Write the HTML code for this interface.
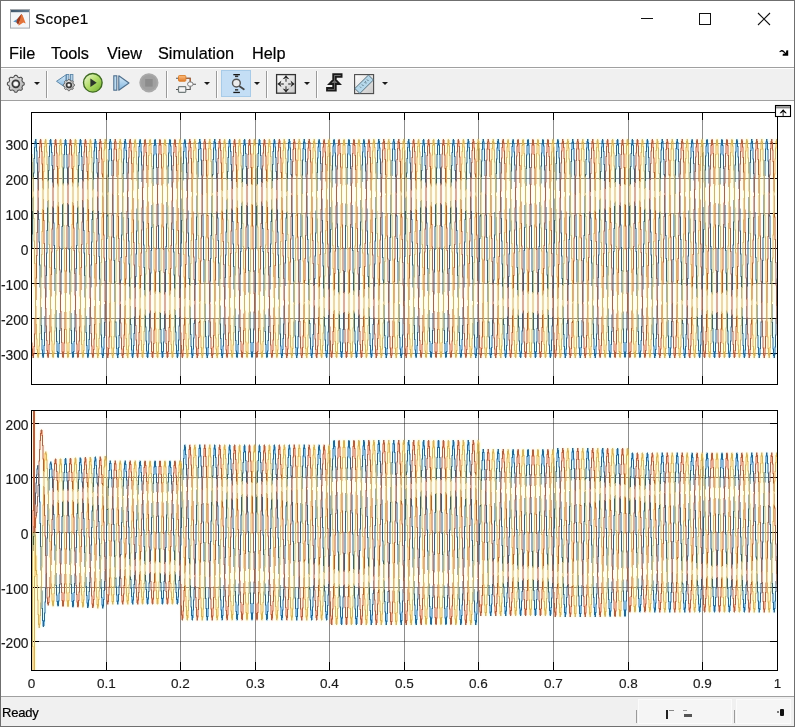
<!DOCTYPE html>
<html><head><meta charset="utf-8"><style>
html,body{margin:0;padding:0}
body{width:795px;height:727px;overflow:hidden;background:#fff;position:relative;font-family:"Liberation Sans",sans-serif;color:#000}
.a{position:absolute}
.t{position:absolute;left:0;top:0;width:795px;height:727px;will-change:transform}
.yl{position:absolute;left:0;width:28.5px;text-align:right;font-size:13.8px;line-height:17px;color:#1a1a1a;-webkit-text-stroke:0.15px #1a1a1a}
.xl{position:absolute;top:675px;width:61px;text-align:center;font-size:13.5px;line-height:17px;color:#1a1a1a;-webkit-text-stroke:0.15px #1a1a1a}
.menu{position:absolute;top:43px;font-size:16.3px;line-height:20px;color:#000;-webkit-text-stroke:0.2px #000}
</style></head><body>
<div class="a" style="left:0;top:0;width:795px;height:1px;background:#6f6f6f"></div>
<div class="a" style="left:0;top:0;width:1px;height:727px;background:#6f6f6f"></div>
<div class="a" style="left:794px;top:0;width:1px;height:727px;background:#6f6f6f"></div>
<div class="a" style="left:0;top:726px;width:795px;height:1px;background:#6f6f6f"></div>
<div class="t">
<div class="a" style="left:35px;top:9px;font-size:15.3px;line-height:19px;letter-spacing:0.3px;color:#000;-webkit-text-stroke:0.2px #000">Scope1</div>
<div class="menu" style="left:9px">File</div>
<div class="menu" style="left:51px">Tools</div>
<div class="menu" style="left:107px">View</div>
<div class="menu" style="left:158px">Simulation</div>
<div class="menu" style="left:252px">Help</div>
<div class="a" style="left:1px;top:67px;width:793px;height:1px;background:#a0a0a0"></div>
<div class="a" style="left:1px;top:69px;width:793px;height:31px;background:#f0f0f0"></div>
<div class="a" style="left:1px;top:100px;width:793px;height:1px;background:#a0a0a0"></div>
<div class="a" style="left:1px;top:696px;width:793px;height:1px;background:#a0a0a0"></div>
<div class="a" style="left:1px;top:697px;width:793px;height:29px;background:#f0f0f0"></div>
<div class="a" style="left:2px;top:704px;font-size:13px;line-height:17px;letter-spacing:-0.2px;color:#000;-webkit-text-stroke:0.2px #000">Ready</div>
<div class="yl" style="top:137px">300</div>
<div class="yl" style="top:172px">200</div>
<div class="yl" style="top:207px">100</div>
<div class="yl" style="top:242px">0</div>
<div class="yl" style="top:277px">-100</div>
<div class="yl" style="top:312px">-200</div>
<div class="yl" style="top:347px">-300</div>
<div class="yl" style="top:417px">200</div>
<div class="yl" style="top:471px">100</div>
<div class="yl" style="top:526px">0</div>
<div class="yl" style="top:581px">-100</div>
<div class="yl" style="top:635px">-200</div>
<div class="xl" style="left:1px">0</div>
<div class="xl" style="left:76px">0.1</div>
<div class="xl" style="left:150px">0.2</div>
<div class="xl" style="left:225px">0.3</div>
<div class="xl" style="left:299px">0.4</div>
<div class="xl" style="left:374px">0.5</div>
<div class="xl" style="left:448px">0.6</div>
<div class="xl" style="left:523px">0.7</div>
<div class="xl" style="left:598px">0.8</div>
<div class="xl" style="left:672px">0.9</div>
<div class="xl" style="left:747px">1</div>
</div>
<svg class="a" style="left:0;top:0" width="795" height="727">
<filter id="cb" x="31" y="110" width="748" height="562" filterUnits="userSpaceOnUse" color-interpolation-filters="sRGB">
<feColorMatrix in="SourceGraphic" type="matrix" values="0.299 0.587 0.114 0 0 0.299 0.587 0.114 0 0 0.299 0.587 0.114 0 0 0 0 0 1 0" result="L"/>
<feGaussianBlur in="SourceGraphic" stdDeviation="1.2" result="B"/>
<feColorMatrix in="B" type="matrix" values="0.299 0.587 0.114 0 0 0.299 0.587 0.114 0 0 0.299 0.587 0.114 0 0 0 0 0 1 0" result="LB"/>
<feComposite in="B" in2="LB" operator="arithmetic" k1="0" k2="1" k3="-1" k4="0.5" result="C"/>
<feComposite in="L" in2="C" operator="arithmetic" k1="0" k2="1" k3="1" k4="-0.5" result="R"/>
<feComposite in="R" in2="SourceGraphic" operator="in"/>
</filter>
<g filter="url(#cb)"><rect x="31" y="112" width="747" height="273" fill="#fff"/><rect x="31" y="410" width="747" height="261" fill="#fff"/><g shape-rendering="crispEdges"><rect x="106" y="112" width="1" height="272" fill="#000" fill-opacity="0.45"/>
<rect x="180" y="112" width="1" height="272" fill="#000" fill-opacity="0.45"/>
<rect x="255" y="112" width="1" height="272" fill="#000" fill-opacity="0.45"/>
<rect x="329" y="112" width="1" height="272" fill="#000" fill-opacity="0.45"/>
<rect x="404" y="112" width="1" height="272" fill="#000" fill-opacity="0.45"/>
<rect x="478" y="112" width="1" height="272" fill="#000" fill-opacity="0.45"/>
<rect x="553" y="112" width="1" height="272" fill="#000" fill-opacity="0.45"/>
<rect x="628" y="112" width="1" height="272" fill="#000" fill-opacity="0.45"/>
<rect x="702" y="112" width="1" height="272" fill="#000" fill-opacity="0.45"/>
<rect x="31" y="143" width="747" height="1" fill="#000" fill-opacity="0.45"/>
<rect x="31" y="178" width="747" height="1" fill="#000" fill-opacity="0.45"/>
<rect x="31" y="213" width="747" height="1" fill="#000" fill-opacity="0.45"/>
<rect x="31" y="248" width="747" height="1" fill="#000" fill-opacity="0.45"/>
<rect x="31" y="283" width="747" height="1" fill="#000" fill-opacity="0.45"/>
<rect x="31" y="318" width="747" height="1" fill="#000" fill-opacity="0.45"/>
<rect x="31" y="353" width="747" height="1" fill="#000" fill-opacity="0.45"/>
<rect x="106" y="112" width="1" height="8" fill="#000"/>
<rect x="106" y="376" width="1" height="8" fill="#000"/>
<rect x="180" y="112" width="1" height="8" fill="#000"/>
<rect x="180" y="376" width="1" height="8" fill="#000"/>
<rect x="255" y="112" width="1" height="8" fill="#000"/>
<rect x="255" y="376" width="1" height="8" fill="#000"/>
<rect x="329" y="112" width="1" height="8" fill="#000"/>
<rect x="329" y="376" width="1" height="8" fill="#000"/>
<rect x="404" y="112" width="1" height="8" fill="#000"/>
<rect x="404" y="376" width="1" height="8" fill="#000"/>
<rect x="478" y="112" width="1" height="8" fill="#000"/>
<rect x="478" y="376" width="1" height="8" fill="#000"/>
<rect x="553" y="112" width="1" height="8" fill="#000"/>
<rect x="553" y="376" width="1" height="8" fill="#000"/>
<rect x="628" y="112" width="1" height="8" fill="#000"/>
<rect x="628" y="376" width="1" height="8" fill="#000"/>
<rect x="702" y="112" width="1" height="8" fill="#000"/>
<rect x="702" y="376" width="1" height="8" fill="#000"/>
<rect x="31" y="143" width="8" height="1" fill="#000"/>
<rect x="770" y="143" width="8" height="1" fill="#000"/>
<rect x="31" y="178" width="8" height="1" fill="#000"/>
<rect x="770" y="178" width="8" height="1" fill="#000"/>
<rect x="31" y="213" width="8" height="1" fill="#000"/>
<rect x="770" y="213" width="8" height="1" fill="#000"/>
<rect x="31" y="248" width="8" height="1" fill="#000"/>
<rect x="770" y="248" width="8" height="1" fill="#000"/>
<rect x="31" y="283" width="8" height="1" fill="#000"/>
<rect x="770" y="283" width="8" height="1" fill="#000"/>
<rect x="31" y="318" width="8" height="1" fill="#000"/>
<rect x="770" y="318" width="8" height="1" fill="#000"/>
<rect x="31" y="353" width="8" height="1" fill="#000"/>
<rect x="770" y="353" width="8" height="1" fill="#000"/>
<rect x="106" y="410" width="1" height="260" fill="#000" fill-opacity="0.45"/>
<rect x="180" y="410" width="1" height="260" fill="#000" fill-opacity="0.45"/>
<rect x="255" y="410" width="1" height="260" fill="#000" fill-opacity="0.45"/>
<rect x="329" y="410" width="1" height="260" fill="#000" fill-opacity="0.45"/>
<rect x="404" y="410" width="1" height="260" fill="#000" fill-opacity="0.45"/>
<rect x="478" y="410" width="1" height="260" fill="#000" fill-opacity="0.45"/>
<rect x="553" y="410" width="1" height="260" fill="#000" fill-opacity="0.45"/>
<rect x="628" y="410" width="1" height="260" fill="#000" fill-opacity="0.45"/>
<rect x="702" y="410" width="1" height="260" fill="#000" fill-opacity="0.45"/>
<rect x="31" y="423" width="747" height="1" fill="#000" fill-opacity="0.45"/>
<rect x="31" y="477" width="747" height="1" fill="#000" fill-opacity="0.45"/>
<rect x="31" y="532" width="747" height="1" fill="#000" fill-opacity="0.45"/>
<rect x="31" y="587" width="747" height="1" fill="#000" fill-opacity="0.45"/>
<rect x="31" y="641" width="747" height="1" fill="#000" fill-opacity="0.45"/>
<rect x="106" y="410" width="1" height="8" fill="#000"/>
<rect x="106" y="662" width="1" height="8" fill="#000"/>
<rect x="180" y="410" width="1" height="8" fill="#000"/>
<rect x="180" y="662" width="1" height="8" fill="#000"/>
<rect x="255" y="410" width="1" height="8" fill="#000"/>
<rect x="255" y="662" width="1" height="8" fill="#000"/>
<rect x="329" y="410" width="1" height="8" fill="#000"/>
<rect x="329" y="662" width="1" height="8" fill="#000"/>
<rect x="404" y="410" width="1" height="8" fill="#000"/>
<rect x="404" y="662" width="1" height="8" fill="#000"/>
<rect x="478" y="410" width="1" height="8" fill="#000"/>
<rect x="478" y="662" width="1" height="8" fill="#000"/>
<rect x="553" y="410" width="1" height="8" fill="#000"/>
<rect x="553" y="662" width="1" height="8" fill="#000"/>
<rect x="628" y="410" width="1" height="8" fill="#000"/>
<rect x="628" y="662" width="1" height="8" fill="#000"/>
<rect x="702" y="410" width="1" height="8" fill="#000"/>
<rect x="702" y="662" width="1" height="8" fill="#000"/>
<rect x="31" y="423" width="8" height="1" fill="#000"/>
<rect x="770" y="423" width="8" height="1" fill="#000"/>
<rect x="31" y="477" width="8" height="1" fill="#000"/>
<rect x="770" y="477" width="8" height="1" fill="#000"/>
<rect x="31" y="532" width="8" height="1" fill="#000"/>
<rect x="770" y="532" width="8" height="1" fill="#000"/>
<rect x="31" y="587" width="8" height="1" fill="#000"/>
<rect x="770" y="587" width="8" height="1" fill="#000"/>
<rect x="31" y="641" width="8" height="1" fill="#000"/>
<rect x="770" y="641" width="8" height="1" fill="#000"/></g><g>
<path fill="#0072BD" d="M31.5 233.5h.5V246.5h-.5zM32 211h.5V248h-.5zM32.5 197.5h.5V234.5h-.5zM33 172.5h.5V177.5h-.5zM33.5 158h.5V191.5h-.5zM34 147h.5V173.5h-.5zM34.5 141h.5V159h-.5zM35 139h.5V148h-.5zM35.5 139h.5V143.5h-.5zM36 139h.5V151.5h-.5zM36.5 142.5h.5V163.5h-.5zM37 150.5h.5V179.5h-.5zM37.5 162.5h.5V189.5h-.5zM38 211h.5V220h-.5zM38.5 197.5h.5V242.5h-.5zM39 219h.5V265.5h-.5zM39.5 241.5h.5V287.5h-.5zM40 264.5h.5V297.5h-.5zM40.5 318h.5V326h-.5zM41 307h.5V340h-.5zM41.5 325h.5V350.5h-.5zM42 339h.5V356.5h-.5zM42.5 349.5h.5V358h-.5zM43 353h.5V358h-.5zM43.5 345h.5V357.5h-.5zM44 332h.5V354h-.5zM44.5 316h.5V346h-.5zM45 309h.5V333h-.5zM45.5 275h.5V287.5h-.5zM46 252.5h.5V297.5h-.5zM46.5 230h.5V276h-.5zM47 207.5h.5V253.5h-.5zM47.5 201h.5V231h-.5zM48 170h.5V180.5h-.5zM48.5 156h.5V188.5h-.5zM49 145.5h.5V171h-.5zM49.5 140h.5V157h-.5zM50 139h.5V146.5h-.5zM50.5 139h.5V144.5h-.5zM51 139.5h.5V153h-.5zM51.5 143.5h.5V166h-.5zM52 152h.5V182.5h-.5zM52.5 165h.5V186.5h-.5zM53 207.5h.5V223.5h-.5zM53.5 201h.5V246h-.5zM54 222.5h.5V269h-.5zM54.5 245h.5V291h-.5zM55 268h.5V294.5h-.5zM55.5 315h.5V328.5h-.5zM56 310h.5V342h-.5zM56.5 327.5h.5V352h-.5zM57 341h.5V357h-.5zM57.5 351h.5V358h-.5zM58 352h.5V358h-.5zM58.5 343h.5V357.5h-.5zM59 330h.5V353h-.5zM59.5 313h.5V344h-.5zM60 312h.5V331h-.5zM60.5 271.5h.5V291h-.5zM61 249h.5V294.5h-.5zM61.5 226h.5V272.5h-.5zM62 204.5h.5V250h-.5zM62.5 204h.5V227h-.5zM63 167.5h.5V183.5h-.5zM63.5 154h.5V185.5h-.5zM64 144.5h.5V168.5h-.5zM64.5 140h.5V155h-.5zM65 139h.5V145.5h-.5zM65.5 139h.5V145.5h-.5zM66 140h.5V155h-.5zM66.5 144.5h.5V168.5h-.5zM67 154h.5V185.5h-.5zM67.5 167.5h.5V183.5h-.5zM68 204h.5V227h-.5zM68.5 204.5h.5V250h-.5zM69 226h.5V272.5h-.5zM69.5 249h.5V294.5h-.5zM70 271.5h.5V291h-.5zM70.5 312h.5V331h-.5zM71 313h.5V344h-.5zM71.5 330h.5V353h-.5zM72 343h.5V357.5h-.5zM72.5 352h.5V358h-.5zM73 351h.5V358h-.5zM73.5 341h.5V357h-.5zM74 327.5h.5V352h-.5zM74.5 310h.5V342h-.5zM75 315h.5V328.5h-.5zM75.5 268h.5V294.5h-.5zM76 245h.5V291h-.5zM76.5 222.5h.5V269h-.5zM77 201h.5V246h-.5zM77.5 207.5h.5V223.5h-.5zM78 165h.5V186.5h-.5zM78.5 152h.5V182.5h-.5zM79 143.5h.5V166h-.5zM79.5 139.5h.5V153h-.5zM80 139h.5V144.5h-.5zM80.5 139h.5V146.5h-.5zM81 140h.5V157h-.5zM81.5 145.5h.5V171h-.5zM82 156h.5V188.5h-.5zM82.5 170h.5V180.5h-.5zM83 201h.5V231h-.5zM83.5 207.5h.5V253.5h-.5zM84 230h.5V276h-.5zM84.5 252.5h.5V297.5h-.5zM85 275h.5V287.5h-.5zM85.5 309h.5V333h-.5zM86 316h.5V346h-.5zM86.5 332h.5V354h-.5zM87 345h.5V357.5h-.5zM87.5 353h.5V358h-.5zM88 349.5h.5V358h-.5zM88.5 339h.5V356.5h-.5zM89 325h.5V350.5h-.5zM89.5 307h.5V340h-.5zM90 318h.5V326h-.5zM90.5 264.5h.5V297.5h-.5zM91 241.5h.5V287.5h-.5zM91.5 219h.5V265.5h-.5zM92 197.5h.5V242.5h-.5zM92.5 211h.5V220h-.5zM93 162.5h.5V189.5h-.5zM93.5 150.5h.5V179.5h-.5zM94 142.5h.5V163.5h-.5zM94.5 139h.5V151.5h-.5zM95 139h.5V143.5h-.5zM95.5 139h.5V148h-.5zM96 141h.5V159h-.5zM96.5 147h.5V173.5h-.5zM97 158h.5V191.5h-.5zM97.5 172.5h.5V177.5h-.5zM98 197.5h.5V234.5h-.5zM98.5 211h.5V257h-.5zM99 233.5h.5V279.5h-.5zM99.5 256h.5V301h-.5zM100 278.5h.5V284.5h-.5zM100.5 306h.5V335.5h-.5zM101 318.5h.5V347.5h-.5zM101.5 334.5h.5V355h-.5zM102 346.5h.5V358h-.5zM102.5 354h.5V358h-.5zM103 348.5h.5V358h-.5zM103.5 337h.5V356h-.5zM104 322h.5V349.5h-.5zM104.5 304h.5V338h-.5zM105 320.5h.5V323h-.5zM105.5 261h.5V301h-.5zM106 238h.5V284h-.5zM106.5 215.5h.5V262h-.5zM107 194.5h.5V239h-.5zM107.5 214.5h.5V216.5h-.5zM108 160.5h.5V192.5h-.5zM108.5 149h.5V177h-.5zM109 141.5h.5V161.5h-.5zM109.5 139h.5V150h-.5zM110 139h.5V142.5h-.5zM110.5 139h.5V149.5h-.5zM111 141.5h.5V161h-.5zM111.5 148.5h.5V176h-.5zM112 160h.5V193.5h-.5zM113 194.5h.5V238h-.5zM113.5 214.5h.5V261h-.5zM114 237h.5V283h-.5zM114.5 260h.5V302h-.5zM115 321.5h.5V322.5h-.5zM115.5 303h.5V337.5h-.5zM116 321.5h.5V349h-.5zM116.5 336.5h.5V355.5h-.5zM117 348h.5V358h-.5zM117.5 354h.5V358h-.5zM118 347h.5V358h-.5zM118.5 335h.5V355h-.5zM119 319.5h.5V348h-.5zM119.5 305h.5V336h-.5zM120 279.5h.5V283.5h-.5zM120.5 257h.5V301.5h-.5zM121 234.5h.5V280.5h-.5zM121.5 212h.5V258h-.5zM122 197h.5V235.5h-.5zM122.5 173h.5V177h-.5zM123 158.5h.5V192.5h-.5zM123.5 147.5h.5V174h-.5zM124 141h.5V159.5h-.5zM124.5 139h.5V148.5h-.5zM125 139h.5V143.5h-.5zM125.5 139h.5V151h-.5zM126 142.5h.5V163h-.5zM126.5 150h.5V179h-.5zM127 162h.5V190.5h-.5zM127.5 212h.5V219h-.5zM128 197h.5V241.5h-.5zM128.5 218h.5V264.5h-.5zM129 240.5h.5V286.5h-.5zM129.5 263.5h.5V298.5h-.5zM130 318.5h.5V325h-.5zM130.5 306h.5V339.5h-.5zM131 324h.5V350.5h-.5zM131.5 338.5h.5V356.5h-.5zM132 349.5h.5V358h-.5zM132.5 353.5h.5V358h-.5zM133 345h.5V357.5h-.5zM133.5 333h.5V354.5h-.5zM134 316.5h.5V346h-.5zM134.5 308h.5V334h-.5zM135 276h.5V287h-.5zM135.5 253.5h.5V298.5h-.5zM136 230.5h.5V277h-.5zM136.5 208.5h.5V254.5h-.5zM137 200h.5V231.5h-.5zM137.5 170.5h.5V180h-.5zM138 156.5h.5V189h-.5zM138.5 146h.5V171.5h-.5zM139 140.5h.5V157.5h-.5zM139.5 139h.5V147h-.5zM140 139h.5V144h-.5zM140.5 139.5h.5V152.5h-.5zM141 143h.5V165.5h-.5zM141.5 151.5h.5V182h-.5zM142 164.5h.5V187h-.5zM142.5 208.5h.5V222.5h-.5zM143 200h.5V245.5h-.5zM143.5 221.5h.5V268h-.5zM144 244.5h.5V290h-.5zM144.5 267h.5V295.5h-.5zM145 315.5h.5V327.5h-.5zM145.5 309.5h.5V341.5h-.5zM146 326.5h.5V351.5h-.5zM146.5 340.5h.5V357h-.5zM147 350.5h.5V358h-.5zM147.5 352.5h.5V358h-.5zM148 343.5h.5V357.5h-.5zM148.5 330.5h.5V353.5h-.5zM149 313.5h.5V344.5h-.5zM149.5 311.5h.5V331.5h-.5zM150 272.5h.5V290.5h-.5zM150.5 250h.5V295h-.5zM151 227h.5V273.5h-.5zM151.5 205h.5V251h-.5zM152 203.5h.5V228h-.5zM152.5 168h.5V182.5h-.5zM153 154.5h.5V186h-.5zM153.5 145h.5V169h-.5zM154 140h.5V155.5h-.5zM154.5 139h.5V146h-.5zM155 139h.5V145.5h-.5zM155.5 139.5h.5V154.5h-.5zM156 144.5h.5V168h-.5zM156.5 153.5h.5V184.5h-.5zM157 167h.5V184h-.5zM157.5 205h.5V226h-.5zM158 203.5h.5V249h-.5zM158.5 225h.5V272h-.5zM159 248h.5V293.5h-.5zM159.5 271h.5V292h-.5zM160 313h.5V330h-.5zM160.5 312.5h.5V343.5h-.5zM161 329h.5V352.5h-.5zM161.5 342.5h.5V357.5h-.5zM162 351.5h.5V358h-.5zM162.5 351h.5V358h-.5zM163 341.5h.5V357h-.5zM163.5 328h.5V352h-.5zM164 311h.5V342.5h-.5zM164.5 314.5h.5V329h-.5zM165 269h.5V293.5h-.5zM165.5 246h.5V292h-.5zM166 223.5h.5V270h-.5zM166.5 202h.5V247h-.5zM167 206.5h.5V224.5h-.5zM167.5 165.5h.5V185.5h-.5zM168 152.5h.5V183.5h-.5zM168.5 143.5h.5V166.5h-.5zM169 139.5h.5V153.5h-.5zM169.5 139h.5V144.5h-.5zM170 139h.5V146.5h-.5zM170.5 140h.5V156.5h-.5zM171 145.5h.5V170.5h-.5zM171.5 155.5h.5V187.5h-.5zM172 169.5h.5V181.5h-.5zM172.5 201.5h.5V230h-.5zM173 207h.5V252.5h-.5zM173.5 229h.5V275.5h-.5zM174 251.5h.5V297h-.5zM174.5 274.5h.5V288.5h-.5zM175 310h.5V332.5h-.5zM175.5 315h.5V345.5h-.5zM176 331.5h.5V354h-.5zM176.5 344.5h.5V357.5h-.5zM177 353h.5V358h-.5zM177.5 350h.5V358h-.5zM178 339.5h.5V356.5h-.5zM178.5 325.5h.5V351h-.5zM179 308h.5V340.5h-.5zM179.5 317h.5V326.5h-.5zM180 265.5h.5V297h-.5zM180.5 242.5h.5V288.5h-.5zM181 220h.5V266.5h-.5zM181.5 198.5h.5V243.5h-.5zM182 210h.5V221h-.5zM182.5 163h.5V189h-.5zM183 151h.5V180.5h-.5zM183.5 142.5h.5V164h-.5zM184 139.5h.5V152h-.5zM184.5 139h.5V143.5h-.5zM185 139h.5V147.5h-.5zM185.5 140.5h.5V158.5h-.5zM186 146.5h.5V173h-.5zM186.5 157.5h.5V191h-.5zM187 172h.5V178.5h-.5zM187.5 198.5h.5V233.5h-.5zM188 210.5h.5V256.5h-.5zM188.5 232.5h.5V279h-.5zM189 255.5h.5V300h-.5zM189.5 278h.5V285h-.5zM190 306.5h.5V335h-.5zM190.5 318h.5V347h-.5zM191 334h.5V354.5h-.5zM191.5 346h.5V358h-.5zM192 353.5h.5V358h-.5zM192.5 348.5h.5V358h-.5zM193 337.5h.5V356h-.5zM193.5 323h.5V349.5h-.5zM194 304.5h.5V338.5h-.5zM194.5 320h.5V324h-.5zM195 261.5h.5V300h-.5zM195.5 239h.5V285h-.5zM196 216.5h.5V262.5h-.5zM196.5 195.5h.5V240h-.5zM197 213.5h.5V217.5h-.5zM197.5 161h.5V192h-.5zM198 149h.5V177.5h-.5zM198.5 142h.5V162h-.5zM199 139h.5V150h-.5zM199.5 139h.5V143h-.5zM200 139h.5V149h-.5zM200.5 141.5h.5V160.5h-.5zM201 148h.5V175.5h-.5zM201.5 159.5h.5V194h-.5zM202 174.5h.5V175.5h-.5zM202.5 195h.5V237h-.5zM203 214h.5V260h-.5zM203.5 236h.5V282.5h-.5zM204 259h.5V302.5h-.5zM205 303.5h.5V337h-.5zM205.5 321h.5V348.5h-.5zM206 336h.5V355.5h-.5zM206.5 347.5h.5V358h-.5zM207 354.5h.5V358h-.5zM207.5 347h.5V358h-.5zM208 335.5h.5V355.5h-.5zM208.5 320h.5V348h-.5zM209 304.5h.5V336.5h-.5zM209.5 280.5h.5V282.5h-.5zM210 258h.5V302.5h-.5zM210.5 235h.5V281.5h-.5zM211 213h.5V259h-.5zM211.5 196h.5V236h-.5zM212 174h.5V176.5h-.5zM212.5 159h.5V193h-.5zM213 147.5h.5V175h-.5zM213.5 141h.5V160h-.5zM214 139h.5V148.5h-.5zM214.5 139h.5V143h-.5zM215 139h.5V150.5h-.5zM215.5 142h.5V162.5h-.5zM216 149.5h.5V178.5h-.5zM216.5 161.5h.5V191h-.5zM217 212.5h.5V218.5h-.5zM217.5 196h.5V241h-.5zM218 217.5h.5V263.5h-.5zM218.5 240h.5V286h-.5zM219 262.5h.5V299.5h-.5zM219.5 319.5h.5V324.5h-.5zM220 305.5h.5V339h-.5zM220.5 323.5h.5V350h-.5zM221 338h.5V356h-.5zM221.5 349h.5V358h-.5zM222 353.5h.5V358h-.5zM222.5 345.5h.5V358h-.5zM223 333.5h.5V354.5h-.5zM223.5 317.5h.5V346.5h-.5zM224 307.5h.5V334.5h-.5zM224.5 277h.5V286h-.5zM225 254.5h.5V299.5h-.5zM225.5 231.5h.5V278h-.5zM226 209.5h.5V255.5h-.5zM226.5 199.5h.5V232.5h-.5zM227 171h.5V179h-.5zM227.5 157h.5V190h-.5zM228 146.5h.5V172h-.5zM228.5 140.5h.5V158h-.5zM229 139h.5V147.5h-.5zM229.5 139h.5V144h-.5zM230 139.5h.5V152h-.5zM230.5 143h.5V165h-.5zM231 151h.5V181h-.5zM231.5 164h.5V188h-.5zM232 209.5h.5V222h-.5zM232.5 199.5h.5V244.5h-.5zM233 221h.5V267h-.5zM233.5 243.5h.5V289.5h-.5zM234 266h.5V296h-.5zM234.5 316.5h.5V327h-.5zM235 308.5h.5V341h-.5zM235.5 326h.5V351.5h-.5zM236 340h.5V357h-.5zM236.5 350.5h.5V358h-.5zM237 352.5h.5V358h-.5zM237.5 344h.5V357.5h-.5zM238 331h.5V353.5h-.5zM238.5 314.5h.5V345h-.5zM239 310.5h.5V332h-.5zM239.5 273.5h.5V289.5h-.5zM240 251h.5V296h-.5zM240.5 228h.5V274.5h-.5zM241 206h.5V252h-.5zM241.5 202.5h.5V229h-.5zM242 168.5h.5V182h-.5zM242.5 155h.5V187h-.5zM243 145h.5V169.5h-.5zM243.5 140h.5V156h-.5zM244 139h.5V146h-.5zM244.5 139h.5V145h-.5zM245 139.5h.5V154h-.5zM245.5 144h.5V167h-.5zM246 153h.5V184h-.5zM246.5 166h.5V185h-.5zM247 206h.5V225.5h-.5zM247.5 202.5h.5V248h-.5zM248 224.5h.5V271h-.5zM248.5 247h.5V292.5h-.5zM249 270h.5V293h-.5zM249.5 313.5h.5V329.5h-.5zM250 311.5h.5V343h-.5zM250.5 328.5h.5V352.5h-.5zM251 342h.5V357h-.5zM251.5 351.5h.5V358h-.5zM252 351.5h.5V358h-.5zM252.5 342h.5V357h-.5zM253 328.5h.5V352.5h-.5zM253.5 311.5h.5V343h-.5zM254 313.5h.5V329.5h-.5zM254.5 270h.5V293h-.5zM255 247h.5V292.5h-.5zM255.5 224.5h.5V271h-.5zM256 202.5h.5V248h-.5zM256.5 206h.5V225.5h-.5zM257 166h.5V185h-.5zM257.5 153h.5V184h-.5zM258 144h.5V167h-.5zM258.5 139.5h.5V154h-.5zM259 139h.5V145h-.5zM259.5 139h.5V146h-.5zM260 140h.5V156h-.5zM260.5 145h.5V169.5h-.5zM261 155h.5V187h-.5zM261.5 168.5h.5V182h-.5zM262 202.5h.5V229h-.5zM262.5 206h.5V252h-.5zM263 228h.5V274.5h-.5zM263.5 251h.5V296h-.5zM264 273.5h.5V289.5h-.5zM264.5 310.5h.5V332h-.5zM265 314.5h.5V345h-.5zM265.5 331h.5V353.5h-.5zM266 344h.5V357.5h-.5zM266.5 352.5h.5V358h-.5zM267 350.5h.5V358h-.5zM267.5 340h.5V357h-.5zM268 326h.5V351.5h-.5zM268.5 308.5h.5V341h-.5zM269 316.5h.5V327h-.5zM269.5 266h.5V296h-.5zM270 243.5h.5V289.5h-.5zM270.5 221h.5V267h-.5zM271 199.5h.5V244.5h-.5zM271.5 209.5h.5V222h-.5zM272 164h.5V188h-.5zM272.5 151h.5V181h-.5zM273 143h.5V165h-.5zM273.5 139.5h.5V152h-.5zM274 139h.5V144h-.5zM274.5 139h.5V147.5h-.5zM275 140.5h.5V158h-.5zM275.5 146.5h.5V172h-.5zM276 157h.5V190h-.5zM276.5 171h.5V179h-.5zM277 199.5h.5V232.5h-.5zM277.5 209.5h.5V255.5h-.5zM278 231.5h.5V278h-.5zM278.5 254.5h.5V299.5h-.5zM279 277h.5V286h-.5zM279.5 307.5h.5V334.5h-.5zM280 317.5h.5V346.5h-.5zM280.5 333.5h.5V354.5h-.5zM281 345.5h.5V358h-.5zM281.5 353.5h.5V358h-.5zM282 349h.5V358h-.5zM282.5 338h.5V356h-.5zM283 323.5h.5V350h-.5zM283.5 305.5h.5V339h-.5zM284 319.5h.5V324.5h-.5zM284.5 262.5h.5V299.5h-.5zM285 240h.5V286h-.5zM285.5 217.5h.5V263.5h-.5zM286 196h.5V241h-.5zM286.5 212.5h.5V218.5h-.5zM287 161.5h.5V191h-.5zM287.5 149.5h.5V178.5h-.5zM288 142h.5V162.5h-.5zM288.5 139h.5V150.5h-.5zM289 139h.5V143h-.5zM289.5 139h.5V148.5h-.5zM290 141h.5V160h-.5zM290.5 147.5h.5V175h-.5zM291 159h.5V193h-.5zM291.5 174h.5V176.5h-.5zM292 196h.5V236h-.5zM292.5 213h.5V259h-.5zM293 235h.5V281.5h-.5zM293.5 258h.5V302.5h-.5zM294 280.5h.5V282.5h-.5zM294.5 304.5h.5V336.5h-.5zM295 320h.5V348h-.5zM295.5 335.5h.5V355.5h-.5zM296 347h.5V358h-.5zM296.5 354.5h.5V358h-.5zM297 347.5h.5V358h-.5zM297.5 336h.5V355.5h-.5zM298 321h.5V348.5h-.5zM298.5 303.5h.5V337h-.5zM299.5 259h.5V302.5h-.5zM300 236h.5V282.5h-.5zM300.5 214h.5V260h-.5zM301 195h.5V237h-.5zM301.5 174.5h.5V175.5h-.5zM302 159.5h.5V194h-.5zM302.5 148h.5V175.5h-.5zM303 141.5h.5V160.5h-.5zM303.5 139h.5V149h-.5zM304 139h.5V143h-.5zM304.5 139h.5V150h-.5zM305 142h.5V162h-.5zM305.5 149h.5V177.5h-.5zM306 161h.5V192h-.5zM306.5 213.5h.5V217.5h-.5zM307 195.5h.5V240h-.5zM307.5 216.5h.5V262.5h-.5zM308 239h.5V285h-.5zM308.5 261.5h.5V300h-.5zM309 320h.5V324h-.5zM309.5 304.5h.5V338.5h-.5zM310 323h.5V349.5h-.5zM310.5 337.5h.5V356h-.5zM311 348.5h.5V358h-.5zM311.5 353.5h.5V358h-.5zM312 346h.5V358h-.5zM312.5 334h.5V354.5h-.5zM313 318h.5V347h-.5zM313.5 306.5h.5V335h-.5zM314 278h.5V285h-.5zM314.5 255.5h.5V300h-.5zM315 232.5h.5V279h-.5zM315.5 210.5h.5V256.5h-.5zM316 198.5h.5V233.5h-.5zM316.5 172h.5V178.5h-.5zM317 157.5h.5V191h-.5zM317.5 146.5h.5V173h-.5zM318 140.5h.5V158.5h-.5zM318.5 139h.5V147.5h-.5zM319 139h.5V143.5h-.5zM319.5 139.5h.5V152h-.5zM320 142.5h.5V164h-.5zM320.5 151h.5V180.5h-.5zM321 163h.5V189h-.5zM321.5 210h.5V221h-.5zM322 198.5h.5V243.5h-.5zM322.5 220h.5V266.5h-.5zM323 242.5h.5V288.5h-.5zM323.5 265.5h.5V297h-.5zM324 317h.5V326.5h-.5zM324.5 308h.5V340.5h-.5zM325 325.5h.5V351h-.5zM325.5 339.5h.5V356.5h-.5zM326 350h.5V358h-.5zM326.5 353h.5V358h-.5zM327 344.5h.5V357.5h-.5zM327.5 331.5h.5V354h-.5zM328 315h.5V345.5h-.5zM328.5 310h.5V332.5h-.5zM329 274.5h.5V288.5h-.5zM329.5 251.5h.5V297h-.5zM330 229h.5V275.5h-.5zM330.5 207h.5V252.5h-.5zM331 201.5h.5V230h-.5zM331.5 169.5h.5V181.5h-.5zM332 155.5h.5V187.5h-.5zM332.5 145.5h.5V170.5h-.5zM333 140h.5V156.5h-.5zM333.5 139h.5V146.5h-.5zM334 139h.5V144.5h-.5zM334.5 139.5h.5V153.5h-.5zM335 143.5h.5V166.5h-.5zM335.5 152.5h.5V183.5h-.5zM336 165.5h.5V185.5h-.5zM336.5 206.5h.5V224.5h-.5zM337 202h.5V247h-.5zM337.5 223.5h.5V270h-.5zM338 246h.5V292h-.5zM338.5 269h.5V293.5h-.5zM339 314.5h.5V329h-.5zM339.5 311h.5V342.5h-.5zM340 328h.5V352h-.5zM340.5 341.5h.5V357h-.5zM341 351h.5V358h-.5zM341.5 351.5h.5V358h-.5zM342 342.5h.5V357.5h-.5zM342.5 329h.5V352.5h-.5zM343 312.5h.5V343.5h-.5zM343.5 313h.5V330h-.5zM344 271h.5V292h-.5zM344.5 248h.5V293.5h-.5zM345 225h.5V272h-.5zM345.5 203.5h.5V249h-.5zM346 205h.5V226h-.5zM346.5 167h.5V184h-.5zM347 153.5h.5V184.5h-.5zM347.5 144.5h.5V168h-.5zM348 139.5h.5V154.5h-.5zM348.5 139h.5V145.5h-.5zM349 139h.5V146h-.5zM349.5 140h.5V155.5h-.5zM350 145h.5V169h-.5zM350.5 154.5h.5V186h-.5zM351 168h.5V182.5h-.5zM351.5 203.5h.5V228h-.5zM352 205h.5V251h-.5zM352.5 227h.5V273.5h-.5zM353 250h.5V295h-.5zM353.5 272.5h.5V290.5h-.5zM354 311.5h.5V331.5h-.5zM354.5 313.5h.5V344.5h-.5zM355 330.5h.5V353.5h-.5zM355.5 343.5h.5V357.5h-.5zM356 352.5h.5V358h-.5zM356.5 350.5h.5V358h-.5zM357 340.5h.5V357h-.5zM357.5 326.5h.5V351.5h-.5zM358 309.5h.5V341.5h-.5zM358.5 315.5h.5V327.5h-.5zM359 267h.5V295.5h-.5zM359.5 244.5h.5V290h-.5zM360 221.5h.5V268h-.5zM360.5 200h.5V245.5h-.5zM361 208.5h.5V222.5h-.5zM361.5 164.5h.5V187h-.5zM362 151.5h.5V182h-.5zM362.5 143h.5V165.5h-.5zM363 139.5h.5V152.5h-.5zM363.5 139h.5V144h-.5zM364 139h.5V147h-.5zM364.5 140.5h.5V157.5h-.5zM365 146h.5V171.5h-.5zM365.5 156.5h.5V189h-.5zM366 170.5h.5V180h-.5zM366.5 200h.5V231.5h-.5zM367 208.5h.5V254.5h-.5zM367.5 230.5h.5V277h-.5zM368 253.5h.5V298.5h-.5zM368.5 276h.5V287h-.5zM369 308h.5V334h-.5zM369.5 316.5h.5V346h-.5zM370 333h.5V354.5h-.5zM370.5 345h.5V357.5h-.5zM371 353.5h.5V358h-.5zM371.5 349.5h.5V358h-.5zM372 338.5h.5V356.5h-.5zM372.5 324h.5V350.5h-.5zM373 306h.5V339.5h-.5zM373.5 318.5h.5V325h-.5zM374 263.5h.5V298.5h-.5zM374.5 240.5h.5V286.5h-.5zM375 218h.5V264.5h-.5zM375.5 197h.5V241.5h-.5zM376 212h.5V219h-.5zM376.5 162h.5V190.5h-.5zM377 150h.5V179h-.5zM377.5 142.5h.5V163h-.5zM378 139h.5V151h-.5zM378.5 139h.5V143.5h-.5zM379 139h.5V148.5h-.5zM379.5 141h.5V159.5h-.5zM380 147.5h.5V174h-.5zM380.5 158.5h.5V192.5h-.5zM381 173h.5V177h-.5zM381.5 197h.5V235.5h-.5zM382 212h.5V258h-.5zM382.5 234.5h.5V280.5h-.5zM383 257h.5V301.5h-.5zM383.5 279.5h.5V283.5h-.5zM384 305h.5V336h-.5zM384.5 319.5h.5V348h-.5zM385 335h.5V355h-.5zM385.5 347h.5V358h-.5zM386 354h.5V358h-.5zM386.5 348h.5V358h-.5zM387 336.5h.5V355.5h-.5zM387.5 321.5h.5V349h-.5zM388 303h.5V337.5h-.5zM388.5 321.5h.5V322.5h-.5zM389 260h.5V302h-.5zM389.5 237h.5V283h-.5zM390 214.5h.5V261h-.5zM390.5 194.5h.5V238h-.5zM391.5 160h.5V193.5h-.5zM392 148.5h.5V176h-.5zM392.5 141.5h.5V161h-.5zM393 139h.5V149.5h-.5zM393.5 139h.5V142.5h-.5zM394 139h.5V150h-.5zM394.5 141.5h.5V161.5h-.5zM395 149h.5V177h-.5zM395.5 160.5h.5V192.5h-.5zM396 214.5h.5V216.5h-.5zM396.5 194.5h.5V239h-.5zM397 215.5h.5V262h-.5zM397.5 238h.5V284h-.5zM398 261h.5V301h-.5zM398.5 320.5h.5V323h-.5zM399 304h.5V338h-.5zM399.5 322h.5V349.5h-.5zM400 337h.5V356h-.5zM400.5 348.5h.5V358h-.5zM401 354h.5V358h-.5zM401.5 346.5h.5V358h-.5zM402 334.5h.5V355h-.5zM402.5 318.5h.5V347.5h-.5zM403 306h.5V335.5h-.5zM403.5 278.5h.5V284.5h-.5zM404 256h.5V301h-.5zM404.5 233.5h.5V279.5h-.5zM405 211h.5V257h-.5zM405.5 197.5h.5V234.5h-.5zM406 172.5h.5V177.5h-.5zM406.5 158h.5V191.5h-.5zM407 147h.5V173.5h-.5zM407.5 141h.5V159h-.5zM408 139h.5V148h-.5zM408.5 139h.5V143.5h-.5zM409 139h.5V151.5h-.5zM409.5 142.5h.5V163.5h-.5zM410 150.5h.5V179.5h-.5zM410.5 162.5h.5V189.5h-.5zM411 211h.5V220h-.5zM411.5 197.5h.5V242.5h-.5zM412 219h.5V265.5h-.5zM412.5 241.5h.5V287.5h-.5zM413 264.5h.5V297.5h-.5zM413.5 318h.5V326h-.5zM414 307h.5V340h-.5zM414.5 325h.5V350.5h-.5zM415 339h.5V356.5h-.5zM415.5 349.5h.5V358h-.5zM416 353h.5V358h-.5zM416.5 345h.5V357.5h-.5zM417 332h.5V354h-.5zM417.5 316h.5V346h-.5zM418 309h.5V333h-.5zM418.5 275h.5V287.5h-.5zM419 252.5h.5V297.5h-.5zM419.5 230h.5V276h-.5zM420 207.5h.5V253.5h-.5zM420.5 201h.5V231h-.5zM421 170h.5V180.5h-.5zM421.5 156h.5V188.5h-.5zM422 145.5h.5V171h-.5zM422.5 140h.5V157h-.5zM423 139h.5V146.5h-.5zM423.5 139h.5V144.5h-.5zM424 139.5h.5V153h-.5zM424.5 143.5h.5V166h-.5zM425 152h.5V182.5h-.5zM425.5 165h.5V186.5h-.5zM426 207.5h.5V223.5h-.5zM426.5 201h.5V246h-.5zM427 222.5h.5V269h-.5zM427.5 245h.5V291h-.5zM428 268h.5V294.5h-.5zM428.5 315h.5V328.5h-.5zM429 310h.5V342h-.5zM429.5 327.5h.5V352h-.5zM430 341h.5V357h-.5zM430.5 351h.5V358h-.5zM431 352h.5V358h-.5zM431.5 343h.5V357.5h-.5zM432 330h.5V353h-.5zM432.5 313h.5V344h-.5zM433 312h.5V331h-.5zM433.5 271.5h.5V291h-.5zM434 249h.5V294.5h-.5zM434.5 226h.5V272.5h-.5zM435 204.5h.5V250h-.5zM435.5 204h.5V227h-.5zM436 167.5h.5V183.5h-.5zM436.5 154h.5V185.5h-.5zM437 144.5h.5V168.5h-.5zM437.5 140h.5V155h-.5zM438 139h.5V145.5h-.5zM438.5 139h.5V145.5h-.5zM439 140h.5V155h-.5zM439.5 144.5h.5V168.5h-.5zM440 154h.5V185.5h-.5zM440.5 167.5h.5V183.5h-.5zM441 204h.5V227h-.5zM441.5 204.5h.5V250h-.5zM442 226h.5V272.5h-.5zM442.5 249h.5V294.5h-.5zM443 271.5h.5V291h-.5zM443.5 312h.5V331h-.5zM444 313h.5V344h-.5zM444.5 330h.5V353h-.5zM445 343h.5V357.5h-.5zM445.5 352h.5V358h-.5zM446 351h.5V358h-.5zM446.5 341h.5V357h-.5zM447 327.5h.5V352h-.5zM447.5 310h.5V342h-.5zM448 315h.5V328.5h-.5zM448.5 268h.5V294.5h-.5zM449 245h.5V291h-.5zM449.5 222.5h.5V269h-.5zM450 201h.5V246h-.5zM450.5 207.5h.5V223.5h-.5zM451 165h.5V186.5h-.5zM451.5 152h.5V182.5h-.5zM452 143.5h.5V166h-.5zM452.5 139.5h.5V153h-.5zM453 139h.5V144.5h-.5zM453.5 139h.5V146.5h-.5zM454 140h.5V157h-.5zM454.5 145.5h.5V171h-.5zM455 156h.5V188.5h-.5zM455.5 170h.5V180.5h-.5zM456 201h.5V231h-.5zM456.5 207.5h.5V253.5h-.5zM457 230h.5V276h-.5zM457.5 252.5h.5V297.5h-.5zM458 275h.5V287.5h-.5zM458.5 309h.5V333h-.5zM459 316h.5V346h-.5zM459.5 332h.5V354h-.5zM460 345h.5V357.5h-.5zM460.5 353h.5V358h-.5zM461 349.5h.5V358h-.5zM461.5 339h.5V356.5h-.5zM462 325h.5V350.5h-.5zM462.5 307h.5V340h-.5zM463 318h.5V326h-.5zM463.5 264.5h.5V297.5h-.5zM464 241.5h.5V287.5h-.5zM464.5 219h.5V265.5h-.5zM465 197.5h.5V242.5h-.5zM465.5 211h.5V220h-.5zM466 162.5h.5V189.5h-.5zM466.5 150.5h.5V179.5h-.5zM467 142.5h.5V163.5h-.5zM467.5 139h.5V151.5h-.5zM468 139h.5V143.5h-.5zM468.5 139h.5V148h-.5zM469 141h.5V159h-.5zM469.5 147h.5V173.5h-.5zM470 158h.5V191.5h-.5zM470.5 172.5h.5V177.5h-.5zM471 197.5h.5V234.5h-.5zM471.5 211h.5V257h-.5zM472 233.5h.5V279.5h-.5zM472.5 256h.5V301h-.5zM473 278.5h.5V284.5h-.5zM473.5 306h.5V335.5h-.5zM474 318.5h.5V347.5h-.5zM474.5 334.5h.5V355h-.5zM475 346.5h.5V358h-.5zM475.5 354h.5V358h-.5zM476 348.5h.5V358h-.5zM476.5 337h.5V356h-.5zM477 322h.5V349.5h-.5zM477.5 304h.5V338h-.5zM478 320.5h.5V323h-.5zM478.5 261h.5V301h-.5zM479 238h.5V284h-.5zM479.5 215.5h.5V262h-.5zM480 194.5h.5V239h-.5zM480.5 214.5h.5V216.5h-.5zM481 160.5h.5V192.5h-.5zM481.5 149h.5V177h-.5zM482 141.5h.5V161.5h-.5zM482.5 139h.5V150h-.5zM483 139h.5V142.5h-.5zM483.5 139h.5V149.5h-.5zM484 141.5h.5V161h-.5zM484.5 148.5h.5V176h-.5zM485 160h.5V193.5h-.5zM486 194.5h.5V238h-.5zM486.5 214.5h.5V261h-.5zM487 237h.5V283h-.5zM487.5 260h.5V302h-.5zM488 321.5h.5V322.5h-.5zM488.5 303h.5V337.5h-.5zM489 321.5h.5V349h-.5zM489.5 336.5h.5V355.5h-.5zM490 348h.5V358h-.5zM490.5 354h.5V358h-.5zM491 347h.5V358h-.5zM491.5 335h.5V355h-.5zM492 319.5h.5V348h-.5zM492.5 305h.5V336h-.5zM493 279.5h.5V283.5h-.5zM493.5 257h.5V301.5h-.5zM494 234.5h.5V280.5h-.5zM494.5 212h.5V258h-.5zM495 197h.5V235.5h-.5zM495.5 173h.5V177h-.5zM496 158.5h.5V192.5h-.5zM496.5 147.5h.5V174h-.5zM497 141h.5V159.5h-.5zM497.5 139h.5V148.5h-.5zM498 139h.5V143.5h-.5zM498.5 139h.5V151h-.5zM499 142.5h.5V163h-.5zM499.5 150h.5V179h-.5zM500 162h.5V190.5h-.5zM500.5 212h.5V219h-.5zM501 197h.5V241.5h-.5zM501.5 218h.5V264.5h-.5zM502 240.5h.5V286.5h-.5zM502.5 263.5h.5V298.5h-.5zM503 318.5h.5V325h-.5zM503.5 306h.5V339.5h-.5zM504 324h.5V350.5h-.5zM504.5 338.5h.5V356.5h-.5zM505 349.5h.5V358h-.5zM505.5 353.5h.5V358h-.5zM506 345h.5V357.5h-.5zM506.5 333h.5V354.5h-.5zM507 316.5h.5V346h-.5zM507.5 308h.5V334h-.5zM508 276h.5V287h-.5zM508.5 253.5h.5V298.5h-.5zM509 230.5h.5V277h-.5zM509.5 208.5h.5V254.5h-.5zM510 200h.5V231.5h-.5zM510.5 170.5h.5V180h-.5zM511 156.5h.5V189h-.5zM511.5 146h.5V171.5h-.5zM512 140.5h.5V157.5h-.5zM512.5 139h.5V147h-.5zM513 139h.5V144h-.5zM513.5 139.5h.5V152.5h-.5zM514 143h.5V165.5h-.5zM514.5 151.5h.5V182h-.5zM515 164.5h.5V187h-.5zM515.5 208.5h.5V222.5h-.5zM516 200h.5V245.5h-.5zM516.5 221.5h.5V268h-.5zM517 244.5h.5V290h-.5zM517.5 267h.5V295.5h-.5zM518 315.5h.5V327.5h-.5zM518.5 309.5h.5V341.5h-.5zM519 326.5h.5V351.5h-.5zM519.5 340.5h.5V357h-.5zM520 350.5h.5V358h-.5zM520.5 352.5h.5V358h-.5zM521 343.5h.5V357.5h-.5zM521.5 330.5h.5V353.5h-.5zM522 313.5h.5V344.5h-.5zM522.5 311.5h.5V331.5h-.5zM523 272.5h.5V290.5h-.5zM523.5 250h.5V295h-.5zM524 227h.5V273.5h-.5zM524.5 205h.5V251h-.5zM525 203.5h.5V228h-.5zM525.5 168h.5V182.5h-.5zM526 154.5h.5V186h-.5zM526.5 145h.5V169h-.5zM527 140h.5V155.5h-.5zM527.5 139h.5V146h-.5zM528 139h.5V145.5h-.5zM528.5 139.5h.5V154.5h-.5zM529 144.5h.5V168h-.5zM529.5 153.5h.5V184.5h-.5zM530 167h.5V184h-.5zM530.5 205h.5V226h-.5zM531 203.5h.5V249h-.5zM531.5 225h.5V272h-.5zM532 248h.5V293.5h-.5zM532.5 271h.5V292h-.5zM533 313h.5V330h-.5zM533.5 312.5h.5V343.5h-.5zM534 329h.5V352.5h-.5zM534.5 342.5h.5V357.5h-.5zM535 351.5h.5V358h-.5zM535.5 351h.5V358h-.5zM536 341.5h.5V357h-.5zM536.5 328h.5V352h-.5zM537 311h.5V342.5h-.5zM537.5 314.5h.5V329h-.5zM538 269h.5V293.5h-.5zM538.5 246h.5V292h-.5zM539 223.5h.5V270h-.5zM539.5 202h.5V247h-.5zM540 206.5h.5V224.5h-.5zM540.5 165.5h.5V185.5h-.5zM541 152.5h.5V183.5h-.5zM541.5 143.5h.5V166.5h-.5zM542 139.5h.5V153.5h-.5zM542.5 139h.5V144.5h-.5zM543 139h.5V146.5h-.5zM543.5 140h.5V156.5h-.5zM544 145.5h.5V170.5h-.5zM544.5 155.5h.5V187.5h-.5zM545 169.5h.5V181.5h-.5zM545.5 201.5h.5V230h-.5zM546 207h.5V252.5h-.5zM546.5 229h.5V275.5h-.5zM547 251.5h.5V297h-.5zM547.5 274.5h.5V288.5h-.5zM548 310h.5V332.5h-.5zM548.5 315h.5V345.5h-.5zM549 331.5h.5V354h-.5zM549.5 344.5h.5V357.5h-.5zM550 353h.5V358h-.5zM550.5 350h.5V358h-.5zM551 339.5h.5V356.5h-.5zM551.5 325.5h.5V351h-.5zM552 308h.5V340.5h-.5zM552.5 317h.5V326.5h-.5zM553 265.5h.5V297h-.5zM553.5 242.5h.5V288.5h-.5zM554 220h.5V266.5h-.5zM554.5 198.5h.5V243.5h-.5zM555 210h.5V221h-.5zM555.5 163h.5V189h-.5zM556 151h.5V180.5h-.5zM556.5 142.5h.5V164h-.5zM557 139.5h.5V152h-.5zM557.5 139h.5V143.5h-.5zM558 139h.5V147.5h-.5zM558.5 140.5h.5V158.5h-.5zM559 146.5h.5V173h-.5zM559.5 157.5h.5V191h-.5zM560 172h.5V178.5h-.5zM560.5 198.5h.5V233.5h-.5zM561 210.5h.5V256.5h-.5zM561.5 232.5h.5V279h-.5zM562 255.5h.5V300h-.5zM562.5 278h.5V285h-.5zM563 306.5h.5V335h-.5zM563.5 318h.5V347h-.5zM564 334h.5V354.5h-.5zM564.5 346h.5V358h-.5zM565 353.5h.5V358h-.5zM565.5 348.5h.5V358h-.5zM566 337.5h.5V356h-.5zM566.5 323h.5V349.5h-.5zM567 304.5h.5V338.5h-.5zM567.5 320h.5V324h-.5zM568 261.5h.5V300h-.5zM568.5 239h.5V285h-.5zM569 216.5h.5V262.5h-.5zM569.5 195.5h.5V240h-.5zM570 213.5h.5V217.5h-.5zM570.5 161h.5V192h-.5zM571 149h.5V177.5h-.5zM571.5 142h.5V162h-.5zM572 139h.5V150h-.5zM572.5 139h.5V143h-.5zM573 139h.5V149h-.5zM573.5 141.5h.5V160.5h-.5zM574 148h.5V175.5h-.5zM574.5 159.5h.5V194h-.5zM575 174.5h.5V175.5h-.5zM575.5 195h.5V237h-.5zM576 214h.5V260h-.5zM576.5 236h.5V282.5h-.5zM577 259h.5V302.5h-.5zM578 303.5h.5V337h-.5zM578.5 321h.5V348.5h-.5zM579 336h.5V355.5h-.5zM579.5 347.5h.5V358h-.5zM580 354.5h.5V358h-.5zM580.5 347h.5V358h-.5zM581 335.5h.5V355.5h-.5zM581.5 320h.5V348h-.5zM582 304.5h.5V336.5h-.5zM582.5 280.5h.5V282.5h-.5zM583 258h.5V302.5h-.5zM583.5 235h.5V281.5h-.5zM584 213h.5V259h-.5zM584.5 196h.5V236h-.5zM585 174h.5V176.5h-.5zM585.5 159h.5V193h-.5zM586 147.5h.5V175h-.5zM586.5 141h.5V160h-.5zM587 139h.5V148.5h-.5zM587.5 139h.5V143h-.5zM588 139h.5V150.5h-.5zM588.5 142h.5V162.5h-.5zM589 149.5h.5V178.5h-.5zM589.5 161.5h.5V191h-.5zM590 212.5h.5V218.5h-.5zM590.5 196h.5V241h-.5zM591 217.5h.5V263.5h-.5zM591.5 240h.5V286h-.5zM592 262.5h.5V299.5h-.5zM592.5 319.5h.5V324.5h-.5zM593 305.5h.5V339h-.5zM593.5 323.5h.5V350h-.5zM594 338h.5V356h-.5zM594.5 349h.5V358h-.5zM595 353.5h.5V358h-.5zM595.5 345.5h.5V358h-.5zM596 333.5h.5V354.5h-.5zM596.5 317.5h.5V346.5h-.5zM597 307.5h.5V334.5h-.5zM597.5 277h.5V286h-.5zM598 254.5h.5V299.5h-.5zM598.5 231.5h.5V278h-.5zM599 209.5h.5V255.5h-.5zM599.5 199.5h.5V232.5h-.5zM600 171h.5V179h-.5zM600.5 157h.5V190h-.5zM601 146.5h.5V172h-.5zM601.5 140.5h.5V158h-.5zM602 139h.5V147.5h-.5zM602.5 139h.5V144h-.5zM603 139.5h.5V152h-.5zM603.5 143h.5V165h-.5zM604 151h.5V181h-.5zM604.5 164h.5V188h-.5zM605 209.5h.5V222h-.5zM605.5 199.5h.5V244.5h-.5zM606 221h.5V267h-.5zM606.5 243.5h.5V289.5h-.5zM607 266h.5V296h-.5zM607.5 316.5h.5V327h-.5zM608 308.5h.5V341h-.5zM608.5 326h.5V351.5h-.5zM609 340h.5V357h-.5zM609.5 350.5h.5V358h-.5zM610 352.5h.5V358h-.5zM610.5 344h.5V357.5h-.5zM611 331h.5V353.5h-.5zM611.5 314.5h.5V345h-.5zM612 310.5h.5V332h-.5zM612.5 273.5h.5V289.5h-.5zM613 251h.5V296h-.5zM613.5 228h.5V274.5h-.5zM614 206h.5V252h-.5zM614.5 202.5h.5V229h-.5zM615 168.5h.5V182h-.5zM615.5 155h.5V187h-.5zM616 145h.5V169.5h-.5zM616.5 140h.5V156h-.5zM617 139h.5V146h-.5zM617.5 139h.5V145h-.5zM618 139.5h.5V154h-.5zM618.5 144h.5V167h-.5zM619 153h.5V184h-.5zM619.5 166h.5V185h-.5zM620 206h.5V225.5h-.5zM620.5 202.5h.5V248h-.5zM621 224.5h.5V271h-.5zM621.5 247h.5V292.5h-.5zM622 270h.5V293h-.5zM622.5 313.5h.5V329.5h-.5zM623 311.5h.5V343h-.5zM623.5 328.5h.5V352.5h-.5zM624 342h.5V357h-.5zM624.5 351.5h.5V358h-.5zM625 351.5h.5V358h-.5zM625.5 342h.5V357h-.5zM626 328.5h.5V352.5h-.5zM626.5 311.5h.5V343h-.5zM627 313.5h.5V329.5h-.5zM627.5 270h.5V293h-.5zM628 247h.5V292.5h-.5zM628.5 224.5h.5V271h-.5zM629 202.5h.5V248h-.5zM629.5 206h.5V225.5h-.5zM630 166h.5V185h-.5zM630.5 153h.5V184h-.5zM631 144h.5V167h-.5zM631.5 139.5h.5V154h-.5zM632 139h.5V145h-.5zM632.5 139h.5V146h-.5zM633 140h.5V156h-.5zM633.5 145h.5V169.5h-.5zM634 155h.5V187h-.5zM634.5 168.5h.5V182h-.5zM635 202.5h.5V229h-.5zM635.5 206h.5V252h-.5zM636 228h.5V274.5h-.5zM636.5 251h.5V296h-.5zM637 273.5h.5V289.5h-.5zM637.5 310.5h.5V332h-.5zM638 314.5h.5V345h-.5zM638.5 331h.5V353.5h-.5zM639 344h.5V357.5h-.5zM639.5 352.5h.5V358h-.5zM640 350.5h.5V358h-.5zM640.5 340h.5V357h-.5zM641 326h.5V351.5h-.5zM641.5 308.5h.5V341h-.5zM642 316.5h.5V327h-.5zM642.5 266h.5V296h-.5zM643 243.5h.5V289.5h-.5zM643.5 221h.5V267h-.5zM644 199.5h.5V244.5h-.5zM644.5 209.5h.5V222h-.5zM645 164h.5V188h-.5zM645.5 151h.5V181h-.5zM646 143h.5V165h-.5zM646.5 139.5h.5V152h-.5zM647 139h.5V144h-.5zM647.5 139h.5V147.5h-.5zM648 140.5h.5V158h-.5zM648.5 146.5h.5V172h-.5zM649 157h.5V190h-.5zM649.5 171h.5V179h-.5zM650 199.5h.5V232.5h-.5zM650.5 209.5h.5V255.5h-.5zM651 231.5h.5V278h-.5zM651.5 254.5h.5V299.5h-.5zM652 277h.5V286h-.5zM652.5 307.5h.5V334.5h-.5zM653 317.5h.5V346.5h-.5zM653.5 333.5h.5V354.5h-.5zM654 345.5h.5V358h-.5zM654.5 353.5h.5V358h-.5zM655 349h.5V358h-.5zM655.5 338h.5V356h-.5zM656 323.5h.5V350h-.5zM656.5 305.5h.5V339h-.5zM657 319.5h.5V324.5h-.5zM657.5 262.5h.5V299.5h-.5zM658 240h.5V286h-.5zM658.5 217.5h.5V263.5h-.5zM659 196h.5V241h-.5zM659.5 212.5h.5V218.5h-.5zM660 161.5h.5V191h-.5zM660.5 149.5h.5V178.5h-.5zM661 142h.5V162.5h-.5zM661.5 139h.5V150.5h-.5zM662 139h.5V143h-.5zM662.5 139h.5V148.5h-.5zM663 141h.5V160h-.5zM663.5 147.5h.5V175h-.5zM664 159h.5V193h-.5zM664.5 174h.5V176.5h-.5zM665 196h.5V236h-.5zM665.5 213h.5V259h-.5zM666 235h.5V281.5h-.5zM666.5 258h.5V302.5h-.5zM667 280.5h.5V282.5h-.5zM667.5 304.5h.5V336.5h-.5zM668 320h.5V348h-.5zM668.5 335.5h.5V355.5h-.5zM669 347h.5V358h-.5zM669.5 354.5h.5V358h-.5zM670 347.5h.5V358h-.5zM670.5 336h.5V355.5h-.5zM671 321h.5V348.5h-.5zM671.5 303.5h.5V337h-.5zM672.5 259h.5V302.5h-.5zM673 236h.5V282.5h-.5zM673.5 214h.5V260h-.5zM674 195h.5V237h-.5zM674.5 174.5h.5V175.5h-.5zM675 159.5h.5V194h-.5zM675.5 148h.5V175.5h-.5zM676 141.5h.5V160.5h-.5zM676.5 139h.5V149h-.5zM677 139h.5V143h-.5zM677.5 139h.5V150h-.5zM678 142h.5V162h-.5zM678.5 149h.5V177.5h-.5zM679 161h.5V192h-.5zM679.5 213.5h.5V217.5h-.5zM680 195.5h.5V240h-.5zM680.5 216.5h.5V262.5h-.5zM681 239h.5V285h-.5zM681.5 261.5h.5V300h-.5zM682 320h.5V324h-.5zM682.5 304.5h.5V338.5h-.5zM683 323h.5V349.5h-.5zM683.5 337.5h.5V356h-.5zM684 348.5h.5V358h-.5zM684.5 353.5h.5V358h-.5zM685 346h.5V358h-.5zM685.5 334h.5V354.5h-.5zM686 318h.5V347h-.5zM686.5 306.5h.5V335h-.5zM687 278h.5V285h-.5zM687.5 255.5h.5V300h-.5zM688 232.5h.5V279h-.5zM688.5 210.5h.5V256.5h-.5zM689 198.5h.5V233.5h-.5zM689.5 172h.5V178.5h-.5zM690 157.5h.5V191h-.5zM690.5 146.5h.5V173h-.5zM691 140.5h.5V158.5h-.5zM691.5 139h.5V147.5h-.5zM692 139h.5V143.5h-.5zM692.5 139.5h.5V152h-.5zM693 142.5h.5V164h-.5zM693.5 151h.5V180.5h-.5zM694 163h.5V189h-.5zM694.5 210h.5V221h-.5zM695 198.5h.5V243.5h-.5zM695.5 220h.5V266.5h-.5zM696 242.5h.5V288.5h-.5zM696.5 265.5h.5V297h-.5zM697 317h.5V326.5h-.5zM697.5 308h.5V340.5h-.5zM698 325.5h.5V351h-.5zM698.5 339.5h.5V356.5h-.5zM699 350h.5V358h-.5zM699.5 353h.5V358h-.5zM700 344.5h.5V357.5h-.5zM700.5 331.5h.5V354h-.5zM701 315h.5V345.5h-.5zM701.5 310h.5V332.5h-.5zM702 274.5h.5V288.5h-.5zM702.5 251.5h.5V297h-.5zM703 229h.5V275.5h-.5zM703.5 207h.5V252.5h-.5zM704 201.5h.5V230h-.5zM704.5 169.5h.5V181.5h-.5zM705 155.5h.5V187.5h-.5zM705.5 145.5h.5V170.5h-.5zM706 140h.5V156.5h-.5zM706.5 139h.5V146.5h-.5zM707 139h.5V144.5h-.5zM707.5 139.5h.5V153.5h-.5zM708 143.5h.5V166.5h-.5zM708.5 152.5h.5V183.5h-.5zM709 165.5h.5V185.5h-.5zM709.5 206.5h.5V224.5h-.5zM710 202h.5V247h-.5zM710.5 223.5h.5V270h-.5zM711 246h.5V292h-.5zM711.5 269h.5V293.5h-.5zM712 314.5h.5V329h-.5zM712.5 311h.5V342.5h-.5zM713 328h.5V352h-.5zM713.5 341.5h.5V357h-.5zM714 351h.5V358h-.5zM714.5 351.5h.5V358h-.5zM715 342.5h.5V357.5h-.5zM715.5 329h.5V352.5h-.5zM716 312.5h.5V343.5h-.5zM716.5 313h.5V330h-.5zM717 271h.5V292h-.5zM717.5 248h.5V293.5h-.5zM718 225h.5V272h-.5zM718.5 203.5h.5V249h-.5zM719 205h.5V226h-.5zM719.5 167h.5V184h-.5zM720 153.5h.5V184.5h-.5zM720.5 144.5h.5V168h-.5zM721 139.5h.5V154.5h-.5zM721.5 139h.5V145.5h-.5zM722 139h.5V146h-.5zM722.5 140h.5V155.5h-.5zM723 145h.5V169h-.5zM723.5 154.5h.5V186h-.5zM724 168h.5V182.5h-.5zM724.5 203.5h.5V228h-.5zM725 205h.5V251h-.5zM725.5 227h.5V273.5h-.5zM726 250h.5V295h-.5zM726.5 272.5h.5V290.5h-.5zM727 311.5h.5V331.5h-.5zM727.5 313.5h.5V344.5h-.5zM728 330.5h.5V353.5h-.5zM728.5 343.5h.5V357.5h-.5zM729 352.5h.5V358h-.5zM729.5 350.5h.5V358h-.5zM730 340.5h.5V357h-.5zM730.5 326.5h.5V351.5h-.5zM731 309.5h.5V341.5h-.5zM731.5 315.5h.5V327.5h-.5zM732 267h.5V295.5h-.5zM732.5 244.5h.5V290h-.5zM733 221.5h.5V268h-.5zM733.5 200h.5V245.5h-.5zM734 208.5h.5V222.5h-.5zM734.5 164.5h.5V187h-.5zM735 151.5h.5V182h-.5zM735.5 143h.5V165.5h-.5zM736 139.5h.5V152.5h-.5zM736.5 139h.5V144h-.5zM737 139h.5V147h-.5zM737.5 140.5h.5V157.5h-.5zM738 146h.5V171.5h-.5zM738.5 156.5h.5V189h-.5zM739 170.5h.5V180h-.5zM739.5 200h.5V231.5h-.5zM740 208.5h.5V254.5h-.5zM740.5 230.5h.5V277h-.5zM741 253.5h.5V298.5h-.5zM741.5 276h.5V287h-.5zM742 308h.5V334h-.5zM742.5 316.5h.5V346h-.5zM743 333h.5V354.5h-.5zM743.5 345h.5V357.5h-.5zM744 353.5h.5V358h-.5zM744.5 349.5h.5V358h-.5zM745 338.5h.5V356.5h-.5zM745.5 324h.5V350.5h-.5zM746 306h.5V339.5h-.5zM746.5 318.5h.5V325h-.5zM747 263.5h.5V298.5h-.5zM747.5 240.5h.5V286.5h-.5zM748 218h.5V264.5h-.5zM748.5 197h.5V241.5h-.5zM749 212h.5V219h-.5zM749.5 162h.5V190.5h-.5zM750 150h.5V179h-.5zM750.5 142.5h.5V163h-.5zM751 139h.5V151h-.5zM751.5 139h.5V143.5h-.5zM752 139h.5V148.5h-.5zM752.5 141h.5V159.5h-.5zM753 147.5h.5V174h-.5zM753.5 158.5h.5V192.5h-.5zM754 173h.5V177h-.5zM754.5 197h.5V235.5h-.5zM755 212h.5V258h-.5zM755.5 234.5h.5V280.5h-.5zM756 257h.5V301.5h-.5zM756.5 279.5h.5V283.5h-.5zM757 305h.5V336h-.5zM757.5 319.5h.5V348h-.5zM758 335h.5V355h-.5zM758.5 347h.5V358h-.5zM759 354h.5V358h-.5zM759.5 348h.5V358h-.5zM760 336.5h.5V355.5h-.5zM760.5 321.5h.5V349h-.5zM761 303h.5V337.5h-.5zM761.5 321.5h.5V322.5h-.5zM762 260h.5V302h-.5zM762.5 237h.5V283h-.5zM763 214.5h.5V261h-.5zM763.5 194.5h.5V238h-.5zM764.5 160h.5V193.5h-.5zM765 148.5h.5V176h-.5zM765.5 141.5h.5V161h-.5zM766 139h.5V149.5h-.5zM766.5 139h.5V142.5h-.5zM767 139h.5V150h-.5zM767.5 141.5h.5V161.5h-.5zM768 149h.5V177h-.5zM768.5 160.5h.5V192.5h-.5zM769 214.5h.5V216.5h-.5zM769.5 194.5h.5V239h-.5zM770 215.5h.5V262h-.5zM770.5 238h.5V284h-.5zM771 261h.5V301h-.5zM771.5 320.5h.5V323h-.5zM772 304h.5V338h-.5zM772.5 322h.5V349.5h-.5zM773 337h.5V356h-.5zM773.5 348.5h.5V358h-.5zM774 354h.5V358h-.5zM774.5 346.5h.5V358h-.5zM775 334.5h.5V355h-.5zM775.5 318.5h.5V347.5h-.5zM776 306h.5V335.5h-.5zM776.5 278.5h.5V284.5h-.5zM777 256h.5V301h-.5zM777.5 248.5h.5V279.5h-.5z"/>
<path fill="#D95319" d="M31.5 343.5h.5V349.5h-.5zM32 342.5h.5V356h-.5zM32.5 348.5h.5V358h-.5zM33 353.5h.5V358h-.5zM33.5 346h.5V358h-.5zM34 333.5h.5V354.5h-.5zM34.5 318h.5V347h-.5zM35 307h.5V334.5h-.5zM35.5 277.5h.5V285.5h-.5zM36 255h.5V300h-.5zM36.5 232h.5V278.5h-.5zM37 210h.5V256h-.5zM37.5 189.5h.5V233h-.5zM38 171.5h.5V211h-.5zM38.5 157h.5V190.5h-.5zM39 146.5h.5V172.5h-.5zM39.5 140.5h.5V158h-.5zM40 139h.5V147.5h-.5zM40.5 139h.5V144h-.5zM41 139.5h.5V152h-.5zM41.5 143h.5V164.5h-.5zM42 151h.5V180.5h-.5zM42.5 163.5h.5V188.5h-.5zM43 210h.5V221h-.5zM43.5 199h.5V244h-.5zM44 220h.5V266.5h-.5zM44.5 243h.5V288.5h-.5zM45 265.5h.5V309h-.5zM45.5 287.5h.5V326.5h-.5zM46 308h.5V341h-.5zM46.5 325.5h.5V351h-.5zM47 340h.5V356.5h-.5zM47.5 350h.5V358h-.5zM48 352.5h.5V358h-.5zM48.5 344h.5V357.5h-.5zM49 331.5h.5V353.5h-.5zM49.5 315h.5V345h-.5zM50 310h.5V332.5h-.5zM50.5 274h.5V289h-.5zM51 251.5h.5V296.5h-.5zM51.5 228.5h.5V275h-.5zM52 206.5h.5V252.5h-.5zM52.5 186.5h.5V229.5h-.5zM53 169h.5V207.5h-.5zM53.5 155h.5V187.5h-.5zM54 145.5h.5V170h-.5zM54.5 140h.5V156h-.5zM55 139h.5V146.5h-.5zM55.5 139h.5V145h-.5zM56 139.5h.5V153.5h-.5zM56.5 144h.5V167h-.5zM57 152.5h.5V183.5h-.5zM57.5 166h.5V185.5h-.5zM58 206.5h.5V225h-.5zM58.5 202h.5V247.5h-.5zM59 224h.5V270.5h-.5zM59.5 246.5h.5V292h-.5zM60 269.5h.5V312h-.5zM60.5 291h.5V329h-.5zM61 311h.5V343h-.5zM61.5 328h.5V352.5h-.5zM62 342h.5V357h-.5zM62.5 351.5h.5V358h-.5zM63 351.5h.5V358h-.5zM63.5 342.5h.5V357.5h-.5zM64 329h.5V352.5h-.5zM64.5 312h.5V343.5h-.5zM65 313h.5V330h-.5zM65.5 270.5h.5V292h-.5zM66 247.5h.5V293h-.5zM66.5 225h.5V271.5h-.5zM67 203h.5V248.5h-.5zM67.5 183.5h.5V226h-.5zM68 166.5h.5V204h-.5zM68.5 153.5h.5V184.5h-.5zM69 144h.5V167.5h-.5zM69.5 139.5h.5V154.5h-.5zM70 139h.5V145h-.5zM70.5 139h.5V146h-.5zM71 140h.5V155.5h-.5zM71.5 145h.5V169h-.5zM72 154.5h.5V186.5h-.5zM72.5 168h.5V182.5h-.5zM73 203h.5V228.5h-.5zM73.5 205.5h.5V251h-.5zM74 227.5h.5V274h-.5zM74.5 250h.5V295.5h-.5zM75 273h.5V315h-.5zM75.5 294.5h.5V331.5h-.5zM76 314h.5V344.5h-.5zM76.5 330.5h.5V353.5h-.5zM77 343.5h.5V357.5h-.5zM77.5 352.5h.5V358h-.5zM78 350.5h.5V358h-.5zM78.5 340.5h.5V357h-.5zM79 326.5h.5V351.5h-.5zM79.5 309h.5V341.5h-.5zM80 316h.5V327.5h-.5zM80.5 267h.5V295.5h-.5zM81 244h.5V290h-.5zM81.5 221.5h.5V268h-.5zM82 200h.5V245h-.5zM82.5 180.5h.5V222.5h-.5zM83 164h.5V201h-.5zM83.5 151.5h.5V181.5h-.5zM84 143h.5V165h-.5zM84.5 139.5h.5V152.5h-.5zM85 139h.5V144h-.5zM85.5 139h.5V147h-.5zM86 140.5h.5V157.5h-.5zM86.5 146h.5V172h-.5zM87 156.5h.5V189.5h-.5zM87.5 171h.5V179.5h-.5zM88 200h.5V232h-.5zM88.5 209h.5V255h-.5zM89 231h.5V277.5h-.5zM89.5 254h.5V298.5h-.5zM90 276.5h.5V318h-.5zM90.5 297.5h.5V334h-.5zM91 317h.5V346.5h-.5zM91.5 333h.5V354.5h-.5zM92 345.5h.5V357.5h-.5zM92.5 353.5h.5V358h-.5zM93 349h.5V358h-.5zM93.5 338.5h.5V356.5h-.5zM94 324h.5V350h-.5zM94.5 306h.5V339.5h-.5zM95 319h.5V325h-.5zM95.5 263h.5V299h-.5zM96 240.5h.5V286.5h-.5zM96.5 218h.5V264h-.5zM97 196.5h.5V241.5h-.5zM97.5 177.5h.5V219h-.5zM98 162h.5V197.5h-.5zM98.5 150h.5V178.5h-.5zM99 142h.5V163h-.5zM99.5 139h.5V151h-.5zM100 139h.5V143h-.5zM100.5 139h.5V148.5h-.5zM101 141h.5V159.5h-.5zM101.5 147.5h.5V174.5h-.5zM102 158.5h.5V192.5h-.5zM102.5 173.5h.5V177h-.5zM103 196.5h.5V235.5h-.5zM103.5 212.5h.5V258.5h-.5zM104 234.5h.5V281h-.5zM104.5 257.5h.5V302h-.5zM105 280h.5V320.5h-.5zM105.5 301h.5V336h-.5zM106 319.5h.5V348h-.5zM106.5 335h.5V355h-.5zM107 347h.5V358h-.5zM107.5 354h.5V358h-.5zM108 348h.5V358h-.5zM108.5 336.5h.5V355.5h-.5zM109 321.5h.5V349h-.5zM109.5 303h.5V337.5h-.5zM110 321.5h.5V322.5h-.5zM110.5 259.5h.5V302h-.5zM111 236.5h.5V283h-.5zM111.5 214.5h.5V260.5h-.5zM112 193.5h.5V237.5h-.5zM112.5 175h.5V215.5h-.5zM113 159.5h.5V194.5h-.5zM113.5 148.5h.5V176h-.5zM114 141.5h.5V160.5h-.5zM114.5 139h.5V149.5h-.5zM115 139h.5V142.5h-.5zM115.5 139h.5V150h-.5zM116 141.5h.5V161.5h-.5zM116.5 149h.5V177h-.5zM117 160.5h.5V192.5h-.5zM117.5 214h.5V217h-.5zM118 195h.5V239h-.5zM118.5 216h.5V262h-.5zM119 238h.5V284.5h-.5zM119.5 261h.5V305h-.5zM120 283.5h.5V323.5h-.5zM120.5 304h.5V338.5h-.5zM121 322.5h.5V349.5h-.5zM121.5 337.5h.5V356h-.5zM122 348.5h.5V358h-.5zM122.5 354h.5V358h-.5zM123 346h.5V358h-.5zM123.5 334.5h.5V355h-.5zM124 318.5h.5V347h-.5zM124.5 306h.5V335.5h-.5zM125 278.5h.5V284.5h-.5zM125.5 256h.5V300.5h-.5zM126 233h.5V279.5h-.5zM126.5 211h.5V257h-.5zM127 190.5h.5V234h-.5zM127.5 172.5h.5V212h-.5zM128 157.5h.5V191.5h-.5zM128.5 147h.5V173.5h-.5zM129 140.5h.5V158.5h-.5zM129.5 139h.5V148h-.5zM130 139h.5V143.5h-.5zM130.5 139h.5V151.5h-.5zM131 142.5h.5V164h-.5zM131.5 150.5h.5V180h-.5zM132 163h.5V189.5h-.5zM132.5 210.5h.5V220.5h-.5zM133 198h.5V243h-.5zM133.5 219.5h.5V265.5h-.5zM134 242h.5V288h-.5zM134.5 264.5h.5V308h-.5zM135 287h.5V326h-.5zM135.5 307h.5V340.5h-.5zM136 325h.5V350.5h-.5zM136.5 339.5h.5V356.5h-.5zM137 349.5h.5V358h-.5zM137.5 353h.5V358h-.5zM138 344.5h.5V357.5h-.5zM138.5 332h.5V354h-.5zM139 315.5h.5V345.5h-.5zM139.5 309.5h.5V333h-.5zM140 275h.5V288h-.5zM140.5 252.5h.5V297.5h-.5zM141 229.5h.5V276h-.5zM141.5 207.5h.5V253.5h-.5zM142 187h.5V230.5h-.5zM142.5 169.5h.5V208.5h-.5zM143 155.5h.5V188h-.5zM143.5 145.5h.5V170.5h-.5zM144 140h.5V156.5h-.5zM144.5 139h.5V146.5h-.5zM145 139h.5V144.5h-.5zM145.5 139.5h.5V153h-.5zM146 143.5h.5V166h-.5zM146.5 152h.5V183h-.5zM147 165h.5V186h-.5zM147.5 207.5h.5V224h-.5zM148 201.5h.5V246.5h-.5zM148.5 223h.5V269.5h-.5zM149 245.5h.5V291.5h-.5zM149.5 268.5h.5V311.5h-.5zM150 290.5h.5V328.5h-.5zM150.5 310.5h.5V342.5h-.5zM151 327.5h.5V352h-.5zM151.5 341.5h.5V357h-.5zM152 351h.5V358h-.5zM152.5 352h.5V358h-.5zM153 343h.5V357.5h-.5zM153.5 329.5h.5V353h-.5zM154 313h.5V344h-.5zM154.5 312.5h.5V330.5h-.5zM155 271.5h.5V291.5h-.5zM155.5 248.5h.5V294h-.5zM156 226h.5V272.5h-.5zM156.5 204h.5V249.5h-.5zM157 184h.5V227h-.5zM157.5 167h.5V205h-.5zM158 153.5h.5V185h-.5zM158.5 144.5h.5V168h-.5zM159 139.5h.5V154.5h-.5zM159.5 139h.5V145.5h-.5zM160 139h.5V145.5h-.5zM160.5 140h.5V155h-.5zM161 144.5h.5V168.5h-.5zM161.5 154h.5V185.5h-.5zM162 167.5h.5V183h-.5zM162.5 204h.5V227.5h-.5zM163 204.5h.5V250h-.5zM163.5 226.5h.5V273h-.5zM164 249h.5V294.5h-.5zM164.5 272h.5V314.5h-.5zM165 293.5h.5V331h-.5zM165.5 313.5h.5V344h-.5zM166 330h.5V353h-.5zM166.5 343h.5V357.5h-.5zM167 352h.5V358h-.5zM167.5 351h.5V358h-.5zM168 341h.5V357h-.5zM168.5 327h.5V352h-.5zM169 310h.5V342h-.5zM169.5 315h.5V328h-.5zM170 268h.5V294.5h-.5zM170.5 245h.5V290.5h-.5zM171 222.5h.5V269h-.5zM171.5 200.5h.5V246h-.5zM172 181.5h.5V223.5h-.5zM172.5 165h.5V201.5h-.5zM173 152h.5V182.5h-.5zM173.5 143.5h.5V166h-.5zM174 139.5h.5V153h-.5zM174.5 139h.5V144.5h-.5zM175 139h.5V147h-.5zM175.5 140h.5V157h-.5zM176 146h.5V171h-.5zM176.5 156h.5V188.5h-.5zM177 170h.5V180.5h-.5zM177.5 200.5h.5V231h-.5zM178 208h.5V254h-.5zM178.5 230h.5V276.5h-.5zM179 253h.5V298h-.5zM179.5 275.5h.5V317h-.5zM180 297h.5V333.5h-.5zM180.5 316h.5V346h-.5zM181 332.5h.5V354h-.5zM181.5 345h.5V357.5h-.5zM182 353h.5V358h-.5zM182.5 349.5h.5V358h-.5zM183 339h.5V356.5h-.5zM183.5 324.5h.5V350.5h-.5zM184 306.5h.5V340h-.5zM184.5 318h.5V325.5h-.5zM185 264h.5V298h-.5zM185.5 241.5h.5V287.5h-.5zM186 218.5h.5V265h-.5zM186.5 197.5h.5V242.5h-.5zM187 178.5h.5V219.5h-.5zM187.5 162.5h.5V198.5h-.5zM188 150.5h.5V179.5h-.5zM188.5 142.5h.5V163.5h-.5zM189 139h.5V151.5h-.5zM189.5 139h.5V143.5h-.5zM190 139h.5V148h-.5zM190.5 141h.5V159h-.5zM191 147h.5V173.5h-.5zM191.5 158h.5V192h-.5zM192 172.5h.5V177.5h-.5zM192.5 197.5h.5V234.5h-.5zM193 211.5h.5V257.5h-.5zM193.5 233.5h.5V280h-.5zM194 256.5h.5V301h-.5zM194.5 279h.5V320h-.5zM195 300h.5V335.5h-.5zM195.5 319h.5V347.5h-.5zM196 334.5h.5V355h-.5zM196.5 346.5h.5V358h-.5zM197 354h.5V358h-.5zM197.5 348h.5V358h-.5zM198 337h.5V356h-.5zM198.5 322h.5V349h-.5zM199 303.5h.5V338h-.5zM199.5 321h.5V323h-.5zM200 260.5h.5V301h-.5zM200.5 237.5h.5V284h-.5zM201 215h.5V261.5h-.5zM201.5 194h.5V238.5h-.5zM202 175.5h.5V216h-.5zM202.5 160h.5V195h-.5zM203 148.5h.5V176.5h-.5zM203.5 141.5h.5V161h-.5zM204 139h.5V149.5h-.5zM204.5 139h.5V142.5h-.5zM205 139h.5V149.5h-.5zM205.5 141.5h.5V161h-.5zM206 148.5h.5V176.5h-.5zM206.5 160h.5V193h-.5zM207 215h.5V216h-.5zM207.5 194h.5V238.5h-.5zM208 215h.5V261h-.5zM208.5 237.5h.5V283.5h-.5zM209 260h.5V304.5h-.5zM209.5 282.5h.5V322.5h-.5zM210 303.5h.5V338h-.5zM210.5 321.5h.5V349h-.5zM211 337h.5V356h-.5zM211.5 348h.5V358h-.5zM212 354h.5V358h-.5zM212.5 346.5h.5V358h-.5zM213 335h.5V355h-.5zM213.5 319h.5V347.5h-.5zM214 305.5h.5V336h-.5zM214.5 279.5h.5V283.5h-.5zM215 257h.5V301.5h-.5zM215.5 234h.5V280.5h-.5zM216 211.5h.5V258h-.5zM216.5 191h.5V235h-.5zM217 173h.5V212.5h-.5zM217.5 158h.5V192h-.5zM218 147.5h.5V174h-.5zM218.5 141h.5V159h-.5zM219 139h.5V148.5h-.5zM219.5 139h.5V143.5h-.5zM220 139h.5V151h-.5zM220.5 142.5h.5V163.5h-.5zM221 150h.5V179h-.5zM221.5 162.5h.5V190h-.5zM222 211.5h.5V219.5h-.5zM222.5 197h.5V242h-.5zM223 218.5h.5V265h-.5zM223.5 241h.5V287h-.5zM224 264h.5V307.5h-.5zM224.5 286h.5V325.5h-.5zM225 306.5h.5V340h-.5zM225.5 324.5h.5V350.5h-.5zM226 339h.5V356.5h-.5zM226.5 349.5h.5V358h-.5zM227 353h.5V358h-.5zM227.5 345h.5V357.5h-.5zM228 332.5h.5V354h-.5zM228.5 316.5h.5V346h-.5zM229 308.5h.5V333.5h-.5zM229.5 276h.5V287h-.5zM230 253h.5V298h-.5zM230.5 230.5h.5V277h-.5zM231 208.5h.5V254h-.5zM231.5 188h.5V231.5h-.5zM232 170.5h.5V209.5h-.5zM232.5 156h.5V189h-.5zM233 146h.5V171.5h-.5zM233.5 140.5h.5V157h-.5zM234 139h.5V147h-.5zM234.5 139h.5V144.5h-.5zM235 139.5h.5V153h-.5zM235.5 143.5h.5V165.5h-.5zM236 152h.5V182h-.5zM236.5 164.5h.5V187h-.5zM237 208h.5V223h-.5zM237.5 200.5h.5V245.5h-.5zM238 222h.5V268.5h-.5zM238.5 244.5h.5V290.5h-.5zM239 267.5h.5V310.5h-.5zM239.5 289.5h.5V328h-.5zM240 309.5h.5V342h-.5zM240.5 327h.5V351.5h-.5zM241 341h.5V357h-.5zM241.5 350.5h.5V358h-.5zM242 352h.5V358h-.5zM242.5 343.5h.5V357.5h-.5zM243 330h.5V353h-.5zM243.5 313.5h.5V344.5h-.5zM244 311.5h.5V331h-.5zM244.5 272h.5V290.5h-.5zM245 249.5h.5V295h-.5zM245.5 226.5h.5V273h-.5zM246 205h.5V250.5h-.5zM246.5 185h.5V227.5h-.5zM247 168h.5V206h-.5zM247.5 154h.5V186h-.5zM248 144.5h.5V169h-.5zM248.5 140h.5V155h-.5zM249 139h.5V145.5h-.5zM249.5 139h.5V145.5h-.5zM250 139.5h.5V154.5h-.5zM250.5 144.5h.5V168h-.5zM251 153.5h.5V185h-.5zM251.5 167h.5V184h-.5zM252 205h.5V226.5h-.5zM252.5 204h.5V249.5h-.5zM253 225.5h.5V272h-.5zM253.5 248.5h.5V294h-.5zM254 271h.5V313.5h-.5zM254.5 293h.5V330.5h-.5zM255 312.5h.5V343.5h-.5zM255.5 329.5h.5V353h-.5zM256 342.5h.5V357.5h-.5zM256.5 352h.5V358h-.5zM257 351h.5V358h-.5zM257.5 341.5h.5V357h-.5zM258 328h.5V352h-.5zM258.5 310.5h.5V342.5h-.5zM259 314.5h.5V329h-.5zM259.5 268.5h.5V294h-.5zM260 246h.5V291.5h-.5zM260.5 223h.5V269.5h-.5zM261 201.5h.5V247h-.5zM261.5 182h.5V224h-.5zM262 165.5h.5V202.5h-.5zM262.5 152.5h.5V183h-.5zM263 143.5h.5V166.5h-.5zM263.5 139.5h.5V153.5h-.5zM264 139h.5V144.5h-.5zM264.5 139h.5V146.5h-.5zM265 140h.5V156.5h-.5zM265.5 145.5h.5V170.5h-.5zM266 155.5h.5V188h-.5zM266.5 169.5h.5V181h-.5zM267 201.5h.5V230h-.5zM267.5 207h.5V253h-.5zM268 229h.5V275.5h-.5zM268.5 252h.5V297h-.5zM269 274.5h.5V316.5h-.5zM269.5 296h.5V333h-.5zM270 315.5h.5V345.5h-.5zM270.5 332h.5V354h-.5zM271 344.5h.5V357.5h-.5zM271.5 353h.5V358h-.5zM272 350h.5V358h-.5zM272.5 339.5h.5V356.5h-.5zM273 325h.5V351h-.5zM273.5 307.5h.5V340.5h-.5zM274 317.5h.5V326h-.5zM274.5 265h.5V297h-.5zM275 242h.5V288h-.5zM275.5 219.5h.5V266h-.5zM276 198.5h.5V243h-.5zM276.5 179h.5V220.5h-.5zM277 163h.5V199.5h-.5zM277.5 150.5h.5V180h-.5zM278 142.5h.5V164h-.5zM278.5 139.5h.5V151.5h-.5zM279 139h.5V143.5h-.5zM279.5 139h.5V148h-.5zM280 140.5h.5V158.5h-.5zM280.5 147h.5V173h-.5zM281 157.5h.5V191h-.5zM281.5 172h.5V178h-.5zM282 198h.5V234h-.5zM282.5 210.5h.5V256.5h-.5zM283 233h.5V279h-.5zM283.5 255.5h.5V300.5h-.5zM284 278h.5V319.5h-.5zM284.5 299.5h.5V335h-.5zM285 318.5h.5V347h-.5zM285.5 334h.5V355h-.5zM286 346h.5V358h-.5zM286.5 354h.5V358h-.5zM287 348.5h.5V358h-.5zM287.5 337.5h.5V356h-.5zM288 322.5h.5V349.5h-.5zM288.5 304.5h.5V338.5h-.5zM289 320h.5V323.5h-.5zM289.5 261.5h.5V300.5h-.5zM290 238.5h.5V284.5h-.5zM290.5 216h.5V262.5h-.5zM291 195h.5V239.5h-.5zM291.5 176.5h.5V217h-.5zM292 161h.5V196h-.5zM292.5 149h.5V177.5h-.5zM293 142h.5V162h-.5zM293.5 139h.5V150h-.5zM294 139h.5V143h-.5zM294.5 139h.5V149h-.5zM295 141.5h.5V160.5h-.5zM295.5 148h.5V175.5h-.5zM296 159.5h.5V194h-.5zM296.5 174.5h.5V175.5h-.5zM297 195h.5V237.5h-.5zM297.5 214h.5V260.5h-.5zM298 236.5h.5V282.5h-.5zM298.5 259.5h.5V303.5h-.5zM299 281.5h.5V322h-.5zM299.5 302.5h.5V337.5h-.5zM300 321h.5V348.5h-.5zM300.5 336.5h.5V355.5h-.5zM301 347.5h.5V358h-.5zM301.5 354.5h.5V358h-.5zM302 347h.5V358h-.5zM302.5 335.5h.5V355.5h-.5zM303 320h.5V348h-.5zM303.5 304.5h.5V336.5h-.5zM304 280h.5V283h-.5zM304.5 258h.5V302h-.5zM305 235h.5V281h-.5zM305.5 212.5h.5V259h-.5zM306 192h.5V236h-.5zM306.5 173.5h.5V213.5h-.5zM307 158.5h.5V193h-.5zM307.5 147.5h.5V174.5h-.5zM308 141h.5V159.5h-.5zM308.5 139h.5V148.5h-.5zM309 139h.5V143h-.5zM309.5 139h.5V151h-.5zM310 142h.5V162.5h-.5zM310.5 150h.5V178.5h-.5zM311 161.5h.5V191h-.5zM311.5 212.5h.5V218.5h-.5zM312 196.5h.5V241h-.5zM312.5 217.5h.5V264h-.5zM313 240h.5V286h-.5zM313.5 263h.5V306.5h-.5zM314 285h.5V324.5h-.5zM314.5 305.5h.5V339.5h-.5zM315 323.5h.5V350h-.5zM315.5 338.5h.5V356.5h-.5zM316 349h.5V358h-.5zM316.5 353.5h.5V358h-.5zM317 345.5h.5V358h-.5zM317.5 333h.5V354.5h-.5zM318 317h.5V346.5h-.5zM318.5 307.5h.5V334h-.5zM319 276.5h.5V286.5h-.5zM319.5 254h.5V299h-.5zM320 231.5h.5V277.5h-.5zM320.5 209h.5V255h-.5zM321 189h.5V232.5h-.5zM321.5 171h.5V210h-.5zM322 156.5h.5V190h-.5zM322.5 146.5h.5V172h-.5zM323 140.5h.5V157.5h-.5zM323.5 139h.5V147.5h-.5zM324 139h.5V144h-.5zM324.5 139.5h.5V152.5h-.5zM325 143h.5V165h-.5zM325.5 151.5h.5V181.5h-.5zM326 164h.5V187.5h-.5zM326.5 209h.5V222h-.5zM327 199.5h.5V244.5h-.5zM327.5 221h.5V267.5h-.5zM328 243.5h.5V289.5h-.5zM328.5 266.5h.5V310h-.5zM329 288.5h.5V327.5h-.5zM329.5 309h.5V341.5h-.5zM330 326.5h.5V351.5h-.5zM330.5 340.5h.5V357h-.5zM331 350.5h.5V358h-.5zM331.5 352.5h.5V358h-.5zM332 344h.5V357.5h-.5zM332.5 331h.5V353.5h-.5zM333 314h.5V345h-.5zM333.5 311h.5V332h-.5zM334 273h.5V289.5h-.5zM334.5 250.5h.5V295.5h-.5zM335 227.5h.5V274h-.5zM335.5 205.5h.5V251.5h-.5zM336 185.5h.5V228.5h-.5zM336.5 168.5h.5V206.5h-.5zM337 154.5h.5V186.5h-.5zM337.5 145h.5V169.5h-.5zM338 140h.5V155.5h-.5zM338.5 139h.5V146h-.5zM339 139h.5V145h-.5zM339.5 139.5h.5V154h-.5zM340 144h.5V167.5h-.5zM340.5 153h.5V184h-.5zM341 166.5h.5V184.5h-.5zM341.5 205.5h.5V225.5h-.5zM342 203h.5V248.5h-.5zM342.5 224.5h.5V271h-.5zM343 247.5h.5V293h-.5zM343.5 270h.5V313h-.5zM344 292h.5V330h-.5zM344.5 312h.5V343.5h-.5zM345 329h.5V352.5h-.5zM345.5 342.5h.5V357.5h-.5zM346 351.5h.5V358h-.5zM346.5 351.5h.5V358h-.5zM347 342h.5V357h-.5zM347.5 328.5h.5V352.5h-.5zM348 311.5h.5V343h-.5zM348.5 314h.5V329.5h-.5zM349 269.5h.5V293h-.5zM349.5 247h.5V292.5h-.5zM350 224h.5V270.5h-.5zM350.5 202.5h.5V248h-.5zM351 182.5h.5V225h-.5zM351.5 166h.5V203.5h-.5zM352 153h.5V183.5h-.5zM352.5 144h.5V167h-.5zM353 139.5h.5V154h-.5zM353.5 139h.5V145h-.5zM354 139h.5V146h-.5zM354.5 140h.5V156h-.5zM355 145h.5V170h-.5zM355.5 155h.5V187h-.5zM356 169h.5V182h-.5zM356.5 202.5h.5V229h-.5zM357 206.5h.5V252h-.5zM357.5 228h.5V274.5h-.5zM358 251h.5V296.5h-.5zM358.5 273.5h.5V315.5h-.5zM359 295.5h.5V332h-.5zM359.5 314.5h.5V345h-.5zM360 331h.5V353.5h-.5zM360.5 344h.5V357.5h-.5zM361 352.5h.5V358h-.5zM361.5 350h.5V358h-.5zM362 340h.5V357h-.5zM362.5 326h.5V351h-.5zM363 308.5h.5V341h-.5zM363.5 316.5h.5V327h-.5zM364 266h.5V296.5h-.5zM364.5 243h.5V289h-.5zM365 220.5h.5V267h-.5zM365.5 199h.5V244h-.5zM366 180h.5V221.5h-.5zM366.5 163.5h.5V200h-.5zM367 151h.5V181h-.5zM367.5 143h.5V164.5h-.5zM368 139.5h.5V152h-.5zM368.5 139h.5V144h-.5zM369 139h.5V147.5h-.5zM369.5 140.5h.5V158h-.5zM370 146.5h.5V172.5h-.5zM370.5 157h.5V190.5h-.5zM371 171.5h.5V179h-.5zM371.5 199h.5V233h-.5zM372 209.5h.5V255.5h-.5zM372.5 232h.5V278.5h-.5zM373 254.5h.5V299.5h-.5zM373.5 277.5h.5V318.5h-.5zM374 298.5h.5V334.5h-.5zM374.5 317.5h.5V346.5h-.5zM375 333.5h.5V354.5h-.5zM375.5 345.5h.5V358h-.5zM376 353.5h.5V358h-.5zM376.5 349h.5V358h-.5zM377 338h.5V356h-.5zM377.5 323.5h.5V350h-.5zM378 305h.5V339h-.5zM378.5 319.5h.5V324.5h-.5zM379 262.5h.5V299.5h-.5zM379.5 239.5h.5V285.5h-.5zM380 217h.5V263.5h-.5zM380.5 196h.5V240.5h-.5zM381 177h.5V218h-.5zM381.5 161.5h.5V197h-.5zM382 149.5h.5V178h-.5zM382.5 142h.5V162.5h-.5zM383 139h.5V150.5h-.5zM383.5 139h.5V143h-.5zM384 139h.5V149h-.5zM384.5 141h.5V160h-.5zM385 148h.5V175h-.5zM385.5 159h.5V193.5h-.5zM386 174h.5V176h-.5zM386.5 196h.5V236.5h-.5zM387 213h.5V259.5h-.5zM387.5 235.5h.5V282h-.5zM388 258.5h.5V303h-.5zM388.5 281h.5V321.5h-.5zM389 302h.5V337h-.5zM389.5 320.5h.5V348.5h-.5zM390 336h.5V355.5h-.5zM390.5 347.5h.5V358h-.5zM391 354.5h.5V358h-.5zM391.5 347.5h.5V358h-.5zM392 336h.5V355.5h-.5zM392.5 320.5h.5V348.5h-.5zM393 304h.5V337h-.5zM393.5 281h.5V282h-.5zM394 258.5h.5V303h-.5zM394.5 236h.5V282h-.5zM395 213.5h.5V259.5h-.5zM395.5 192.5h.5V237h-.5zM396 174.5h.5V214.5h-.5zM396.5 159h.5V193.5h-.5zM397 148h.5V175.5h-.5zM397.5 141h.5V160h-.5zM398 139h.5V149h-.5zM398.5 139h.5V143h-.5zM399 139h.5V150.5h-.5zM399.5 142h.5V162h-.5zM400 149.5h.5V178h-.5zM400.5 161h.5V191.5h-.5zM401 213.5h.5V217.5h-.5zM401.5 195.5h.5V240h-.5zM402 216.5h.5V263h-.5zM402.5 239h.5V285.5h-.5zM403 262h.5V306h-.5zM403.5 284.5h.5V324h-.5zM404 305h.5V339h-.5zM404.5 323h.5V349.5h-.5zM405 338h.5V356h-.5zM405.5 348.5h.5V358h-.5zM406 353.5h.5V358h-.5zM406.5 346h.5V358h-.5zM407 333.5h.5V354.5h-.5zM407.5 318h.5V347h-.5zM408 307h.5V334.5h-.5zM408.5 277.5h.5V285.5h-.5zM409 255h.5V300h-.5zM409.5 232h.5V278.5h-.5zM410 210h.5V256h-.5zM410.5 189.5h.5V233h-.5zM411 171.5h.5V211h-.5zM411.5 157h.5V190.5h-.5zM412 146.5h.5V172.5h-.5zM412.5 140.5h.5V158h-.5zM413 139h.5V147.5h-.5zM413.5 139h.5V144h-.5zM414 139.5h.5V152h-.5zM414.5 143h.5V164.5h-.5zM415 151h.5V180.5h-.5zM415.5 163.5h.5V188.5h-.5zM416 210h.5V221h-.5zM416.5 199h.5V244h-.5zM417 220h.5V266.5h-.5zM417.5 243h.5V288.5h-.5zM418 265.5h.5V309h-.5zM418.5 287.5h.5V326.5h-.5zM419 308h.5V341h-.5zM419.5 325.5h.5V351h-.5zM420 340h.5V356.5h-.5zM420.5 350h.5V358h-.5zM421 352.5h.5V358h-.5zM421.5 344h.5V357.5h-.5zM422 331.5h.5V353.5h-.5zM422.5 315h.5V345h-.5zM423 310h.5V332.5h-.5zM423.5 274h.5V289h-.5zM424 251.5h.5V296.5h-.5zM424.5 228.5h.5V275h-.5zM425 206.5h.5V252.5h-.5zM425.5 186.5h.5V229.5h-.5zM426 169h.5V207.5h-.5zM426.5 155h.5V187.5h-.5zM427 145.5h.5V170h-.5zM427.5 140h.5V156h-.5zM428 139h.5V146.5h-.5zM428.5 139h.5V145h-.5zM429 139.5h.5V153.5h-.5zM429.5 144h.5V167h-.5zM430 152.5h.5V183.5h-.5zM430.5 166h.5V185.5h-.5zM431 206.5h.5V225h-.5zM431.5 202h.5V247.5h-.5zM432 224h.5V270.5h-.5zM432.5 246.5h.5V292h-.5zM433 269.5h.5V312h-.5zM433.5 291h.5V329h-.5zM434 311h.5V343h-.5zM434.5 328h.5V352.5h-.5zM435 342h.5V357h-.5zM435.5 351.5h.5V358h-.5zM436 351.5h.5V358h-.5zM436.5 342.5h.5V357.5h-.5zM437 329h.5V352.5h-.5zM437.5 312h.5V343.5h-.5zM438 313h.5V330h-.5zM438.5 270.5h.5V292h-.5zM439 247.5h.5V293h-.5zM439.5 225h.5V271.5h-.5zM440 203h.5V248.5h-.5zM440.5 183.5h.5V226h-.5zM441 166.5h.5V204h-.5zM441.5 153.5h.5V184.5h-.5zM442 144h.5V167.5h-.5zM442.5 139.5h.5V154.5h-.5zM443 139h.5V145h-.5zM443.5 139h.5V146h-.5zM444 140h.5V155.5h-.5zM444.5 145h.5V169h-.5zM445 154.5h.5V186.5h-.5zM445.5 168h.5V182.5h-.5zM446 203h.5V228.5h-.5zM446.5 205.5h.5V251h-.5zM447 227.5h.5V274h-.5zM447.5 250h.5V295.5h-.5zM448 273h.5V315h-.5zM448.5 294.5h.5V331.5h-.5zM449 314h.5V344.5h-.5zM449.5 330.5h.5V353.5h-.5zM450 343.5h.5V357.5h-.5zM450.5 352.5h.5V358h-.5zM451 350.5h.5V358h-.5zM451.5 340.5h.5V357h-.5zM452 326.5h.5V351.5h-.5zM452.5 309h.5V341.5h-.5zM453 316h.5V327.5h-.5zM453.5 267h.5V295.5h-.5zM454 244h.5V290h-.5zM454.5 221.5h.5V268h-.5zM455 200h.5V245h-.5zM455.5 180.5h.5V222.5h-.5zM456 164h.5V201h-.5zM456.5 151.5h.5V181.5h-.5zM457 143h.5V165h-.5zM457.5 139.5h.5V152.5h-.5zM458 139h.5V144h-.5zM458.5 139h.5V147h-.5zM459 140.5h.5V157.5h-.5zM459.5 146h.5V172h-.5zM460 156.5h.5V189.5h-.5zM460.5 171h.5V179.5h-.5zM461 200h.5V232h-.5zM461.5 209h.5V255h-.5zM462 231h.5V277.5h-.5zM462.5 254h.5V298.5h-.5zM463 276.5h.5V318h-.5zM463.5 297.5h.5V334h-.5zM464 317h.5V346.5h-.5zM464.5 333h.5V354.5h-.5zM465 345.5h.5V357.5h-.5zM465.5 353.5h.5V358h-.5zM466 349h.5V358h-.5zM466.5 338.5h.5V356.5h-.5zM467 324h.5V350h-.5zM467.5 306h.5V339.5h-.5zM468 319h.5V325h-.5zM468.5 263h.5V299h-.5zM469 240.5h.5V286.5h-.5zM469.5 218h.5V264h-.5zM470 196.5h.5V241.5h-.5zM470.5 177.5h.5V219h-.5zM471 162h.5V197.5h-.5zM471.5 150h.5V178.5h-.5zM472 142h.5V163h-.5zM472.5 139h.5V151h-.5zM473 139h.5V143h-.5zM473.5 139h.5V148.5h-.5zM474 141h.5V159.5h-.5zM474.5 147.5h.5V174.5h-.5zM475 158.5h.5V192.5h-.5zM475.5 173.5h.5V177h-.5zM476 196.5h.5V235.5h-.5zM476.5 212.5h.5V258.5h-.5zM477 234.5h.5V281h-.5zM477.5 257.5h.5V302h-.5zM478 280h.5V320.5h-.5zM478.5 301h.5V336h-.5zM479 319.5h.5V348h-.5zM479.5 335h.5V355h-.5zM480 347h.5V358h-.5zM480.5 354h.5V358h-.5zM481 348h.5V358h-.5zM481.5 336.5h.5V355.5h-.5zM482 321.5h.5V349h-.5zM482.5 303h.5V337.5h-.5zM483 321.5h.5V322.5h-.5zM483.5 259.5h.5V302h-.5zM484 236.5h.5V283h-.5zM484.5 214.5h.5V260.5h-.5zM485 193.5h.5V237.5h-.5zM485.5 175h.5V215.5h-.5zM486 159.5h.5V194.5h-.5zM486.5 148.5h.5V176h-.5zM487 141.5h.5V160.5h-.5zM487.5 139h.5V149.5h-.5zM488 139h.5V142.5h-.5zM488.5 139h.5V150h-.5zM489 141.5h.5V161.5h-.5zM489.5 149h.5V177h-.5zM490 160.5h.5V192.5h-.5zM490.5 214h.5V217h-.5zM491 195h.5V239h-.5zM491.5 216h.5V262h-.5zM492 238h.5V284.5h-.5zM492.5 261h.5V305h-.5zM493 283.5h.5V323.5h-.5zM493.5 304h.5V338.5h-.5zM494 322.5h.5V349.5h-.5zM494.5 337.5h.5V356h-.5zM495 348.5h.5V358h-.5zM495.5 354h.5V358h-.5zM496 346h.5V358h-.5zM496.5 334.5h.5V355h-.5zM497 318.5h.5V347h-.5zM497.5 306h.5V335.5h-.5zM498 278.5h.5V284.5h-.5zM498.5 256h.5V300.5h-.5zM499 233h.5V279.5h-.5zM499.5 211h.5V257h-.5zM500 190.5h.5V234h-.5zM500.5 172.5h.5V212h-.5zM501 157.5h.5V191.5h-.5zM501.5 147h.5V173.5h-.5zM502 140.5h.5V158.5h-.5zM502.5 139h.5V148h-.5zM503 139h.5V143.5h-.5zM503.5 139h.5V151.5h-.5zM504 142.5h.5V164h-.5zM504.5 150.5h.5V180h-.5zM505 163h.5V189.5h-.5zM505.5 210.5h.5V220.5h-.5zM506 198h.5V243h-.5zM506.5 219.5h.5V265.5h-.5zM507 242h.5V288h-.5zM507.5 264.5h.5V308h-.5zM508 287h.5V326h-.5zM508.5 307h.5V340.5h-.5zM509 325h.5V350.5h-.5zM509.5 339.5h.5V356.5h-.5zM510 349.5h.5V358h-.5zM510.5 353h.5V358h-.5zM511 344.5h.5V357.5h-.5zM511.5 332h.5V354h-.5zM512 315.5h.5V345.5h-.5zM512.5 309.5h.5V333h-.5zM513 275h.5V288h-.5zM513.5 252.5h.5V297.5h-.5zM514 229.5h.5V276h-.5zM514.5 207.5h.5V253.5h-.5zM515 187h.5V230.5h-.5zM515.5 169.5h.5V208.5h-.5zM516 155.5h.5V188h-.5zM516.5 145.5h.5V170.5h-.5zM517 140h.5V156.5h-.5zM517.5 139h.5V146.5h-.5zM518 139h.5V144.5h-.5zM518.5 139.5h.5V153h-.5zM519 143.5h.5V166h-.5zM519.5 152h.5V183h-.5zM520 165h.5V186h-.5zM520.5 207.5h.5V224h-.5zM521 201.5h.5V246.5h-.5zM521.5 223h.5V269.5h-.5zM522 245.5h.5V291.5h-.5zM522.5 268.5h.5V311.5h-.5zM523 290.5h.5V328.5h-.5zM523.5 310.5h.5V342.5h-.5zM524 327.5h.5V352h-.5zM524.5 341.5h.5V357h-.5zM525 351h.5V358h-.5zM525.5 352h.5V358h-.5zM526 343h.5V357.5h-.5zM526.5 329.5h.5V353h-.5zM527 313h.5V344h-.5zM527.5 312.5h.5V330.5h-.5zM528 271.5h.5V291.5h-.5zM528.5 248.5h.5V294h-.5zM529 226h.5V272.5h-.5zM529.5 204h.5V249.5h-.5zM530 184h.5V227h-.5zM530.5 167h.5V205h-.5zM531 153.5h.5V185h-.5zM531.5 144.5h.5V168h-.5zM532 139.5h.5V154.5h-.5zM532.5 139h.5V145.5h-.5zM533 139h.5V145.5h-.5zM533.5 140h.5V155h-.5zM534 144.5h.5V168.5h-.5zM534.5 154h.5V185.5h-.5zM535 167.5h.5V183h-.5zM535.5 204h.5V227.5h-.5zM536 204.5h.5V250h-.5zM536.5 226.5h.5V273h-.5zM537 249h.5V294.5h-.5zM537.5 272h.5V314.5h-.5zM538 293.5h.5V331h-.5zM538.5 313.5h.5V344h-.5zM539 330h.5V353h-.5zM539.5 343h.5V357.5h-.5zM540 352h.5V358h-.5zM540.5 351h.5V358h-.5zM541 341h.5V357h-.5zM541.5 327h.5V352h-.5zM542 310h.5V342h-.5zM542.5 315h.5V328h-.5zM543 268h.5V294.5h-.5zM543.5 245h.5V290.5h-.5zM544 222.5h.5V269h-.5zM544.5 200.5h.5V246h-.5zM545 181.5h.5V223.5h-.5zM545.5 165h.5V201.5h-.5zM546 152h.5V182.5h-.5zM546.5 143.5h.5V166h-.5zM547 139.5h.5V153h-.5zM547.5 139h.5V144.5h-.5zM548 139h.5V147h-.5zM548.5 140h.5V157h-.5zM549 146h.5V171h-.5zM549.5 156h.5V188.5h-.5zM550 170h.5V180.5h-.5zM550.5 200.5h.5V231h-.5zM551 208h.5V254h-.5zM551.5 230h.5V276.5h-.5zM552 253h.5V298h-.5zM552.5 275.5h.5V317h-.5zM553 297h.5V333.5h-.5zM553.5 316h.5V346h-.5zM554 332.5h.5V354h-.5zM554.5 345h.5V357.5h-.5zM555 353h.5V358h-.5zM555.5 349.5h.5V358h-.5zM556 339h.5V356.5h-.5zM556.5 324.5h.5V350.5h-.5zM557 306.5h.5V340h-.5zM557.5 318h.5V325.5h-.5zM558 264h.5V298h-.5zM558.5 241.5h.5V287.5h-.5zM559 218.5h.5V265h-.5zM559.5 197.5h.5V242.5h-.5zM560 178.5h.5V219.5h-.5zM560.5 162.5h.5V198.5h-.5zM561 150.5h.5V179.5h-.5zM561.5 142.5h.5V163.5h-.5zM562 139h.5V151.5h-.5zM562.5 139h.5V143.5h-.5zM563 139h.5V148h-.5zM563.5 141h.5V159h-.5zM564 147h.5V173.5h-.5zM564.5 158h.5V192h-.5zM565 172.5h.5V177.5h-.5zM565.5 197.5h.5V234.5h-.5zM566 211.5h.5V257.5h-.5zM566.5 233.5h.5V280h-.5zM567 256.5h.5V301h-.5zM567.5 279h.5V320h-.5zM568 300h.5V335.5h-.5zM568.5 319h.5V347.5h-.5zM569 334.5h.5V355h-.5zM569.5 346.5h.5V358h-.5zM570 354h.5V358h-.5zM570.5 348h.5V358h-.5zM571 337h.5V356h-.5zM571.5 322h.5V349h-.5zM572 303.5h.5V338h-.5zM572.5 321h.5V323h-.5zM573 260.5h.5V301h-.5zM573.5 237.5h.5V284h-.5zM574 215h.5V261.5h-.5zM574.5 194h.5V238.5h-.5zM575 175.5h.5V216h-.5zM575.5 160h.5V195h-.5zM576 148.5h.5V176.5h-.5zM576.5 141.5h.5V161h-.5zM577 139h.5V149.5h-.5zM577.5 139h.5V142.5h-.5zM578 139h.5V149.5h-.5zM578.5 141.5h.5V161h-.5zM579 148.5h.5V176.5h-.5zM579.5 160h.5V193h-.5zM580 215h.5V216h-.5zM580.5 194h.5V238.5h-.5zM581 215h.5V261h-.5zM581.5 237.5h.5V283.5h-.5zM582 260h.5V304.5h-.5zM582.5 282.5h.5V322.5h-.5zM583 303.5h.5V338h-.5zM583.5 321.5h.5V349h-.5zM584 337h.5V356h-.5zM584.5 348h.5V358h-.5zM585 354h.5V358h-.5zM585.5 346.5h.5V358h-.5zM586 335h.5V355h-.5zM586.5 319h.5V347.5h-.5zM587 305.5h.5V336h-.5zM587.5 279.5h.5V283.5h-.5zM588 257h.5V301.5h-.5zM588.5 234h.5V280.5h-.5zM589 211.5h.5V258h-.5zM589.5 191h.5V235h-.5zM590 173h.5V212.5h-.5zM590.5 158h.5V192h-.5zM591 147.5h.5V174h-.5zM591.5 141h.5V159h-.5zM592 139h.5V148.5h-.5zM592.5 139h.5V143.5h-.5zM593 139h.5V151h-.5zM593.5 142.5h.5V163.5h-.5zM594 150h.5V179h-.5zM594.5 162.5h.5V190h-.5zM595 211.5h.5V219.5h-.5zM595.5 197h.5V242h-.5zM596 218.5h.5V265h-.5zM596.5 241h.5V287h-.5zM597 264h.5V307.5h-.5zM597.5 286h.5V325.5h-.5zM598 306.5h.5V340h-.5zM598.5 324.5h.5V350.5h-.5zM599 339h.5V356.5h-.5zM599.5 349.5h.5V358h-.5zM600 353h.5V358h-.5zM600.5 345h.5V357.5h-.5zM601 332.5h.5V354h-.5zM601.5 316.5h.5V346h-.5zM602 308.5h.5V333.5h-.5zM602.5 276h.5V287h-.5zM603 253h.5V298h-.5zM603.5 230.5h.5V277h-.5zM604 208.5h.5V254h-.5zM604.5 188h.5V231.5h-.5zM605 170.5h.5V209.5h-.5zM605.5 156h.5V189h-.5zM606 146h.5V171.5h-.5zM606.5 140.5h.5V157h-.5zM607 139h.5V147h-.5zM607.5 139h.5V144.5h-.5zM608 139.5h.5V153h-.5zM608.5 143.5h.5V165.5h-.5zM609 152h.5V182h-.5zM609.5 164.5h.5V187h-.5zM610 208h.5V223h-.5zM610.5 200.5h.5V245.5h-.5zM611 222h.5V268.5h-.5zM611.5 244.5h.5V290.5h-.5zM612 267.5h.5V310.5h-.5zM612.5 289.5h.5V328h-.5zM613 309.5h.5V342h-.5zM613.5 327h.5V351.5h-.5zM614 341h.5V357h-.5zM614.5 350.5h.5V358h-.5zM615 352h.5V358h-.5zM615.5 343.5h.5V357.5h-.5zM616 330h.5V353h-.5zM616.5 313.5h.5V344.5h-.5zM617 311.5h.5V331h-.5zM617.5 272h.5V290.5h-.5zM618 249.5h.5V295h-.5zM618.5 226.5h.5V273h-.5zM619 205h.5V250.5h-.5zM619.5 185h.5V227.5h-.5zM620 168h.5V206h-.5zM620.5 154h.5V186h-.5zM621 144.5h.5V169h-.5zM621.5 140h.5V155h-.5zM622 139h.5V145.5h-.5zM622.5 139h.5V145.5h-.5zM623 139.5h.5V154.5h-.5zM623.5 144.5h.5V168h-.5zM624 153.5h.5V185h-.5zM624.5 167h.5V184h-.5zM625 205h.5V226.5h-.5zM625.5 204h.5V249.5h-.5zM626 225.5h.5V272h-.5zM626.5 248.5h.5V294h-.5zM627 271h.5V313.5h-.5zM627.5 293h.5V330.5h-.5zM628 312.5h.5V343.5h-.5zM628.5 329.5h.5V353h-.5zM629 342.5h.5V357.5h-.5zM629.5 352h.5V358h-.5zM630 351h.5V358h-.5zM630.5 341.5h.5V357h-.5zM631 328h.5V352h-.5zM631.5 310.5h.5V342.5h-.5zM632 314.5h.5V329h-.5zM632.5 268.5h.5V294h-.5zM633 246h.5V291.5h-.5zM633.5 223h.5V269.5h-.5zM634 201.5h.5V247h-.5zM634.5 182h.5V224h-.5zM635 165.5h.5V202.5h-.5zM635.5 152.5h.5V183h-.5zM636 143.5h.5V166.5h-.5zM636.5 139.5h.5V153.5h-.5zM637 139h.5V144.5h-.5zM637.5 139h.5V146.5h-.5zM638 140h.5V156.5h-.5zM638.5 145.5h.5V170.5h-.5zM639 155.5h.5V188h-.5zM639.5 169.5h.5V181h-.5zM640 201.5h.5V230h-.5zM640.5 207h.5V253h-.5zM641 229h.5V275.5h-.5zM641.5 252h.5V297h-.5zM642 274.5h.5V316.5h-.5zM642.5 296h.5V333h-.5zM643 315.5h.5V345.5h-.5zM643.5 332h.5V354h-.5zM644 344.5h.5V357.5h-.5zM644.5 353h.5V358h-.5zM645 350h.5V358h-.5zM645.5 339.5h.5V356.5h-.5zM646 325h.5V351h-.5zM646.5 307.5h.5V340.5h-.5zM647 317.5h.5V326h-.5zM647.5 265h.5V297h-.5zM648 242h.5V288h-.5zM648.5 219.5h.5V266h-.5zM649 198.5h.5V243h-.5zM649.5 179h.5V220.5h-.5zM650 163h.5V199.5h-.5zM650.5 150.5h.5V180h-.5zM651 142.5h.5V164h-.5zM651.5 139.5h.5V151.5h-.5zM652 139h.5V143.5h-.5zM652.5 139h.5V148h-.5zM653 140.5h.5V158.5h-.5zM653.5 147h.5V173h-.5zM654 157.5h.5V191h-.5zM654.5 172h.5V178h-.5zM655 198h.5V234h-.5zM655.5 210.5h.5V256.5h-.5zM656 233h.5V279h-.5zM656.5 255.5h.5V300.5h-.5zM657 278h.5V319.5h-.5zM657.5 299.5h.5V335h-.5zM658 318.5h.5V347h-.5zM658.5 334h.5V355h-.5zM659 346h.5V358h-.5zM659.5 354h.5V358h-.5zM660 348.5h.5V358h-.5zM660.5 337.5h.5V356h-.5zM661 322.5h.5V349.5h-.5zM661.5 304.5h.5V338.5h-.5zM662 320h.5V323.5h-.5zM662.5 261.5h.5V300.5h-.5zM663 238.5h.5V284.5h-.5zM663.5 216h.5V262.5h-.5zM664 195h.5V239.5h-.5zM664.5 176.5h.5V217h-.5zM665 161h.5V196h-.5zM665.5 149h.5V177.5h-.5zM666 142h.5V162h-.5zM666.5 139h.5V150h-.5zM667 139h.5V143h-.5zM667.5 139h.5V149h-.5zM668 141.5h.5V160.5h-.5zM668.5 148h.5V175.5h-.5zM669 159.5h.5V194h-.5zM669.5 174.5h.5V175.5h-.5zM670 195h.5V237.5h-.5zM670.5 214h.5V260.5h-.5zM671 236.5h.5V282.5h-.5zM671.5 259.5h.5V303.5h-.5zM672 281.5h.5V322h-.5zM672.5 302.5h.5V337.5h-.5zM673 321h.5V348.5h-.5zM673.5 336.5h.5V355.5h-.5zM674 347.5h.5V358h-.5zM674.5 354.5h.5V358h-.5zM675 347h.5V358h-.5zM675.5 335.5h.5V355.5h-.5zM676 320h.5V348h-.5zM676.5 304.5h.5V336.5h-.5zM677 280h.5V283h-.5zM677.5 258h.5V302h-.5zM678 235h.5V281h-.5zM678.5 212.5h.5V259h-.5zM679 192h.5V236h-.5zM679.5 173.5h.5V213.5h-.5zM680 158.5h.5V193h-.5zM680.5 147.5h.5V174.5h-.5zM681 141h.5V159.5h-.5zM681.5 139h.5V148.5h-.5zM682 139h.5V143h-.5zM682.5 139h.5V151h-.5zM683 142h.5V162.5h-.5zM683.5 150h.5V178.5h-.5zM684 161.5h.5V191h-.5zM684.5 212.5h.5V218.5h-.5zM685 196.5h.5V241h-.5zM685.5 217.5h.5V264h-.5zM686 240h.5V286h-.5zM686.5 263h.5V306.5h-.5zM687 285h.5V324.5h-.5zM687.5 305.5h.5V339.5h-.5zM688 323.5h.5V350h-.5zM688.5 338.5h.5V356.5h-.5zM689 349h.5V358h-.5zM689.5 353.5h.5V358h-.5zM690 345.5h.5V358h-.5zM690.5 333h.5V354.5h-.5zM691 317h.5V346.5h-.5zM691.5 307.5h.5V334h-.5zM692 276.5h.5V286.5h-.5zM692.5 254h.5V299h-.5zM693 231.5h.5V277.5h-.5zM693.5 209h.5V255h-.5zM694 189h.5V232.5h-.5zM694.5 171h.5V210h-.5zM695 156.5h.5V190h-.5zM695.5 146.5h.5V172h-.5zM696 140.5h.5V157.5h-.5zM696.5 139h.5V147.5h-.5zM697 139h.5V144h-.5zM697.5 139.5h.5V152.5h-.5zM698 143h.5V165h-.5zM698.5 151.5h.5V181.5h-.5zM699 164h.5V187.5h-.5zM699.5 209h.5V222h-.5zM700 199.5h.5V244.5h-.5zM700.5 221h.5V267.5h-.5zM701 243.5h.5V289.5h-.5zM701.5 266.5h.5V310h-.5zM702 288.5h.5V327.5h-.5zM702.5 309h.5V341.5h-.5zM703 326.5h.5V351.5h-.5zM703.5 340.5h.5V357h-.5zM704 350.5h.5V358h-.5zM704.5 352.5h.5V358h-.5zM705 344h.5V357.5h-.5zM705.5 331h.5V353.5h-.5zM706 314h.5V345h-.5zM706.5 311h.5V332h-.5zM707 273h.5V289.5h-.5zM707.5 250.5h.5V295.5h-.5zM708 227.5h.5V274h-.5zM708.5 205.5h.5V251.5h-.5zM709 185.5h.5V228.5h-.5zM709.5 168.5h.5V206.5h-.5zM710 154.5h.5V186.5h-.5zM710.5 145h.5V169.5h-.5zM711 140h.5V155.5h-.5zM711.5 139h.5V146h-.5zM712 139h.5V145h-.5zM712.5 139.5h.5V154h-.5zM713 144h.5V167.5h-.5zM713.5 153h.5V184h-.5zM714 166.5h.5V184.5h-.5zM714.5 205.5h.5V225.5h-.5zM715 203h.5V248.5h-.5zM715.5 224.5h.5V271h-.5zM716 247.5h.5V293h-.5zM716.5 270h.5V313h-.5zM717 292h.5V330h-.5zM717.5 312h.5V343.5h-.5zM718 329h.5V352.5h-.5zM718.5 342.5h.5V357.5h-.5zM719 351.5h.5V358h-.5zM719.5 351.5h.5V358h-.5zM720 342h.5V357h-.5zM720.5 328.5h.5V352.5h-.5zM721 311.5h.5V343h-.5zM721.5 314h.5V329.5h-.5zM722 269.5h.5V293h-.5zM722.5 247h.5V292.5h-.5zM723 224h.5V270.5h-.5zM723.5 202.5h.5V248h-.5zM724 182.5h.5V225h-.5zM724.5 166h.5V203.5h-.5zM725 153h.5V183.5h-.5zM725.5 144h.5V167h-.5zM726 139.5h.5V154h-.5zM726.5 139h.5V145h-.5zM727 139h.5V146h-.5zM727.5 140h.5V156h-.5zM728 145h.5V170h-.5zM728.5 155h.5V187h-.5zM729 169h.5V182h-.5zM729.5 202.5h.5V229h-.5zM730 206.5h.5V252h-.5zM730.5 228h.5V274.5h-.5zM731 251h.5V296.5h-.5zM731.5 273.5h.5V315.5h-.5zM732 295.5h.5V332h-.5zM732.5 314.5h.5V345h-.5zM733 331h.5V353.5h-.5zM733.5 344h.5V357.5h-.5zM734 352.5h.5V358h-.5zM734.5 350h.5V358h-.5zM735 340h.5V357h-.5zM735.5 326h.5V351h-.5zM736 308.5h.5V341h-.5zM736.5 316.5h.5V327h-.5zM737 266h.5V296.5h-.5zM737.5 243h.5V289h-.5zM738 220.5h.5V267h-.5zM738.5 199h.5V244h-.5zM739 180h.5V221.5h-.5zM739.5 163.5h.5V200h-.5zM740 151h.5V181h-.5zM740.5 143h.5V164.5h-.5zM741 139.5h.5V152h-.5zM741.5 139h.5V144h-.5zM742 139h.5V147.5h-.5zM742.5 140.5h.5V158h-.5zM743 146.5h.5V172.5h-.5zM743.5 157h.5V190.5h-.5zM744 171.5h.5V179h-.5zM744.5 199h.5V233h-.5zM745 209.5h.5V255.5h-.5zM745.5 232h.5V278.5h-.5zM746 254.5h.5V299.5h-.5zM746.5 277.5h.5V318.5h-.5zM747 298.5h.5V334.5h-.5zM747.5 317.5h.5V346.5h-.5zM748 333.5h.5V354.5h-.5zM748.5 345.5h.5V358h-.5zM749 353.5h.5V358h-.5zM749.5 349h.5V358h-.5zM750 338h.5V356h-.5zM750.5 323.5h.5V350h-.5zM751 305h.5V339h-.5zM751.5 319.5h.5V324.5h-.5zM752 262.5h.5V299.5h-.5zM752.5 239.5h.5V285.5h-.5zM753 217h.5V263.5h-.5zM753.5 196h.5V240.5h-.5zM754 177h.5V218h-.5zM754.5 161.5h.5V197h-.5zM755 149.5h.5V178h-.5zM755.5 142h.5V162.5h-.5zM756 139h.5V150.5h-.5zM756.5 139h.5V143h-.5zM757 139h.5V149h-.5zM757.5 141h.5V160h-.5zM758 148h.5V175h-.5zM758.5 159h.5V193.5h-.5zM759 174h.5V176h-.5zM759.5 196h.5V236.5h-.5zM760 213h.5V259.5h-.5zM760.5 235.5h.5V282h-.5zM761 258.5h.5V303h-.5zM761.5 281h.5V321.5h-.5zM762 302h.5V337h-.5zM762.5 320.5h.5V348.5h-.5zM763 336h.5V355.5h-.5zM763.5 347.5h.5V358h-.5zM764 354.5h.5V358h-.5zM764.5 347.5h.5V358h-.5zM765 336h.5V355.5h-.5zM765.5 320.5h.5V348.5h-.5zM766 304h.5V337h-.5zM766.5 281h.5V282h-.5zM767 258.5h.5V303h-.5zM767.5 236h.5V282h-.5zM768 213.5h.5V259.5h-.5zM768.5 192.5h.5V237h-.5zM769 174.5h.5V214.5h-.5zM769.5 159h.5V193.5h-.5zM770 148h.5V175.5h-.5zM770.5 141h.5V160h-.5zM771 139h.5V149h-.5zM771.5 139h.5V143h-.5zM772 139h.5V150.5h-.5zM772.5 142h.5V162h-.5zM773 149.5h.5V178h-.5zM773.5 161h.5V191.5h-.5zM774 213.5h.5V217.5h-.5zM774.5 195.5h.5V240h-.5zM775 216.5h.5V263h-.5zM775.5 239h.5V285.5h-.5zM776 262h.5V306h-.5zM776.5 284.5h.5V324h-.5zM777 305h.5V339h-.5zM777.5 323h.5V343h-.5z"/>
<path fill="#EDB120" d="M31.5 155h.5V163h-.5zM32 154h.5V178.5h-.5zM32.5 162h.5V197.5h-.5zM33 177.5h.5V219h-.5zM33.5 196.5h.5V241.5h-.5zM34 218h.5V264h-.5zM34.5 240.5h.5V286.5h-.5zM35 263h.5V307h-.5zM35.5 285.5h.5V325h-.5zM36 306h.5V339.5h-.5zM36.5 324h.5V350h-.5zM37 338.5h.5V356.5h-.5zM37.5 349h.5V358h-.5zM38 353.5h.5V358h-.5zM38.5 345.5h.5V357.5h-.5zM39 333h.5V354.5h-.5zM39.5 317h.5V346.5h-.5zM40 297.5h.5V334h-.5zM40.5 276.5h.5V318h-.5zM41 254h.5V298.5h-.5zM41.5 231h.5V277.5h-.5zM42 209h.5V255h-.5zM42.5 188.5h.5V232h-.5zM43 171h.5V210h-.5zM43.5 156.5h.5V189.5h-.5zM44 146h.5V172h-.5zM44.5 140.5h.5V157.5h-.5zM45 139h.5V147h-.5zM45.5 139h.5V144h-.5zM46 139.5h.5V152.5h-.5zM46.5 143h.5V165h-.5zM47 151.5h.5V181.5h-.5zM47.5 164h.5V201h-.5zM48 180.5h.5V222.5h-.5zM48.5 200h.5V245h-.5zM49 221.5h.5V268h-.5zM49.5 244h.5V290h-.5zM50 267h.5V310h-.5zM50.5 289h.5V327.5h-.5zM51 309h.5V341.5h-.5zM51.5 326.5h.5V351.5h-.5zM52 340.5h.5V357h-.5zM52.5 350.5h.5V358h-.5zM53 352.5h.5V358h-.5zM53.5 343.5h.5V357.5h-.5zM54 330.5h.5V353.5h-.5zM54.5 314h.5V344.5h-.5zM55 294.5h.5V331.5h-.5zM55.5 273h.5V315h-.5zM56 250h.5V295.5h-.5zM56.5 227.5h.5V274h-.5zM57 205.5h.5V251h-.5zM57.5 185.5h.5V228.5h-.5zM58 168h.5V206.5h-.5zM58.5 154.5h.5V186.5h-.5zM59 145h.5V169h-.5zM59.5 140h.5V155.5h-.5zM60 139h.5V146h-.5zM60.5 139h.5V145h-.5zM61 139.5h.5V154.5h-.5zM61.5 144h.5V167.5h-.5zM62 153.5h.5V184.5h-.5zM62.5 166.5h.5V204h-.5zM63 183.5h.5V226h-.5zM63.5 203h.5V248.5h-.5zM64 225h.5V271.5h-.5zM64.5 247.5h.5V293h-.5zM65 270.5h.5V313h-.5zM65.5 292h.5V330h-.5zM66 312h.5V343.5h-.5zM66.5 329h.5V352.5h-.5zM67 342.5h.5V357.5h-.5zM67.5 351.5h.5V358h-.5zM68 351.5h.5V358h-.5zM68.5 342h.5V357h-.5zM69 328h.5V352.5h-.5zM69.5 311h.5V343h-.5zM70 291h.5V329h-.5zM70.5 269.5h.5V312h-.5zM71 246.5h.5V292h-.5zM71.5 224h.5V270.5h-.5zM72 202h.5V247.5h-.5zM72.5 182.5h.5V225h-.5zM73 166h.5V203h-.5zM73.5 152.5h.5V183.5h-.5zM74 144h.5V167h-.5zM74.5 139.5h.5V153.5h-.5zM75 139h.5V145h-.5zM75.5 139h.5V146.5h-.5zM76 140h.5V156h-.5zM76.5 145.5h.5V170h-.5zM77 155h.5V187.5h-.5zM77.5 169h.5V207.5h-.5zM78 186.5h.5V229.5h-.5zM78.5 206.5h.5V252.5h-.5zM79 228.5h.5V275h-.5zM79.5 251.5h.5V296.5h-.5zM80 274h.5V316h-.5zM80.5 295.5h.5V332.5h-.5zM81 315h.5V345h-.5zM81.5 331.5h.5V353.5h-.5zM82 344h.5V357.5h-.5zM82.5 352.5h.5V358h-.5zM83 350h.5V358h-.5zM83.5 340h.5V356.5h-.5zM84 325.5h.5V351h-.5zM84.5 308h.5V341h-.5zM85 287.5h.5V326.5h-.5zM85.5 265.5h.5V309h-.5zM86 243h.5V288.5h-.5zM86.5 220h.5V266.5h-.5zM87 199h.5V244h-.5zM87.5 179.5h.5V221h-.5zM88 163.5h.5V200h-.5zM88.5 151h.5V180.5h-.5zM89 143h.5V164.5h-.5zM89.5 139.5h.5V152h-.5zM90 139h.5V144h-.5zM90.5 139h.5V147.5h-.5zM91 140.5h.5V158h-.5zM91.5 146.5h.5V172.5h-.5zM92 157h.5V190.5h-.5zM92.5 171.5h.5V211h-.5zM93 189.5h.5V233h-.5zM93.5 210h.5V256h-.5zM94 232h.5V278.5h-.5zM94.5 255h.5V300h-.5zM95 277.5h.5V319h-.5zM95.5 299h.5V334.5h-.5zM96 318h.5V347h-.5zM96.5 333.5h.5V354.5h-.5zM97 346h.5V358h-.5zM97.5 353.5h.5V358h-.5zM98 348.5h.5V358h-.5zM98.5 338h.5V356h-.5zM99 323h.5V349.5h-.5zM99.5 305h.5V339h-.5zM100 284.5h.5V324h-.5zM100.5 262h.5V306h-.5zM101 239h.5V285.5h-.5zM101.5 216.5h.5V263h-.5zM102 195.5h.5V240h-.5zM102.5 177h.5V217.5h-.5zM103 161h.5V196.5h-.5zM103.5 149.5h.5V178h-.5zM104 142h.5V162h-.5zM104.5 139h.5V150.5h-.5zM105 139h.5V143h-.5zM105.5 139h.5V149h-.5zM106 141h.5V160h-.5zM106.5 148h.5V175.5h-.5zM107 159h.5V193.5h-.5zM107.5 174.5h.5V214.5h-.5zM108 192.5h.5V237h-.5zM108.5 213.5h.5V259.5h-.5zM109 236h.5V282h-.5zM109.5 258.5h.5V303h-.5zM110 281h.5V321.5h-.5zM110.5 302h.5V337h-.5zM111 320.5h.5V348.5h-.5zM111.5 336h.5V355.5h-.5zM112 347.5h.5V358h-.5zM112.5 354.5h.5V358h-.5zM113 347.5h.5V358h-.5zM113.5 336h.5V355.5h-.5zM114 320.5h.5V348.5h-.5zM114.5 302h.5V337h-.5zM115 281h.5V321.5h-.5zM115.5 258.5h.5V303h-.5zM116 235.5h.5V282h-.5zM116.5 213h.5V259.5h-.5zM117 192.5h.5V236.5h-.5zM117.5 174h.5V214h-.5zM118 159h.5V193.5h-.5zM118.5 148h.5V175h-.5zM119 141h.5V160h-.5zM119.5 139h.5V149h-.5zM120 139h.5V143h-.5zM120.5 139h.5V150.5h-.5zM121 142h.5V162.5h-.5zM121.5 149.5h.5V178h-.5zM122 161.5h.5V197h-.5zM122.5 177h.5V218h-.5zM123 196h.5V240.5h-.5zM123.5 217h.5V263.5h-.5zM124 239.5h.5V285.5h-.5zM124.5 262.5h.5V306h-.5zM125 284.5h.5V324.5h-.5zM125.5 305h.5V339h-.5zM126 323.5h.5V350h-.5zM126.5 338h.5V356h-.5zM127 349h.5V358h-.5zM127.5 353.5h.5V358h-.5zM128 345.5h.5V358h-.5zM128.5 333.5h.5V354.5h-.5zM129 317.5h.5V346.5h-.5zM129.5 298.5h.5V334.5h-.5zM130 277.5h.5V318.5h-.5zM130.5 254.5h.5V299.5h-.5zM131 232h.5V278.5h-.5zM131.5 209.5h.5V255.5h-.5zM132 189.5h.5V233h-.5zM132.5 171.5h.5V210.5h-.5zM133 157h.5V190.5h-.5zM133.5 146.5h.5V172.5h-.5zM134 140.5h.5V158h-.5zM134.5 139h.5V147.5h-.5zM135 139h.5V144h-.5zM135.5 139.5h.5V152h-.5zM136 143h.5V164.5h-.5zM136.5 151h.5V181h-.5zM137 163.5h.5V200h-.5zM137.5 180h.5V221.5h-.5zM138 199h.5V244h-.5zM138.5 220.5h.5V267h-.5zM139 243h.5V289h-.5zM139.5 266h.5V309.5h-.5zM140 288h.5V327h-.5zM140.5 308.5h.5V341h-.5zM141 326h.5V351h-.5zM141.5 340h.5V357h-.5zM142 350h.5V358h-.5zM142.5 352.5h.5V358h-.5zM143 344h.5V357.5h-.5zM143.5 331h.5V353.5h-.5zM144 314.5h.5V345h-.5zM144.5 295.5h.5V332h-.5zM145 273.5h.5V315.5h-.5zM145.5 251h.5V296.5h-.5zM146 228h.5V274.5h-.5zM146.5 206.5h.5V252h-.5zM147 186h.5V229h-.5zM147.5 169h.5V207.5h-.5zM148 155h.5V187h-.5zM148.5 145h.5V170h-.5zM149 140h.5V156h-.5zM149.5 139h.5V146h-.5zM150 139h.5V145h-.5zM150.5 139.5h.5V154h-.5zM151 144h.5V167h-.5zM151.5 153h.5V183.5h-.5zM152 166h.5V203.5h-.5zM152.5 182.5h.5V225h-.5zM153 202.5h.5V248h-.5zM153.5 224h.5V270.5h-.5zM154 247h.5V292.5h-.5zM154.5 269.5h.5V312.5h-.5zM155 291.5h.5V329.5h-.5zM155.5 311.5h.5V343h-.5zM156 328.5h.5V352.5h-.5zM156.5 342h.5V357h-.5zM157 351.5h.5V358h-.5zM157.5 351.5h.5V358h-.5zM158 342.5h.5V357.5h-.5zM158.5 329h.5V352.5h-.5zM159 312h.5V343.5h-.5zM159.5 292h.5V330h-.5zM160 270h.5V313h-.5zM160.5 247.5h.5V293h-.5zM161 224.5h.5V271h-.5zM161.5 203h.5V248.5h-.5zM162 183h.5V225.5h-.5zM162.5 166.5h.5V204h-.5zM163 153h.5V184h-.5zM163.5 144h.5V167.5h-.5zM164 139.5h.5V154h-.5zM164.5 139h.5V145h-.5zM165 139h.5V146h-.5zM165.5 140h.5V155.5h-.5zM166 145h.5V169.5h-.5zM166.5 154.5h.5V186.5h-.5zM167 168.5h.5V206.5h-.5zM167.5 185.5h.5V228.5h-.5zM168 205.5h.5V251.5h-.5zM168.5 227.5h.5V274h-.5zM169 250.5h.5V295.5h-.5zM169.5 273h.5V315h-.5zM170 294.5h.5V332h-.5zM170.5 314h.5V345h-.5zM171 331h.5V353.5h-.5zM171.5 344h.5V357.5h-.5zM172 352.5h.5V358h-.5zM172.5 350.5h.5V358h-.5zM173 340.5h.5V357h-.5zM173.5 326.5h.5V351.5h-.5zM174 309h.5V341.5h-.5zM174.5 288.5h.5V327.5h-.5zM175 266.5h.5V310h-.5zM175.5 243.5h.5V289.5h-.5zM176 221h.5V267.5h-.5zM176.5 199.5h.5V244.5h-.5zM177 180.5h.5V222h-.5zM177.5 164h.5V200.5h-.5zM178 151.5h.5V181.5h-.5zM178.5 143h.5V165h-.5zM179 139.5h.5V152.5h-.5zM179.5 139h.5V144h-.5zM180 139h.5V147.5h-.5zM180.5 140.5h.5V157.5h-.5zM181 146.5h.5V172h-.5zM181.5 156.5h.5V190h-.5zM182 171h.5V210h-.5zM182.5 189h.5V232.5h-.5zM183 209h.5V255h-.5zM183.5 231.5h.5V277.5h-.5zM184 254h.5V299h-.5zM184.5 276.5h.5V318h-.5zM185 298h.5V334h-.5zM185.5 317h.5V346.5h-.5zM186 333h.5V354.5h-.5zM186.5 345.5h.5V358h-.5zM187 353.5h.5V358h-.5zM187.5 349h.5V358h-.5zM188 338.5h.5V356.5h-.5zM188.5 323.5h.5V350h-.5zM189 305.5h.5V339.5h-.5zM189.5 285h.5V324.5h-.5zM190 263h.5V306.5h-.5zM190.5 240h.5V286h-.5zM191 217.5h.5V264h-.5zM191.5 196.5h.5V241h-.5zM192 177.5h.5V218.5h-.5zM192.5 161.5h.5V197.5h-.5zM193 150h.5V178.5h-.5zM193.5 142h.5V162.5h-.5zM194 139h.5V151h-.5zM194.5 139h.5V143h-.5zM195 139h.5V148.5h-.5zM195.5 141h.5V159.5h-.5zM196 147.5h.5V174.5h-.5zM196.5 158.5h.5V193h-.5zM197 173.5h.5V213.5h-.5zM197.5 192h.5V236h-.5zM198 212.5h.5V259h-.5zM198.5 235h.5V281h-.5zM199 258h.5V302h-.5zM199.5 280h.5V321h-.5zM200 301h.5V336.5h-.5zM200.5 320h.5V348h-.5zM201 335.5h.5V355.5h-.5zM201.5 347h.5V358h-.5zM202 354.5h.5V358h-.5zM202.5 347.5h.5V358h-.5zM203 336.5h.5V355.5h-.5zM203.5 321h.5V348.5h-.5zM204 302.5h.5V337.5h-.5zM204.5 281.5h.5V322h-.5zM205 259.5h.5V303.5h-.5zM205.5 236.5h.5V282.5h-.5zM206 214h.5V260.5h-.5zM206.5 193h.5V237.5h-.5zM207 174.5h.5V215h-.5zM207.5 159.5h.5V194h-.5zM208 148h.5V175.5h-.5zM208.5 141.5h.5V160.5h-.5zM209 139h.5V149h-.5zM209.5 139h.5V143h-.5zM210 139h.5V150h-.5zM210.5 142h.5V162h-.5zM211 149h.5V177.5h-.5zM211.5 161h.5V196h-.5zM212 176.5h.5V217h-.5zM212.5 195h.5V239.5h-.5zM213 216h.5V262.5h-.5zM213.5 238.5h.5V284.5h-.5zM214 261.5h.5V305.5h-.5zM214.5 283.5h.5V323.5h-.5zM215 304.5h.5V338.5h-.5zM215.5 322.5h.5V349.5h-.5zM216 337.5h.5V356h-.5zM216.5 348.5h.5V358h-.5zM217 354h.5V358h-.5zM217.5 346h.5V358h-.5zM218 334h.5V355h-.5zM218.5 318.5h.5V347h-.5zM219 299.5h.5V335h-.5zM219.5 278h.5V319.5h-.5zM220 255.5h.5V300.5h-.5zM220.5 233h.5V279h-.5zM221 210.5h.5V256.5h-.5zM221.5 190h.5V234h-.5zM222 172h.5V211.5h-.5zM222.5 157.5h.5V191h-.5zM223 147h.5V173h-.5zM223.5 140.5h.5V158.5h-.5zM224 139h.5V148h-.5zM224.5 139h.5V143.5h-.5zM225 139.5h.5V151.5h-.5zM225.5 142.5h.5V164h-.5zM226 150.5h.5V180h-.5zM226.5 163h.5V199.5h-.5zM227 179h.5V220.5h-.5zM227.5 198.5h.5V243h-.5zM228 219.5h.5V266h-.5zM228.5 242h.5V288h-.5zM229 265h.5V308.5h-.5zM229.5 287h.5V326h-.5zM230 307.5h.5V340.5h-.5zM230.5 325h.5V351h-.5zM231 339.5h.5V356.5h-.5zM231.5 350h.5V358h-.5zM232 353h.5V358h-.5zM232.5 344.5h.5V357.5h-.5zM233 332h.5V354h-.5zM233.5 315.5h.5V345.5h-.5zM234 296h.5V333h-.5zM234.5 274.5h.5V316.5h-.5zM235 252h.5V297h-.5zM235.5 229h.5V275.5h-.5zM236 207h.5V253h-.5zM236.5 187h.5V230h-.5zM237 169.5h.5V208h-.5zM237.5 155.5h.5V188h-.5zM238 145.5h.5V170.5h-.5zM238.5 140h.5V156.5h-.5zM239 139h.5V146.5h-.5zM239.5 139h.5V144.5h-.5zM240 139.5h.5V153.5h-.5zM240.5 143.5h.5V166.5h-.5zM241 152.5h.5V183h-.5zM241.5 165.5h.5V202.5h-.5zM242 182h.5V224h-.5zM242.5 201.5h.5V247h-.5zM243 223h.5V269.5h-.5zM243.5 246h.5V291.5h-.5zM244 268.5h.5V311.5h-.5zM244.5 290.5h.5V329h-.5zM245 310.5h.5V342.5h-.5zM245.5 328h.5V352h-.5zM246 341.5h.5V357h-.5zM246.5 351h.5V358h-.5zM247 352h.5V358h-.5zM247.5 342.5h.5V357.5h-.5zM248 329.5h.5V353h-.5zM248.5 312.5h.5V343.5h-.5zM249 293h.5V330.5h-.5zM249.5 271h.5V313.5h-.5zM250 248.5h.5V294h-.5zM250.5 225.5h.5V272h-.5zM251 204h.5V249.5h-.5zM251.5 184h.5V226.5h-.5zM252 167h.5V205h-.5zM252.5 153.5h.5V185h-.5zM253 144.5h.5V168h-.5zM253.5 139.5h.5V154.5h-.5zM254 139h.5V145.5h-.5zM254.5 139h.5V145.5h-.5zM255 140h.5V155h-.5zM255.5 144.5h.5V169h-.5zM256 154h.5V186h-.5zM256.5 168h.5V206h-.5zM257 185h.5V227.5h-.5zM257.5 205h.5V250.5h-.5zM258 226.5h.5V273h-.5zM258.5 249.5h.5V295h-.5zM259 272h.5V314.5h-.5zM259.5 294h.5V331h-.5zM260 313.5h.5V344.5h-.5zM260.5 330h.5V353h-.5zM261 343.5h.5V357.5h-.5zM261.5 352h.5V358h-.5zM262 350.5h.5V358h-.5zM262.5 341h.5V357h-.5zM263 327h.5V351.5h-.5zM263.5 309.5h.5V342h-.5zM264 289.5h.5V328h-.5zM264.5 267.5h.5V310.5h-.5zM265 244.5h.5V290.5h-.5zM265.5 222h.5V268.5h-.5zM266 200.5h.5V245.5h-.5zM266.5 181h.5V223h-.5zM267 164.5h.5V201.5h-.5zM267.5 152h.5V182h-.5zM268 143.5h.5V165.5h-.5zM268.5 139.5h.5V153h-.5zM269 139h.5V144.5h-.5zM269.5 139h.5V147h-.5zM270 140.5h.5V157h-.5zM270.5 146h.5V171.5h-.5zM271 156h.5V189h-.5zM271.5 170.5h.5V209.5h-.5zM272 188h.5V231.5h-.5zM272.5 208.5h.5V254h-.5zM273 230.5h.5V277h-.5zM273.5 253h.5V298h-.5zM274 276h.5V317.5h-.5zM274.5 297h.5V333.5h-.5zM275 316.5h.5V346h-.5zM275.5 332.5h.5V354h-.5zM276 345h.5V357.5h-.5zM276.5 353h.5V358h-.5zM277 349.5h.5V358h-.5zM277.5 339h.5V356.5h-.5zM278 324.5h.5V350.5h-.5zM278.5 306.5h.5V340h-.5zM279 286h.5V325.5h-.5zM279.5 264h.5V307.5h-.5zM280 241h.5V287h-.5zM280.5 218.5h.5V265h-.5zM281 197h.5V242h-.5zM281.5 178h.5V219.5h-.5zM282 162.5h.5V198h-.5zM282.5 150h.5V179h-.5zM283 142.5h.5V163.5h-.5zM283.5 139h.5V151h-.5zM284 139h.5V143.5h-.5zM284.5 139h.5V148.5h-.5zM285 141h.5V159h-.5zM285.5 147.5h.5V174h-.5zM286 158h.5V192h-.5zM286.5 173h.5V212.5h-.5zM287 191h.5V235h-.5zM287.5 211.5h.5V258h-.5zM288 234h.5V280.5h-.5zM288.5 257h.5V301.5h-.5zM289 279.5h.5V320h-.5zM289.5 300.5h.5V336h-.5zM290 319h.5V347.5h-.5zM290.5 335h.5V355h-.5zM291 346.5h.5V358h-.5zM291.5 354h.5V358h-.5zM292 348h.5V358h-.5zM292.5 337h.5V356h-.5zM293 321.5h.5V349h-.5zM293.5 303.5h.5V338h-.5zM294 282.5h.5V322.5h-.5zM294.5 260h.5V304.5h-.5zM295 237.5h.5V283.5h-.5zM295.5 215h.5V261h-.5zM296 194h.5V238.5h-.5zM296.5 175.5h.5V216h-.5zM297 160h.5V195h-.5zM297.5 148.5h.5V176.5h-.5zM298 141.5h.5V161h-.5zM298.5 139h.5V149.5h-.5zM299 139h.5V142.5h-.5zM299.5 139h.5V149.5h-.5zM300 141.5h.5V161h-.5zM300.5 148.5h.5V176.5h-.5zM301 160h.5V195h-.5zM301.5 175.5h.5V216h-.5zM302 194h.5V238.5h-.5zM302.5 215h.5V261.5h-.5zM303 237.5h.5V284h-.5zM303.5 260.5h.5V304.5h-.5zM304 283h.5V323h-.5zM304.5 303.5h.5V338h-.5zM305 322h.5V349h-.5zM305.5 337h.5V356h-.5zM306 348h.5V358h-.5zM306.5 354h.5V358h-.5zM307 346.5h.5V358h-.5zM307.5 334.5h.5V355h-.5zM308 319h.5V347.5h-.5zM308.5 300h.5V335.5h-.5zM309 279h.5V320h-.5zM309.5 256.5h.5V301h-.5zM310 233.5h.5V280h-.5zM310.5 211.5h.5V257.5h-.5zM311 191h.5V234.5h-.5zM311.5 172.5h.5V212.5h-.5zM312 158h.5V192h-.5zM312.5 147h.5V173.5h-.5zM313 141h.5V159h-.5zM313.5 139h.5V148h-.5zM314 139h.5V143.5h-.5zM314.5 139h.5V151.5h-.5zM315 142.5h.5V163.5h-.5zM315.5 150.5h.5V179.5h-.5zM316 162.5h.5V198.5h-.5zM316.5 178.5h.5V219.5h-.5zM317 197.5h.5V242.5h-.5zM317.5 218.5h.5V265h-.5zM318 241.5h.5V287.5h-.5zM318.5 264h.5V307.5h-.5zM319 286.5h.5V325.5h-.5zM319.5 306.5h.5V340h-.5zM320 324.5h.5V350.5h-.5zM320.5 339h.5V356.5h-.5zM321 349.5h.5V358h-.5zM321.5 353h.5V358h-.5zM322 345h.5V357.5h-.5zM322.5 332.5h.5V354h-.5zM323 316h.5V346h-.5zM323.5 297h.5V333.5h-.5zM324 275.5h.5V317h-.5zM324.5 253h.5V298h-.5zM325 230h.5V276.5h-.5zM325.5 208h.5V254h-.5zM326 187.5h.5V231h-.5zM326.5 170h.5V209h-.5zM327 156h.5V188.5h-.5zM327.5 146h.5V171h-.5zM328 140h.5V157h-.5zM328.5 139h.5V147h-.5zM329 139h.5V144.5h-.5zM329.5 139.5h.5V153h-.5zM330 143.5h.5V166h-.5zM330.5 152h.5V182.5h-.5zM331 165h.5V201.5h-.5zM331.5 181.5h.5V223.5h-.5zM332 200.5h.5V246h-.5zM332.5 222.5h.5V269h-.5zM333 245h.5V290.5h-.5zM333.5 268h.5V311h-.5zM334 289.5h.5V328h-.5zM334.5 310h.5V342h-.5zM335 327h.5V352h-.5zM335.5 341h.5V357h-.5zM336 351h.5V358h-.5zM336.5 352h.5V358h-.5zM337 343h.5V357.5h-.5zM337.5 330h.5V353h-.5zM338 313.5h.5V344h-.5zM338.5 293.5h.5V331h-.5zM339 272h.5V314.5h-.5zM339.5 249h.5V294.5h-.5zM340 226.5h.5V273h-.5zM340.5 204.5h.5V250h-.5zM341 184.5h.5V227.5h-.5zM341.5 167.5h.5V205.5h-.5zM342 154h.5V185.5h-.5zM342.5 144.5h.5V168.5h-.5zM343 140h.5V155h-.5zM343.5 139h.5V145.5h-.5zM344 139h.5V145.5h-.5zM344.5 139.5h.5V154.5h-.5zM345 144.5h.5V168h-.5zM345.5 153.5h.5V185h-.5zM346 167h.5V205h-.5zM346.5 184h.5V227h-.5zM347 204h.5V249.5h-.5zM347.5 226h.5V272.5h-.5zM348 248.5h.5V294h-.5zM348.5 271.5h.5V314h-.5zM349 293h.5V330.5h-.5zM349.5 313h.5V344h-.5zM350 329.5h.5V353h-.5zM350.5 343h.5V357.5h-.5zM351 352h.5V358h-.5zM351.5 351h.5V358h-.5zM352 341.5h.5V357h-.5zM352.5 327.5h.5V352h-.5zM353 310.5h.5V342.5h-.5zM353.5 290.5h.5V328.5h-.5zM354 268.5h.5V311.5h-.5zM354.5 245.5h.5V291.5h-.5zM355 223h.5V269.5h-.5zM355.5 201.5h.5V246.5h-.5zM356 182h.5V224h-.5zM356.5 165h.5V202.5h-.5zM357 152h.5V183h-.5zM357.5 143.5h.5V166h-.5zM358 139.5h.5V153h-.5zM358.5 139h.5V144.5h-.5zM359 139h.5V146.5h-.5zM359.5 140h.5V156.5h-.5zM360 145.5h.5V170.5h-.5zM360.5 155.5h.5V188h-.5zM361 169.5h.5V208.5h-.5zM361.5 187h.5V230.5h-.5zM362 207.5h.5V253.5h-.5zM362.5 229.5h.5V276h-.5zM363 252.5h.5V297.5h-.5zM363.5 275h.5V316.5h-.5zM364 296.5h.5V333h-.5zM364.5 315.5h.5V345.5h-.5zM365 332h.5V354h-.5zM365.5 344.5h.5V357.5h-.5zM366 353h.5V358h-.5zM366.5 349.5h.5V358h-.5zM367 339.5h.5V356.5h-.5zM367.5 325h.5V350.5h-.5zM368 307h.5V340.5h-.5zM368.5 287h.5V326h-.5zM369 264.5h.5V308h-.5zM369.5 242h.5V288h-.5zM370 219.5h.5V265.5h-.5zM370.5 198h.5V243h-.5zM371 179h.5V220.5h-.5zM371.5 163h.5V199h-.5zM372 150.5h.5V180h-.5zM372.5 142.5h.5V164h-.5zM373 139h.5V151.5h-.5zM373.5 139h.5V143.5h-.5zM374 139h.5V148h-.5zM374.5 140.5h.5V158.5h-.5zM375 147h.5V173.5h-.5zM375.5 157.5h.5V191.5h-.5zM376 172.5h.5V212h-.5zM376.5 190.5h.5V234h-.5zM377 211h.5V257h-.5zM377.5 233h.5V279.5h-.5zM378 256h.5V300.5h-.5zM378.5 278.5h.5V319.5h-.5zM379 299.5h.5V335.5h-.5zM379.5 318.5h.5V347h-.5zM380 334.5h.5V355h-.5zM380.5 346h.5V358h-.5zM381 354h.5V358h-.5zM381.5 348.5h.5V358h-.5zM382 337.5h.5V356h-.5zM382.5 322.5h.5V349.5h-.5zM383 304h.5V338.5h-.5zM383.5 283.5h.5V323.5h-.5zM384 261h.5V305h-.5zM384.5 238h.5V284.5h-.5zM385 216h.5V262h-.5zM385.5 195h.5V239h-.5zM386 176h.5V217h-.5zM386.5 160.5h.5V196h-.5zM387 149h.5V177h-.5zM387.5 141.5h.5V161.5h-.5zM388 139h.5V150h-.5zM388.5 139h.5V142.5h-.5zM389 139h.5V149.5h-.5zM389.5 141.5h.5V160.5h-.5zM390 148.5h.5V176h-.5zM390.5 159.5h.5V194.5h-.5zM391 175h.5V215.5h-.5zM391.5 193.5h.5V237.5h-.5zM392 214.5h.5V260.5h-.5zM392.5 236.5h.5V283h-.5zM393 259.5h.5V304h-.5zM393.5 282h.5V322.5h-.5zM394 303h.5V337.5h-.5zM394.5 321.5h.5V349h-.5zM395 336.5h.5V355.5h-.5zM395.5 348h.5V358h-.5zM396 354h.5V358h-.5zM396.5 347h.5V358h-.5zM397 335h.5V355h-.5zM397.5 319.5h.5V348h-.5zM398 301h.5V336h-.5zM398.5 280h.5V320.5h-.5zM399 257.5h.5V302h-.5zM399.5 234.5h.5V281h-.5zM400 212.5h.5V258.5h-.5zM400.5 191.5h.5V235.5h-.5zM401 173.5h.5V213.5h-.5zM401.5 158.5h.5V192.5h-.5zM402 147.5h.5V174.5h-.5zM402.5 141h.5V159.5h-.5zM403 139h.5V148.5h-.5zM403.5 139h.5V143h-.5zM404 139h.5V151h-.5zM404.5 142h.5V163h-.5zM405 150h.5V178.5h-.5zM405.5 162h.5V197.5h-.5zM406 177.5h.5V219h-.5zM406.5 196.5h.5V241.5h-.5zM407 218h.5V264h-.5zM407.5 240.5h.5V286.5h-.5zM408 263h.5V307h-.5zM408.5 285.5h.5V325h-.5zM409 306h.5V339.5h-.5zM409.5 324h.5V350h-.5zM410 338.5h.5V356.5h-.5zM410.5 349h.5V358h-.5zM411 353.5h.5V358h-.5zM411.5 345.5h.5V357.5h-.5zM412 333h.5V354.5h-.5zM412.5 317h.5V346.5h-.5zM413 297.5h.5V334h-.5zM413.5 276.5h.5V318h-.5zM414 254h.5V298.5h-.5zM414.5 231h.5V277.5h-.5zM415 209h.5V255h-.5zM415.5 188.5h.5V232h-.5zM416 171h.5V210h-.5zM416.5 156.5h.5V189.5h-.5zM417 146h.5V172h-.5zM417.5 140.5h.5V157.5h-.5zM418 139h.5V147h-.5zM418.5 139h.5V144h-.5zM419 139.5h.5V152.5h-.5zM419.5 143h.5V165h-.5zM420 151.5h.5V181.5h-.5zM420.5 164h.5V201h-.5zM421 180.5h.5V222.5h-.5zM421.5 200h.5V245h-.5zM422 221.5h.5V268h-.5zM422.5 244h.5V290h-.5zM423 267h.5V310h-.5zM423.5 289h.5V327.5h-.5zM424 309h.5V341.5h-.5zM424.5 326.5h.5V351.5h-.5zM425 340.5h.5V357h-.5zM425.5 350.5h.5V358h-.5zM426 352.5h.5V358h-.5zM426.5 343.5h.5V357.5h-.5zM427 330.5h.5V353.5h-.5zM427.5 314h.5V344.5h-.5zM428 294.5h.5V331.5h-.5zM428.5 273h.5V315h-.5zM429 250h.5V295.5h-.5zM429.5 227.5h.5V274h-.5zM430 205.5h.5V251h-.5zM430.5 185.5h.5V228.5h-.5zM431 168h.5V206.5h-.5zM431.5 154.5h.5V186.5h-.5zM432 145h.5V169h-.5zM432.5 140h.5V155.5h-.5zM433 139h.5V146h-.5zM433.5 139h.5V145h-.5zM434 139.5h.5V154.5h-.5zM434.5 144h.5V167.5h-.5zM435 153.5h.5V184.5h-.5zM435.5 166.5h.5V204h-.5zM436 183.5h.5V226h-.5zM436.5 203h.5V248.5h-.5zM437 225h.5V271.5h-.5zM437.5 247.5h.5V293h-.5zM438 270.5h.5V313h-.5zM438.5 292h.5V330h-.5zM439 312h.5V343.5h-.5zM439.5 329h.5V352.5h-.5zM440 342.5h.5V357.5h-.5zM440.5 351.5h.5V358h-.5zM441 351.5h.5V358h-.5zM441.5 342h.5V357h-.5zM442 328h.5V352.5h-.5zM442.5 311h.5V343h-.5zM443 291h.5V329h-.5zM443.5 269.5h.5V312h-.5zM444 246.5h.5V292h-.5zM444.5 224h.5V270.5h-.5zM445 202h.5V247.5h-.5zM445.5 182.5h.5V225h-.5zM446 166h.5V203h-.5zM446.5 152.5h.5V183.5h-.5zM447 144h.5V167h-.5zM447.5 139.5h.5V153.5h-.5zM448 139h.5V145h-.5zM448.5 139h.5V146.5h-.5zM449 140h.5V156h-.5zM449.5 145.5h.5V170h-.5zM450 155h.5V187.5h-.5zM450.5 169h.5V207.5h-.5zM451 186.5h.5V229.5h-.5zM451.5 206.5h.5V252.5h-.5zM452 228.5h.5V275h-.5zM452.5 251.5h.5V296.5h-.5zM453 274h.5V316h-.5zM453.5 295.5h.5V332.5h-.5zM454 315h.5V345h-.5zM454.5 331.5h.5V353.5h-.5zM455 344h.5V357.5h-.5zM455.5 352.5h.5V358h-.5zM456 350h.5V358h-.5zM456.5 340h.5V356.5h-.5zM457 325.5h.5V351h-.5zM457.5 308h.5V341h-.5zM458 287.5h.5V326.5h-.5zM458.5 265.5h.5V309h-.5zM459 243h.5V288.5h-.5zM459.5 220h.5V266.5h-.5zM460 199h.5V244h-.5zM460.5 179.5h.5V221h-.5zM461 163.5h.5V200h-.5zM461.5 151h.5V180.5h-.5zM462 143h.5V164.5h-.5zM462.5 139.5h.5V152h-.5zM463 139h.5V144h-.5zM463.5 139h.5V147.5h-.5zM464 140.5h.5V158h-.5zM464.5 146.5h.5V172.5h-.5zM465 157h.5V190.5h-.5zM465.5 171.5h.5V211h-.5zM466 189.5h.5V233h-.5zM466.5 210h.5V256h-.5zM467 232h.5V278.5h-.5zM467.5 255h.5V300h-.5zM468 277.5h.5V319h-.5zM468.5 299h.5V334.5h-.5zM469 318h.5V347h-.5zM469.5 333.5h.5V354.5h-.5zM470 346h.5V358h-.5zM470.5 353.5h.5V358h-.5zM471 348.5h.5V358h-.5zM471.5 338h.5V356h-.5zM472 323h.5V349.5h-.5zM472.5 305h.5V339h-.5zM473 284.5h.5V324h-.5zM473.5 262h.5V306h-.5zM474 239h.5V285.5h-.5zM474.5 216.5h.5V263h-.5zM475 195.5h.5V240h-.5zM475.5 177h.5V217.5h-.5zM476 161h.5V196.5h-.5zM476.5 149.5h.5V178h-.5zM477 142h.5V162h-.5zM477.5 139h.5V150.5h-.5zM478 139h.5V143h-.5zM478.5 139h.5V149h-.5zM479 141h.5V160h-.5zM479.5 148h.5V175.5h-.5zM480 159h.5V193.5h-.5zM480.5 174.5h.5V214.5h-.5zM481 192.5h.5V237h-.5zM481.5 213.5h.5V259.5h-.5zM482 236h.5V282h-.5zM482.5 258.5h.5V303h-.5zM483 281h.5V321.5h-.5zM483.5 302h.5V337h-.5zM484 320.5h.5V348.5h-.5zM484.5 336h.5V355.5h-.5zM485 347.5h.5V358h-.5zM485.5 354.5h.5V358h-.5zM486 347.5h.5V358h-.5zM486.5 336h.5V355.5h-.5zM487 320.5h.5V348.5h-.5zM487.5 302h.5V337h-.5zM488 281h.5V321.5h-.5zM488.5 258.5h.5V303h-.5zM489 235.5h.5V282h-.5zM489.5 213h.5V259.5h-.5zM490 192.5h.5V236.5h-.5zM490.5 174h.5V214h-.5zM491 159h.5V193.5h-.5zM491.5 148h.5V175h-.5zM492 141h.5V160h-.5zM492.5 139h.5V149h-.5zM493 139h.5V143h-.5zM493.5 139h.5V150.5h-.5zM494 142h.5V162.5h-.5zM494.5 149.5h.5V178h-.5zM495 161.5h.5V197h-.5zM495.5 177h.5V218h-.5zM496 196h.5V240.5h-.5zM496.5 217h.5V263.5h-.5zM497 239.5h.5V285.5h-.5zM497.5 262.5h.5V306h-.5zM498 284.5h.5V324.5h-.5zM498.5 305h.5V339h-.5zM499 323.5h.5V350h-.5zM499.5 338h.5V356h-.5zM500 349h.5V358h-.5zM500.5 353.5h.5V358h-.5zM501 345.5h.5V358h-.5zM501.5 333.5h.5V354.5h-.5zM502 317.5h.5V346.5h-.5zM502.5 298.5h.5V334.5h-.5zM503 277.5h.5V318.5h-.5zM503.5 254.5h.5V299.5h-.5zM504 232h.5V278.5h-.5zM504.5 209.5h.5V255.5h-.5zM505 189.5h.5V233h-.5zM505.5 171.5h.5V210.5h-.5zM506 157h.5V190.5h-.5zM506.5 146.5h.5V172.5h-.5zM507 140.5h.5V158h-.5zM507.5 139h.5V147.5h-.5zM508 139h.5V144h-.5zM508.5 139.5h.5V152h-.5zM509 143h.5V164.5h-.5zM509.5 151h.5V181h-.5zM510 163.5h.5V200h-.5zM510.5 180h.5V221.5h-.5zM511 199h.5V244h-.5zM511.5 220.5h.5V267h-.5zM512 243h.5V289h-.5zM512.5 266h.5V309.5h-.5zM513 288h.5V327h-.5zM513.5 308.5h.5V341h-.5zM514 326h.5V351h-.5zM514.5 340h.5V357h-.5zM515 350h.5V358h-.5zM515.5 352.5h.5V358h-.5zM516 344h.5V357.5h-.5zM516.5 331h.5V353.5h-.5zM517 314.5h.5V345h-.5zM517.5 295.5h.5V332h-.5zM518 273.5h.5V315.5h-.5zM518.5 251h.5V296.5h-.5zM519 228h.5V274.5h-.5zM519.5 206.5h.5V252h-.5zM520 186h.5V229h-.5zM520.5 169h.5V207.5h-.5zM521 155h.5V187h-.5zM521.5 145h.5V170h-.5zM522 140h.5V156h-.5zM522.5 139h.5V146h-.5zM523 139h.5V145h-.5zM523.5 139.5h.5V154h-.5zM524 144h.5V167h-.5zM524.5 153h.5V183.5h-.5zM525 166h.5V203.5h-.5zM525.5 182.5h.5V225h-.5zM526 202.5h.5V248h-.5zM526.5 224h.5V270.5h-.5zM527 247h.5V292.5h-.5zM527.5 269.5h.5V312.5h-.5zM528 291.5h.5V329.5h-.5zM528.5 311.5h.5V343h-.5zM529 328.5h.5V352.5h-.5zM529.5 342h.5V357h-.5zM530 351.5h.5V358h-.5zM530.5 351.5h.5V358h-.5zM531 342.5h.5V357.5h-.5zM531.5 329h.5V352.5h-.5zM532 312h.5V343.5h-.5zM532.5 292h.5V330h-.5zM533 270h.5V313h-.5zM533.5 247.5h.5V293h-.5zM534 224.5h.5V271h-.5zM534.5 203h.5V248.5h-.5zM535 183h.5V225.5h-.5zM535.5 166.5h.5V204h-.5zM536 153h.5V184h-.5zM536.5 144h.5V167.5h-.5zM537 139.5h.5V154h-.5zM537.5 139h.5V145h-.5zM538 139h.5V146h-.5zM538.5 140h.5V155.5h-.5zM539 145h.5V169.5h-.5zM539.5 154.5h.5V186.5h-.5zM540 168.5h.5V206.5h-.5zM540.5 185.5h.5V228.5h-.5zM541 205.5h.5V251.5h-.5zM541.5 227.5h.5V274h-.5zM542 250.5h.5V295.5h-.5zM542.5 273h.5V315h-.5zM543 294.5h.5V332h-.5zM543.5 314h.5V345h-.5zM544 331h.5V353.5h-.5zM544.5 344h.5V357.5h-.5zM545 352.5h.5V358h-.5zM545.5 350.5h.5V358h-.5zM546 340.5h.5V357h-.5zM546.5 326.5h.5V351.5h-.5zM547 309h.5V341.5h-.5zM547.5 288.5h.5V327.5h-.5zM548 266.5h.5V310h-.5zM548.5 243.5h.5V289.5h-.5zM549 221h.5V267.5h-.5zM549.5 199.5h.5V244.5h-.5zM550 180.5h.5V222h-.5zM550.5 164h.5V200.5h-.5zM551 151.5h.5V181.5h-.5zM551.5 143h.5V165h-.5zM552 139.5h.5V152.5h-.5zM552.5 139h.5V144h-.5zM553 139h.5V147.5h-.5zM553.5 140.5h.5V157.5h-.5zM554 146.5h.5V172h-.5zM554.5 156.5h.5V190h-.5zM555 171h.5V210h-.5zM555.5 189h.5V232.5h-.5zM556 209h.5V255h-.5zM556.5 231.5h.5V277.5h-.5zM557 254h.5V299h-.5zM557.5 276.5h.5V318h-.5zM558 298h.5V334h-.5zM558.5 317h.5V346.5h-.5zM559 333h.5V354.5h-.5zM559.5 345.5h.5V358h-.5zM560 353.5h.5V358h-.5zM560.5 349h.5V358h-.5zM561 338.5h.5V356.5h-.5zM561.5 323.5h.5V350h-.5zM562 305.5h.5V339.5h-.5zM562.5 285h.5V324.5h-.5zM563 263h.5V306.5h-.5zM563.5 240h.5V286h-.5zM564 217.5h.5V264h-.5zM564.5 196.5h.5V241h-.5zM565 177.5h.5V218.5h-.5zM565.5 161.5h.5V197.5h-.5zM566 150h.5V178.5h-.5zM566.5 142h.5V162.5h-.5zM567 139h.5V151h-.5zM567.5 139h.5V143h-.5zM568 139h.5V148.5h-.5zM568.5 141h.5V159.5h-.5zM569 147.5h.5V174.5h-.5zM569.5 158.5h.5V193h-.5zM570 173.5h.5V213.5h-.5zM570.5 192h.5V236h-.5zM571 212.5h.5V259h-.5zM571.5 235h.5V281h-.5zM572 258h.5V302h-.5zM572.5 280h.5V321h-.5zM573 301h.5V336.5h-.5zM573.5 320h.5V348h-.5zM574 335.5h.5V355.5h-.5zM574.5 347h.5V358h-.5zM575 354.5h.5V358h-.5zM575.5 347.5h.5V358h-.5zM576 336.5h.5V355.5h-.5zM576.5 321h.5V348.5h-.5zM577 302.5h.5V337.5h-.5zM577.5 281.5h.5V322h-.5zM578 259.5h.5V303.5h-.5zM578.5 236.5h.5V282.5h-.5zM579 214h.5V260.5h-.5zM579.5 193h.5V237.5h-.5zM580 174.5h.5V215h-.5zM580.5 159.5h.5V194h-.5zM581 148h.5V175.5h-.5zM581.5 141.5h.5V160.5h-.5zM582 139h.5V149h-.5zM582.5 139h.5V143h-.5zM583 139h.5V150h-.5zM583.5 142h.5V162h-.5zM584 149h.5V177.5h-.5zM584.5 161h.5V196h-.5zM585 176.5h.5V217h-.5zM585.5 195h.5V239.5h-.5zM586 216h.5V262.5h-.5zM586.5 238.5h.5V284.5h-.5zM587 261.5h.5V305.5h-.5zM587.5 283.5h.5V323.5h-.5zM588 304.5h.5V338.5h-.5zM588.5 322.5h.5V349.5h-.5zM589 337.5h.5V356h-.5zM589.5 348.5h.5V358h-.5zM590 354h.5V358h-.5zM590.5 346h.5V358h-.5zM591 334h.5V355h-.5zM591.5 318.5h.5V347h-.5zM592 299.5h.5V335h-.5zM592.5 278h.5V319.5h-.5zM593 255.5h.5V300.5h-.5zM593.5 233h.5V279h-.5zM594 210.5h.5V256.5h-.5zM594.5 190h.5V234h-.5zM595 172h.5V211.5h-.5zM595.5 157.5h.5V191h-.5zM596 147h.5V173h-.5zM596.5 140.5h.5V158.5h-.5zM597 139h.5V148h-.5zM597.5 139h.5V143.5h-.5zM598 139.5h.5V151.5h-.5zM598.5 142.5h.5V164h-.5zM599 150.5h.5V180h-.5zM599.5 163h.5V199.5h-.5zM600 179h.5V220.5h-.5zM600.5 198.5h.5V243h-.5zM601 219.5h.5V266h-.5zM601.5 242h.5V288h-.5zM602 265h.5V308.5h-.5zM602.5 287h.5V326h-.5zM603 307.5h.5V340.5h-.5zM603.5 325h.5V351h-.5zM604 339.5h.5V356.5h-.5zM604.5 350h.5V358h-.5zM605 353h.5V358h-.5zM605.5 344.5h.5V357.5h-.5zM606 332h.5V354h-.5zM606.5 315.5h.5V345.5h-.5zM607 296h.5V333h-.5zM607.5 274.5h.5V316.5h-.5zM608 252h.5V297h-.5zM608.5 229h.5V275.5h-.5zM609 207h.5V253h-.5zM609.5 187h.5V230h-.5zM610 169.5h.5V208h-.5zM610.5 155.5h.5V188h-.5zM611 145.5h.5V170.5h-.5zM611.5 140h.5V156.5h-.5zM612 139h.5V146.5h-.5zM612.5 139h.5V144.5h-.5zM613 139.5h.5V153.5h-.5zM613.5 143.5h.5V166.5h-.5zM614 152.5h.5V183h-.5zM614.5 165.5h.5V202.5h-.5zM615 182h.5V224h-.5zM615.5 201.5h.5V247h-.5zM616 223h.5V269.5h-.5zM616.5 246h.5V291.5h-.5zM617 268.5h.5V311.5h-.5zM617.5 290.5h.5V329h-.5zM618 310.5h.5V342.5h-.5zM618.5 328h.5V352h-.5zM619 341.5h.5V357h-.5zM619.5 351h.5V358h-.5zM620 352h.5V358h-.5zM620.5 342.5h.5V357.5h-.5zM621 329.5h.5V353h-.5zM621.5 312.5h.5V343.5h-.5zM622 293h.5V330.5h-.5zM622.5 271h.5V313.5h-.5zM623 248.5h.5V294h-.5zM623.5 225.5h.5V272h-.5zM624 204h.5V249.5h-.5zM624.5 184h.5V226.5h-.5zM625 167h.5V205h-.5zM625.5 153.5h.5V185h-.5zM626 144.5h.5V168h-.5zM626.5 139.5h.5V154.5h-.5zM627 139h.5V145.5h-.5zM627.5 139h.5V145.5h-.5zM628 140h.5V155h-.5zM628.5 144.5h.5V169h-.5zM629 154h.5V186h-.5zM629.5 168h.5V206h-.5zM630 185h.5V227.5h-.5zM630.5 205h.5V250.5h-.5zM631 226.5h.5V273h-.5zM631.5 249.5h.5V295h-.5zM632 272h.5V314.5h-.5zM632.5 294h.5V331h-.5zM633 313.5h.5V344.5h-.5zM633.5 330h.5V353h-.5zM634 343.5h.5V357.5h-.5zM634.5 352h.5V358h-.5zM635 350.5h.5V358h-.5zM635.5 341h.5V357h-.5zM636 327h.5V351.5h-.5zM636.5 309.5h.5V342h-.5zM637 289.5h.5V328h-.5zM637.5 267.5h.5V310.5h-.5zM638 244.5h.5V290.5h-.5zM638.5 222h.5V268.5h-.5zM639 200.5h.5V245.5h-.5zM639.5 181h.5V223h-.5zM640 164.5h.5V201.5h-.5zM640.5 152h.5V182h-.5zM641 143.5h.5V165.5h-.5zM641.5 139.5h.5V153h-.5zM642 139h.5V144.5h-.5zM642.5 139h.5V147h-.5zM643 140.5h.5V157h-.5zM643.5 146h.5V171.5h-.5zM644 156h.5V189h-.5zM644.5 170.5h.5V209.5h-.5zM645 188h.5V231.5h-.5zM645.5 208.5h.5V254h-.5zM646 230.5h.5V277h-.5zM646.5 253h.5V298h-.5zM647 276h.5V317.5h-.5zM647.5 297h.5V333.5h-.5zM648 316.5h.5V346h-.5zM648.5 332.5h.5V354h-.5zM649 345h.5V357.5h-.5zM649.5 353h.5V358h-.5zM650 349.5h.5V358h-.5zM650.5 339h.5V356.5h-.5zM651 324.5h.5V350.5h-.5zM651.5 306.5h.5V340h-.5zM652 286h.5V325.5h-.5zM652.5 264h.5V307.5h-.5zM653 241h.5V287h-.5zM653.5 218.5h.5V265h-.5zM654 197h.5V242h-.5zM654.5 178h.5V219.5h-.5zM655 162.5h.5V198h-.5zM655.5 150h.5V179h-.5zM656 142.5h.5V163.5h-.5zM656.5 139h.5V151h-.5zM657 139h.5V143.5h-.5zM657.5 139h.5V148.5h-.5zM658 141h.5V159h-.5zM658.5 147.5h.5V174h-.5zM659 158h.5V192h-.5zM659.5 173h.5V212.5h-.5zM660 191h.5V235h-.5zM660.5 211.5h.5V258h-.5zM661 234h.5V280.5h-.5zM661.5 257h.5V301.5h-.5zM662 279.5h.5V320h-.5zM662.5 300.5h.5V336h-.5zM663 319h.5V347.5h-.5zM663.5 335h.5V355h-.5zM664 346.5h.5V358h-.5zM664.5 354h.5V358h-.5zM665 348h.5V358h-.5zM665.5 337h.5V356h-.5zM666 321.5h.5V349h-.5zM666.5 303.5h.5V338h-.5zM667 282.5h.5V322.5h-.5zM667.5 260h.5V304.5h-.5zM668 237.5h.5V283.5h-.5zM668.5 215h.5V261h-.5zM669 194h.5V238.5h-.5zM669.5 175.5h.5V216h-.5zM670 160h.5V195h-.5zM670.5 148.5h.5V176.5h-.5zM671 141.5h.5V161h-.5zM671.5 139h.5V149.5h-.5zM672 139h.5V142.5h-.5zM672.5 139h.5V149.5h-.5zM673 141.5h.5V161h-.5zM673.5 148.5h.5V176.5h-.5zM674 160h.5V195h-.5zM674.5 175.5h.5V216h-.5zM675 194h.5V238.5h-.5zM675.5 215h.5V261.5h-.5zM676 237.5h.5V284h-.5zM676.5 260.5h.5V304.5h-.5zM677 283h.5V323h-.5zM677.5 303.5h.5V338h-.5zM678 322h.5V349h-.5zM678.5 337h.5V356h-.5zM679 348h.5V358h-.5zM679.5 354h.5V358h-.5zM680 346.5h.5V358h-.5zM680.5 334.5h.5V355h-.5zM681 319h.5V347.5h-.5zM681.5 300h.5V335.5h-.5zM682 279h.5V320h-.5zM682.5 256.5h.5V301h-.5zM683 233.5h.5V280h-.5zM683.5 211.5h.5V257.5h-.5zM684 191h.5V234.5h-.5zM684.5 172.5h.5V212.5h-.5zM685 158h.5V192h-.5zM685.5 147h.5V173.5h-.5zM686 141h.5V159h-.5zM686.5 139h.5V148h-.5zM687 139h.5V143.5h-.5zM687.5 139h.5V151.5h-.5zM688 142.5h.5V163.5h-.5zM688.5 150.5h.5V179.5h-.5zM689 162.5h.5V198.5h-.5zM689.5 178.5h.5V219.5h-.5zM690 197.5h.5V242.5h-.5zM690.5 218.5h.5V265h-.5zM691 241.5h.5V287.5h-.5zM691.5 264h.5V307.5h-.5zM692 286.5h.5V325.5h-.5zM692.5 306.5h.5V340h-.5zM693 324.5h.5V350.5h-.5zM693.5 339h.5V356.5h-.5zM694 349.5h.5V358h-.5zM694.5 353h.5V358h-.5zM695 345h.5V357.5h-.5zM695.5 332.5h.5V354h-.5zM696 316h.5V346h-.5zM696.5 297h.5V333.5h-.5zM697 275.5h.5V317h-.5zM697.5 253h.5V298h-.5zM698 230h.5V276.5h-.5zM698.5 208h.5V254h-.5zM699 187.5h.5V231h-.5zM699.5 170h.5V209h-.5zM700 156h.5V188.5h-.5zM700.5 146h.5V171h-.5zM701 140h.5V157h-.5zM701.5 139h.5V147h-.5zM702 139h.5V144.5h-.5zM702.5 139.5h.5V153h-.5zM703 143.5h.5V166h-.5zM703.5 152h.5V182.5h-.5zM704 165h.5V201.5h-.5zM704.5 181.5h.5V223.5h-.5zM705 200.5h.5V246h-.5zM705.5 222.5h.5V269h-.5zM706 245h.5V290.5h-.5zM706.5 268h.5V311h-.5zM707 289.5h.5V328h-.5zM707.5 310h.5V342h-.5zM708 327h.5V352h-.5zM708.5 341h.5V357h-.5zM709 351h.5V358h-.5zM709.5 352h.5V358h-.5zM710 343h.5V357.5h-.5zM710.5 330h.5V353h-.5zM711 313.5h.5V344h-.5zM711.5 293.5h.5V331h-.5zM712 272h.5V314.5h-.5zM712.5 249h.5V294.5h-.5zM713 226.5h.5V273h-.5zM713.5 204.5h.5V250h-.5zM714 184.5h.5V227.5h-.5zM714.5 167.5h.5V205.5h-.5zM715 154h.5V185.5h-.5zM715.5 144.5h.5V168.5h-.5zM716 140h.5V155h-.5zM716.5 139h.5V145.5h-.5zM717 139h.5V145.5h-.5zM717.5 139.5h.5V154.5h-.5zM718 144.5h.5V168h-.5zM718.5 153.5h.5V185h-.5zM719 167h.5V205h-.5zM719.5 184h.5V227h-.5zM720 204h.5V249.5h-.5zM720.5 226h.5V272.5h-.5zM721 248.5h.5V294h-.5zM721.5 271.5h.5V314h-.5zM722 293h.5V330.5h-.5zM722.5 313h.5V344h-.5zM723 329.5h.5V353h-.5zM723.5 343h.5V357.5h-.5zM724 352h.5V358h-.5zM724.5 351h.5V358h-.5zM725 341.5h.5V357h-.5zM725.5 327.5h.5V352h-.5zM726 310.5h.5V342.5h-.5zM726.5 290.5h.5V328.5h-.5zM727 268.5h.5V311.5h-.5zM727.5 245.5h.5V291.5h-.5zM728 223h.5V269.5h-.5zM728.5 201.5h.5V246.5h-.5zM729 182h.5V224h-.5zM729.5 165h.5V202.5h-.5zM730 152h.5V183h-.5zM730.5 143.5h.5V166h-.5zM731 139.5h.5V153h-.5zM731.5 139h.5V144.5h-.5zM732 139h.5V146.5h-.5zM732.5 140h.5V156.5h-.5zM733 145.5h.5V170.5h-.5zM733.5 155.5h.5V188h-.5zM734 169.5h.5V208.5h-.5zM734.5 187h.5V230.5h-.5zM735 207.5h.5V253.5h-.5zM735.5 229.5h.5V276h-.5zM736 252.5h.5V297.5h-.5zM736.5 275h.5V316.5h-.5zM737 296.5h.5V333h-.5zM737.5 315.5h.5V345.5h-.5zM738 332h.5V354h-.5zM738.5 344.5h.5V357.5h-.5zM739 353h.5V358h-.5zM739.5 349.5h.5V358h-.5zM740 339.5h.5V356.5h-.5zM740.5 325h.5V350.5h-.5zM741 307h.5V340.5h-.5zM741.5 287h.5V326h-.5zM742 264.5h.5V308h-.5zM742.5 242h.5V288h-.5zM743 219.5h.5V265.5h-.5zM743.5 198h.5V243h-.5zM744 179h.5V220.5h-.5zM744.5 163h.5V199h-.5zM745 150.5h.5V180h-.5zM745.5 142.5h.5V164h-.5zM746 139h.5V151.5h-.5zM746.5 139h.5V143.5h-.5zM747 139h.5V148h-.5zM747.5 140.5h.5V158.5h-.5zM748 147h.5V173.5h-.5zM748.5 157.5h.5V191.5h-.5zM749 172.5h.5V212h-.5zM749.5 190.5h.5V234h-.5zM750 211h.5V257h-.5zM750.5 233h.5V279.5h-.5zM751 256h.5V300.5h-.5zM751.5 278.5h.5V319.5h-.5zM752 299.5h.5V335.5h-.5zM752.5 318.5h.5V347h-.5zM753 334.5h.5V355h-.5zM753.5 346h.5V358h-.5zM754 354h.5V358h-.5zM754.5 348.5h.5V358h-.5zM755 337.5h.5V356h-.5zM755.5 322.5h.5V349.5h-.5zM756 304h.5V338.5h-.5zM756.5 283.5h.5V323.5h-.5zM757 261h.5V305h-.5zM757.5 238h.5V284.5h-.5zM758 216h.5V262h-.5zM758.5 195h.5V239h-.5zM759 176h.5V217h-.5zM759.5 160.5h.5V196h-.5zM760 149h.5V177h-.5zM760.5 141.5h.5V161.5h-.5zM761 139h.5V150h-.5zM761.5 139h.5V142.5h-.5zM762 139h.5V149.5h-.5zM762.5 141.5h.5V160.5h-.5zM763 148.5h.5V176h-.5zM763.5 159.5h.5V194.5h-.5zM764 175h.5V215.5h-.5zM764.5 193.5h.5V237.5h-.5zM765 214.5h.5V260.5h-.5zM765.5 236.5h.5V283h-.5zM766 259.5h.5V304h-.5zM766.5 282h.5V322.5h-.5zM767 303h.5V337.5h-.5zM767.5 321.5h.5V349h-.5zM768 336.5h.5V355.5h-.5zM768.5 348h.5V358h-.5zM769 354h.5V358h-.5zM769.5 347h.5V358h-.5zM770 335h.5V355h-.5zM770.5 319.5h.5V348h-.5zM771 301h.5V336h-.5zM771.5 280h.5V320.5h-.5zM772 257.5h.5V302h-.5zM772.5 234.5h.5V281h-.5zM773 212.5h.5V258.5h-.5zM773.5 191.5h.5V235.5h-.5zM774 173.5h.5V213.5h-.5zM774.5 158.5h.5V192.5h-.5zM775 147.5h.5V174.5h-.5zM775.5 141h.5V159.5h-.5zM776 139h.5V148.5h-.5zM776.5 139h.5V143h-.5zM777 139h.5V151h-.5zM777.5 142h.5V154.5h-.5z"/>
</g>
<g>
<path fill="#0072BD" d="M31.5 553h.5V555h-.5zM33 536h.5V551h-.5zM33.5 526h.5V545h-.5zM34 532.5h.5V537h-.5zM35 492.5h.5V516h-.5zM35.5 482.5h.5V504.5h-.5zM36 474.5h.5V493.5h-.5zM36.5 468.5h.5V483.5h-.5zM37 465.5h.5V475.5h-.5zM37.5 465h.5V469.5h-.5zM38 465h.5V472.5h-.5zM39 473.5h.5V502.5h-.5zM39.5 484h.5V524h-.5zM40 501.5h.5V547h-.5zM40.5 523h.5V570.5h-.5zM41 546h.5V566.5h-.5zM41.5 587h.5V609h-.5zM42 590.5h.5V621h-.5zM42.5 608h.5V626.5h-.5zM43 620h.5V627h-.5zM43.5 620.5h.5V627h-.5zM44 612.5h.5V626h-.5zM44.5 601.5h.5V621.5h-.5zM45 588h.5V613.5h-.5zM45.5 573.5h.5V602.5h-.5zM46 588h.5V589h-.5zM46.5 537.5h.5V572.5h-.5zM47 520h.5V556h-.5zM47.5 504h.5V538.5h-.5zM48 509.5h.5V521h-.5zM48.5 477.5h.5V493.5h-.5zM49 469h.5V490.5h-.5zM49.5 463.5h.5V478.5h-.5zM50 461.5h.5V470h-.5zM50.5 461.5h.5V464.5h-.5zM51 461.5h.5V469.5h-.5zM51.5 463.5h.5V477.5h-.5zM52 468.5h.5V488h-.5zM52.5 476.5h.5V491h-.5zM53 505.5h.5V515h-.5zM53.5 500h.5V530h-.5zM54 514h.5V545.5h-.5zM54.5 529h.5V560.5h-.5zM55 544.5h.5V564h-.5zM55.5 576h.5V586h-.5zM56 573h.5V595.5h-.5zM56.5 585h.5V602h-.5zM57 594.5h.5V605.5h-.5zM57.5 601h.5V606.5h-.5zM58 600.5h.5V606.5h-.5zM58.5 592.5h.5V606h-.5zM59 584h.5V601.5h-.5zM59.5 574.5h.5V593.5h-.5zM60 574.5h.5V585h-.5zM60.5 549.5h.5V562.5h-.5zM61 532.5h.5V564.5h-.5zM61.5 516h.5V550.5h-.5zM62 501.5h.5V533.5h-.5zM62.5 501.5h.5V517h-.5zM63 480.5h.5V489.5h-.5zM63.5 472h.5V491h-.5zM64 464h.5V481.5h-.5zM64.5 459h.5V473h-.5zM65 458h.5V465h-.5zM65.5 458h.5V464.5h-.5zM66 458.5h.5V473h-.5zM66.5 463.5h.5V481.5h-.5zM67 472h.5V491h-.5zM67.5 480.5h.5V489.5h-.5zM68 501.5h.5V516.5h-.5zM68.5 501.5h.5V533.5h-.5zM69 515.5h.5V550.5h-.5zM69.5 532.5h.5V565h-.5zM70 549.5h.5V562.5h-.5zM70.5 575h.5V585h-.5zM71 575h.5V594h-.5zM71.5 584h.5V602h-.5zM72 593h.5V607h-.5zM72.5 601h.5V607.5h-.5zM73 600h.5V607.5h-.5zM73.5 592h.5V606.5h-.5zM74 583h.5V601h-.5zM74.5 573.5h.5V593h-.5zM75 576.5h.5V584h-.5zM75.5 547h.5V564.5h-.5zM76 530h.5V563h-.5zM76.5 513h.5V548h-.5zM77 499h.5V531h-.5zM77.5 503.5h.5V514h-.5zM78 479h.5V491h-.5zM78.5 470h.5V489h-.5zM79 462h.5V480h-.5zM79.5 457.5h.5V471h-.5zM80 457.5h.5V463h-.5zM80.5 457.5h.5V465.5h-.5zM81 458.5h.5V473.5h-.5zM81.5 464.5h.5V482.5h-.5zM82 472.5h.5V492h-.5zM82.5 481.5h.5V487.5h-.5zM83 499.5h.5V519h-.5zM83.5 503h.5V536.5h-.5zM84 518h.5V553h-.5zM84.5 535.5h.5V567h-.5zM85 552h.5V560.5h-.5zM85.5 573.5h.5V587h-.5zM86 577h.5V596h-.5zM86.5 586h.5V603.5h-.5zM87 595h.5V608h-.5zM87.5 602.5h.5V608h-.5zM88 599.5h.5V608h-.5zM88.5 591h.5V606.5h-.5zM89 582h.5V600.5h-.5zM89.5 572h.5V592h-.5zM90 578.5h.5V583h-.5zM90.5 544.5h.5V567h-.5zM91 527h.5V561h-.5zM91.5 510.5h.5V545.5h-.5zM92 497h.5V528h-.5zM92.5 505.5h.5V511.5h-.5zM93 477h.5V492h-.5zM93.5 468h.5V487h-.5zM94 460.5h.5V478h-.5zM94.5 457h.5V469h-.5zM95 456.5h.5V461.5h-.5zM95.5 456.5h.5V466h-.5zM96 458.5h.5V474.5h-.5zM96.5 465h.5V483.5h-.5zM97 473.5h.5V493.5h-.5zM97.5 482.5h.5V485.5h-.5zM98 497h.5V522h-.5zM98.5 505h.5V539.5h-.5zM99 521h.5V556h-.5zM99.5 538.5h.5V569.5h-.5zM100 555h.5V558.5h-.5zM100.5 572h.5V589h-.5zM101 579h.5V598h-.5zM101.5 588h.5V605.5h-.5zM102 597h.5V608.5h-.5zM102.5 604.5h.5V608.5h-.5zM103 599h.5V608.5h-.5zM103.5 590h.5V606.5h-.5zM104 581h.5V600h-.5zM104.5 570.5h.5V591h-.5zM105 580.5h.5V582h-.5zM105.5 542h.5V569h-.5zM106 524.5h.5V559h-.5zM106.5 509h.5V543h-.5zM107 497h.5V525.5h-.5zM107.5 509h.5V510h-.5zM108 478.5h.5V496h-.5zM108.5 470h.5V488h-.5zM109 463h.5V479.5h-.5zM109.5 460.5h.5V471h-.5zM110 460.5h.5V464h-.5zM110.5 460.5h.5V470.5h-.5zM111 463h.5V479h-.5zM111.5 469.5h.5V487.5h-.5zM112 478h.5V496h-.5zM113 497h.5V525h-.5zM113.5 508.5h.5V541.5h-.5zM114 524h.5V557h-.5zM114.5 540.5h.5V567.5h-.5zM115 578h.5V578.5h-.5zM115.5 568.5h.5V587.5h-.5zM116 577.5h.5V595.5h-.5zM116.5 586.5h.5V602h-.5zM117 594.5h.5V604.5h-.5zM117.5 600.5h.5V604.5h-.5zM118 594h.5V604.5h-.5zM118.5 585.5h.5V601.5h-.5zM119 576.5h.5V595h-.5zM119.5 569.5h.5V586.5h-.5zM120 554h.5V556.5h-.5zM120.5 538.5h.5V568h-.5zM121 522h.5V555h-.5zM121.5 507h.5V539.5h-.5zM122 498.5h.5V523h-.5zM122.5 485.5h.5V487.5h-.5zM123 477h.5V496h-.5zM123.5 468.5h.5V486.5h-.5zM124 462.5h.5V478h-.5zM124.5 460.5h.5V469.5h-.5zM125 460.5h.5V465h-.5zM125.5 460.5h.5V472h-.5zM126 464h.5V480.5h-.5zM126.5 471h.5V489h-.5zM127 479.5h.5V494.5h-.5zM127.5 507.5h.5V512h-.5zM128 498h.5V527.5h-.5zM128.5 511h.5V544.5h-.5zM129 526.5h.5V559h-.5zM129.5 543.5h.5V565.5h-.5zM130 576.5h.5V580h-.5zM130.5 570h.5V589h-.5zM131 579h.5V597h-.5zM131.5 588h.5V603h-.5zM132 596h.5V604.5h-.5zM132.5 599.5h.5V604.5h-.5zM133 592.5h.5V604.5h-.5zM133.5 584h.5V600.5h-.5zM134 575h.5V593.5h-.5zM134.5 571.5h.5V585h-.5zM135 552h.5V559h-.5zM135.5 536h.5V566h-.5zM136 519.5h.5V553h-.5zM136.5 505h.5V537h-.5zM137 500.5h.5V520.5h-.5zM137.5 484h.5V489h-.5zM138 475.5h.5V494.5h-.5zM138.5 467.5h.5V485h-.5zM139 462h.5V476.5h-.5zM139.5 460.5h.5V468.5h-.5zM140 460.5h.5V466h-.5zM140.5 461h.5V473h-.5zM141 465h.5V481.5h-.5zM141.5 472h.5V490.5h-.5zM142 480.5h.5V493h-.5zM142.5 505h.5V514.5h-.5zM143 500h.5V530.5h-.5zM143.5 513.5h.5V547h-.5zM144 529.5h.5V561h-.5zM144.5 546h.5V564h-.5zM145 575h.5V581.5h-.5zM145.5 571.5h.5V590h-.5zM146 580.5h.5V598h-.5zM146.5 589h.5V603.5h-.5zM147 597h.5V604.5h-.5zM147.5 598.5h.5V604.5h-.5zM148 591h.5V604h-.5zM148.5 582.5h.5V599.5h-.5zM149 573.5h.5V592h-.5zM149.5 573h.5V583.5h-.5zM150 549.5h.5V561h-.5zM150.5 533.5h.5V564h-.5zM151 517h.5V550.5h-.5zM151.5 503h.5V534.5h-.5zM152 502h.5V518h-.5zM152.5 483h.5V490.5h-.5zM153 474h.5V493h-.5zM153.5 466.5h.5V484h-.5zM154 461.5h.5V475h-.5zM154.5 460.5h.5V467.5h-.5zM155 460.5h.5V467h-.5zM155.5 461h.5V474.5h-.5zM156 466h.5V483h-.5zM156.5 473.5h.5V492h-.5zM157 482h.5V491.5h-.5zM157.5 503h.5V516.5h-.5zM158 502h.5V533h-.5zM158.5 515.5h.5V549.5h-.5zM159 532h.5V563h-.5zM159.5 548.5h.5V562h-.5zM160 573.5h.5V583h-.5zM160.5 573h.5V591.5h-.5zM161 582h.5V599h-.5zM161.5 590.5h.5V604h-.5zM162 598h.5V604.5h-.5zM162.5 597.5h.5V604.5h-.5zM163 590h.5V603.5h-.5zM163.5 581h.5V598.5h-.5zM164 572h.5V591h-.5zM164.5 574.5h.5V582h-.5zM165 547h.5V563h-.5zM165.5 530.5h.5V562h-.5zM166 514.5h.5V548h-.5zM166.5 501h.5V531.5h-.5zM167 504h.5V515.5h-.5zM167.5 481.5h.5V492h-.5zM168 473h.5V491.5h-.5zM168.5 465.5h.5V482.5h-.5zM169 461h.5V474h-.5zM169.5 460.5h.5V466.5h-.5zM170 460.5h.5V468h-.5zM170.5 461.5h.5V476h-.5zM171 467h.5V484.5h-.5zM171.5 475h.5V493.5h-.5zM172 483.5h.5V490h-.5zM172.5 501h.5V519h-.5zM173 504h.5V535.5h-.5zM173.5 518h.5V551.5h-.5zM174 534.5h.5V565h-.5zM174.5 550.5h.5V560h-.5zM175 572h.5V584.5h-.5zM175.5 574.5h.5V593h-.5zM176 583.5h.5V600h-.5zM176.5 592h.5V604h-.5zM177 599h.5V604.5h-.5zM177.5 596.5h.5V604.5h-.5zM178 588.5h.5V603h-.5zM178.5 580h.5V597.5h-.5zM179 570.5h.5V589.5h-.5zM179.5 576h.5V581h-.5zM180 544.5h.5V564.5h-.5zM180.5 527h.5V560h-.5zM181 507.5h.5V545.5h-.5zM181.5 491.5h.5V528h-.5zM182 500.5h.5V508.5h-.5zM182.5 468.5h.5V485h-.5zM183 458h.5V480h-.5zM183.5 449.5h.5V469.5h-.5zM184 445h.5V459h-.5zM184.5 444.5h.5V450.5h-.5zM185 444.5h.5V455h-.5zM185.5 446.5h.5V465h-.5zM186 454h.5V475.5h-.5zM186.5 464h.5V487h-.5zM187 474.5h.5V478.5h-.5zM187.5 492h.5V519h-.5zM188 500h.5V539.5h-.5zM188.5 518h.5V559h-.5zM189 538.5h.5V574.5h-.5zM189.5 558h.5V563.5h-.5zM190 579h.5V597.5h-.5zM190.5 585.5h.5V607.5h-.5zM191 596.5h.5V616h-.5zM191.5 606.5h.5V620h-.5zM192 615h.5V620.5h-.5zM192.5 609.5h.5V620.5h-.5zM193 599.5h.5V618h-.5zM193.5 588.5h.5V610.5h-.5zM194 577h.5V600.5h-.5zM194.5 587h.5V589.5h-.5zM195 544h.5V574h-.5zM195.5 524h.5V563.5h-.5zM196 505h.5V545h-.5zM196.5 489.5h.5V525h-.5zM197 503h.5V506h-.5zM197.5 467h.5V487h-.5zM198 456.5h.5V478.5h-.5zM198.5 448h.5V468h-.5zM199 444.5h.5V457.5h-.5zM199.5 444.5h.5V449h-.5zM200 444.5h.5V456.5h-.5zM200.5 447.5h.5V466.5h-.5zM201 455.5h.5V477h-.5zM201.5 465.5h.5V489h-.5zM202 476h.5V477h-.5zM202.5 490h.5V522.5h-.5zM203 503h.5V543h-.5zM203.5 521.5h.5V561.5h-.5zM204 542h.5V575.5h-.5zM204.5 560.5h.5V561h-.5zM205 576.5h.5V599h-.5zM205.5 587.5h.5V609h-.5zM206 598h.5V617h-.5zM206.5 608h.5V620.5h-.5zM207 616h.5V620.5h-.5zM207.5 608h.5V620.5h-.5zM208 597.5h.5V617h-.5zM208.5 587h.5V609h-.5zM209 577h.5V598.5h-.5zM209.5 560h.5V561.5h-.5zM210 541h.5V576h-.5zM210.5 520.5h.5V561h-.5zM211 502h.5V542h-.5zM211.5 490.5h.5V521.5h-.5zM212 475.5h.5V477.5h-.5zM212.5 465h.5V488.5h-.5zM213 455h.5V476.5h-.5zM213.5 447.5h.5V466h-.5zM214 444.5h.5V456h-.5zM214.5 444.5h.5V449.5h-.5zM215 445h.5V458h-.5zM215.5 448.5h.5V468h-.5zM216 457h.5V479h-.5zM216.5 467h.5V486.5h-.5zM217 502h.5V506.5h-.5zM217.5 490h.5V525.5h-.5zM218 505.5h.5V546h-.5zM218.5 524.5h.5V564h-.5zM219 545h.5V573.5h-.5zM219.5 587h.5V590h-.5zM220 577.5h.5V600.5h-.5zM220.5 589h.5V610.5h-.5zM221 599.5h.5V618h-.5zM221.5 609.5h.5V620.5h-.5zM222 615h.5V620.5h-.5zM222.5 606.5h.5V620h-.5zM223 596h.5V616h-.5zM223.5 585h.5V607.5h-.5zM224 579.5h.5V597h-.5zM224.5 557h.5V564h-.5zM225 537.5h.5V574h-.5zM225.5 517.5h.5V558h-.5zM226 499.5h.5V538.5h-.5zM226.5 492.5h.5V518.5h-.5zM227 474h.5V479h-.5zM227.5 463.5h.5V486.5h-.5zM228 453.5h.5V475h-.5zM228.5 446.5h.5V464.5h-.5zM229 444.5h.5V454.5h-.5zM229.5 444.5h.5V450.5h-.5zM230 445h.5V459.5h-.5zM230.5 449.5h.5V470h-.5zM231 458.5h.5V480.5h-.5zM231.5 469h.5V484.5h-.5zM232 499.5h.5V509.5h-.5zM232.5 492.5h.5V529h-.5zM233 508.5h.5V549h-.5zM233.5 528h.5V567h-.5zM234 548h.5V571.5h-.5zM234.5 585h.5V592h-.5zM235 579.5h.5V602.5h-.5zM235.5 591h.5V612h-.5zM236 601.5h.5V619h-.5zM236.5 611h.5V620.5h-.5zM237 614h.5V620.5h-.5zM237.5 604.5h.5V620h-.5zM238 594.5h.5V615h-.5zM238.5 583.5h.5V605.5h-.5zM239 581.5h.5V595.5h-.5zM239.5 554h.5V566.5h-.5zM240 534.5h.5V571.5h-.5zM240.5 514.5h.5V555h-.5zM241 497h.5V535.5h-.5zM241.5 495h.5V515.5h-.5zM242 472.5h.5V481h-.5zM242.5 462h.5V484.5h-.5zM243 452h.5V473.5h-.5zM243.5 446h.5V463h-.5zM244 444.5h.5V453h-.5zM244.5 444.5h.5V452h-.5zM245 445.5h.5V461h-.5zM245.5 451h.5V471.5h-.5zM246 460h.5V482.5h-.5zM246.5 470.5h.5V483h-.5zM247 497h.5V512.5h-.5zM247.5 494.5h.5V532h-.5zM248 511.5h.5V552h-.5zM248.5 531h.5V569h-.5zM249 551h.5V569h-.5zM249.5 583h.5V593.5h-.5zM250 581.5h.5V604h-.5zM250.5 592.5h.5V613.5h-.5zM251 603h.5V619.5h-.5zM251.5 612.5h.5V620.5h-.5zM252 612.5h.5V620.5h-.5zM252.5 603h.5V619.5h-.5zM253 592.5h.5V613.5h-.5zM253.5 581.5h.5V604h-.5zM254 583h.5V593.5h-.5zM254.5 551h.5V569h-.5zM255 531h.5V569h-.5zM255.5 511.5h.5V552h-.5zM256 494.5h.5V532h-.5zM256.5 497h.5V512.5h-.5zM257 470.5h.5V483h-.5zM257.5 460h.5V482.5h-.5zM258 451h.5V471.5h-.5zM258.5 445.5h.5V461h-.5zM259 444.5h.5V452h-.5zM259.5 444.5h.5V453h-.5zM260 446h.5V463h-.5zM260.5 452h.5V473.5h-.5zM261 462h.5V484.5h-.5zM261.5 472.5h.5V481h-.5zM262 495h.5V515.5h-.5zM262.5 497h.5V535.5h-.5zM263 514.5h.5V555h-.5zM263.5 534.5h.5V571.5h-.5zM264 554h.5V566.5h-.5zM264.5 581.5h.5V595.5h-.5zM265 583.5h.5V605.5h-.5zM265.5 594.5h.5V615h-.5zM266 604.5h.5V620h-.5zM266.5 614h.5V620.5h-.5zM267 611h.5V620.5h-.5zM267.5 601.5h.5V619h-.5zM268 591h.5V612h-.5zM268.5 579.5h.5V602.5h-.5zM269 585h.5V592h-.5zM269.5 548h.5V571.5h-.5zM270 528h.5V567h-.5zM270.5 508.5h.5V549h-.5zM271 492.5h.5V529h-.5zM271.5 499.5h.5V509.5h-.5zM272 469h.5V484.5h-.5zM272.5 458.5h.5V480.5h-.5zM273 449.5h.5V470h-.5zM273.5 445h.5V459.5h-.5zM274 444.5h.5V450.5h-.5zM274.5 444.5h.5V454.5h-.5zM275 446.5h.5V464.5h-.5zM275.5 453.5h.5V475h-.5zM276 463.5h.5V486.5h-.5zM276.5 474h.5V479h-.5zM277 492.5h.5V518.5h-.5zM277.5 499.5h.5V538.5h-.5zM278 517.5h.5V558h-.5zM278.5 537.5h.5V574h-.5zM279 557h.5V564h-.5zM279.5 579.5h.5V597h-.5zM280 585h.5V607.5h-.5zM280.5 596h.5V616h-.5zM281 606.5h.5V620h-.5zM281.5 615h.5V620.5h-.5zM282 609.5h.5V620.5h-.5zM282.5 599.5h.5V618h-.5zM283 589h.5V610.5h-.5zM283.5 577.5h.5V600.5h-.5zM284 587h.5V590h-.5zM284.5 545h.5V573.5h-.5zM285 524.5h.5V564h-.5zM285.5 505.5h.5V546h-.5zM286 490h.5V525.5h-.5zM286.5 502h.5V506.5h-.5zM287 467h.5V486.5h-.5zM287.5 457h.5V479h-.5zM288 448.5h.5V468h-.5zM288.5 445h.5V458h-.5zM289 444.5h.5V449.5h-.5zM289.5 444.5h.5V456h-.5zM290 447.5h.5V466h-.5zM290.5 455h.5V476.5h-.5zM291 465h.5V488.5h-.5zM291.5 475.5h.5V477.5h-.5zM292 490.5h.5V521.5h-.5zM292.5 502h.5V542h-.5zM293 520.5h.5V561h-.5zM293.5 541h.5V576h-.5zM294 560h.5V561.5h-.5zM294.5 577h.5V598.5h-.5zM295 587h.5V609h-.5zM295.5 597.5h.5V617h-.5zM296 608h.5V620.5h-.5zM296.5 616h.5V620.5h-.5zM297 608h.5V620.5h-.5zM297.5 598h.5V617h-.5zM298 587.5h.5V609h-.5zM298.5 576.5h.5V599h-.5zM299 560.5h.5V561h-.5zM299.5 542h.5V575.5h-.5zM300 521.5h.5V561.5h-.5zM300.5 503h.5V543h-.5zM301 490h.5V522.5h-.5zM301.5 476h.5V477h-.5zM302 465.5h.5V489h-.5zM302.5 455.5h.5V477h-.5zM303 447.5h.5V466.5h-.5zM303.5 444.5h.5V456.5h-.5zM304 444.5h.5V449h-.5zM304.5 444.5h.5V457.5h-.5zM305 448h.5V468h-.5zM305.5 456.5h.5V478.5h-.5zM306 467h.5V487h-.5zM306.5 503h.5V506h-.5zM307 489.5h.5V525h-.5zM307.5 505h.5V545h-.5zM308 524h.5V563.5h-.5zM308.5 544h.5V574h-.5zM309 587h.5V589.5h-.5zM309.5 577h.5V600.5h-.5zM310 588.5h.5V610.5h-.5zM310.5 599.5h.5V618h-.5zM311 609.5h.5V620.5h-.5zM311.5 615h.5V620.5h-.5zM312 606.5h.5V620h-.5zM312.5 596.5h.5V616h-.5zM313 585.5h.5V607.5h-.5zM313.5 579h.5V597.5h-.5zM314 558h.5V563.5h-.5zM314.5 538.5h.5V574.5h-.5zM315 518h.5V559h-.5zM315.5 500h.5V539.5h-.5zM316 492h.5V519h-.5zM316.5 474.5h.5V478.5h-.5zM317 464h.5V487h-.5zM317.5 454h.5V475.5h-.5zM318 446.5h.5V465h-.5zM318.5 444.5h.5V455h-.5zM319 444.5h.5V450.5h-.5zM319.5 445h.5V459h-.5zM320 449.5h.5V469.5h-.5zM320.5 458h.5V480h-.5zM321 468.5h.5V485h-.5zM321.5 500.5h.5V508.5h-.5zM322 491.5h.5V528h-.5zM322.5 507.5h.5V548.5h-.5zM323 527h.5V566h-.5zM323.5 547.5h.5V572h-.5zM324 585.5h.5V591.5h-.5zM324.5 579h.5V602h-.5zM325 590.5h.5V612h-.5zM325.5 601h.5V618.5h-.5zM326 611h.5V620.5h-.5zM326.5 614h.5V620.5h-.5zM327 605h.5V620h-.5zM327.5 594.5h.5V615h-.5zM328 584h.5V606h-.5zM328.5 581h.5V595.5h-.5zM329 555h.5V566h-.5zM329.5 535.5h.5V572h-.5zM330 514h.5V556h-.5zM330.5 495.5h.5V536.5h-.5zM331 492h.5V515h-.5zM331.5 469.5h.5V477.5h-.5zM332 458.5h.5V482h-.5zM332.5 448h.5V470.5h-.5zM333 441h.5V459.5h-.5zM333.5 440h.5V449h-.5zM334 440h.5V447h-.5zM334.5 440.5h.5V456.5h-.5zM335 446h.5V467.5h-.5zM335.5 455.5h.5V479h-.5zM336 466.5h.5V480.5h-.5zM336.5 496h.5V510.5h-.5zM337 492h.5V531.5h-.5zM337.5 509.5h.5V552.5h-.5zM338 530.5h.5V570.5h-.5zM338.5 551.5h.5V571.5h-.5zM339 586.5h.5V596.5h-.5zM339.5 584h.5V607.5h-.5zM340 595.5h.5V617.5h-.5zM340.5 606.5h.5V624h-.5zM341 616.5h.5V625h-.5zM341.5 617.5h.5V625h-.5zM342 607.5h.5V624.5h-.5zM342.5 596.5h.5V618.5h-.5zM343 585h.5V608.5h-.5zM343.5 585.5h.5V597.5h-.5zM344 553h.5V570.5h-.5zM344.5 532h.5V572h-.5zM345 511h.5V554h-.5zM345.5 493h.5V533h-.5zM346 494.5h.5V512h-.5zM346.5 467.5h.5V479.5h-.5zM347 456.5h.5V480h-.5zM347.5 446.5h.5V468.5h-.5zM348 440.5h.5V457.5h-.5zM348.5 440h.5V447.5h-.5zM349 440h.5V448.5h-.5zM349.5 441h.5V458.5h-.5zM350 447.5h.5V469.5h-.5zM350.5 457.5h.5V481h-.5zM351 468.5h.5V478.5h-.5zM351.5 493.5h.5V513.5h-.5zM352 494.5h.5V534.5h-.5zM352.5 512.5h.5V555.5h-.5zM353 533.5h.5V573h-.5zM353.5 554.5h.5V569h-.5zM354 584.5h.5V598.5h-.5zM354.5 586h.5V609.5h-.5zM355 597.5h.5V619h-.5zM355.5 608.5h.5V624.5h-.5zM356 618h.5V625h-.5zM356.5 616h.5V625h-.5zM357 605.5h.5V624h-.5zM357.5 594.5h.5V617h-.5zM358 583h.5V606.5h-.5zM358.5 587.5h.5V595.5h-.5zM359 550h.5V573h-.5zM359.5 528.5h.5V569.5h-.5zM360 508h.5V551h-.5zM360.5 490.5h.5V529.5h-.5zM361 497h.5V509h-.5zM361.5 466h.5V481.5h-.5zM362 455h.5V478h-.5zM362.5 445.5h.5V467h-.5zM363 440h.5V456h-.5zM363.5 440h.5V446.5h-.5zM364 440h.5V450h-.5zM364.5 441.5h.5V460h-.5zM365 449h.5V471.5h-.5zM365.5 459h.5V483h-.5zM366 470.5h.5V476.5h-.5zM366.5 491h.5V517h-.5zM367 497h.5V538h-.5zM367.5 516h.5V558.5h-.5zM368 537h.5V575.5h-.5zM368.5 557.5h.5V566.5h-.5zM369 582.5h.5V600h-.5zM369.5 587.5h.5V611h-.5zM370 599h.5V620.5h-.5zM370.5 610h.5V625h-.5zM371 619.5h.5V625h-.5zM371.5 614.5h.5V625h-.5zM372 604h.5V623h-.5zM372.5 593h.5V615.5h-.5zM373 580.5h.5V605h-.5zM373.5 589.5h.5V594h-.5zM374 546.5h.5V575.5h-.5zM374.5 525h.5V566.5h-.5zM375 505h.5V547.5h-.5zM375.5 488.5h.5V526h-.5zM376 500h.5V506h-.5zM376.5 464h.5V483.5h-.5zM377 453h.5V476.5h-.5zM377.5 444h.5V465h-.5zM378 440h.5V454h-.5zM378.5 440h.5V445h-.5zM379 440h.5V451.5h-.5zM379.5 442.5h.5V462h-.5zM380 450.5h.5V473h-.5zM380.5 461h.5V485.5h-.5zM381 472h.5V474.5h-.5zM381.5 488.5h.5V520h-.5zM382 499.5h.5V541.5h-.5zM382.5 519h.5V561.5h-.5zM383 540.5h.5V578h-.5zM383.5 560.5h.5V564h-.5zM384 580.5h.5V602h-.5zM384.5 589.5h.5V612.5h-.5zM385 601h.5V621.5h-.5zM385.5 611.5h.5V625h-.5zM386 620.5h.5V625h-.5zM386.5 613h.5V625h-.5zM387 602h.5V622h-.5zM387.5 591h.5V614h-.5zM388 578.5h.5V603h-.5zM388.5 591h.5V592h-.5zM389 543h.5V577.5h-.5zM389.5 521.5h.5V564h-.5zM390 502h.5V544h-.5zM390.5 487h.5V522.5h-.5zM391 502.5h.5V503h-.5zM391.5 462h.5V486h-.5zM392 451.5h.5V474.5h-.5zM392.5 443h.5V463h-.5zM393 440h.5V452.5h-.5zM393.5 440h.5V444.5h-.5zM394 440h.5V453h-.5zM394.5 443.5h.5V463.5h-.5zM395 452h.5V475h-.5zM395.5 462.5h.5V485.5h-.5zM396 502h.5V503.5h-.5zM396.5 486.5h.5V523.5h-.5zM397 502.5h.5V545h-.5zM397.5 522.5h.5V564.5h-.5zM398 544h.5V577h-.5zM398.5 591h.5V592.5h-.5zM399 579h.5V603.5h-.5zM399.5 591.5h.5V614.5h-.5zM400 602.5h.5V622.5h-.5zM400.5 613.5h.5V625h-.5zM401 620h.5V625h-.5zM401.5 611.5h.5V625h-.5zM402 600.5h.5V621h-.5zM402.5 589h.5V612.5h-.5zM403 581h.5V601.5h-.5zM403.5 560h.5V564.5h-.5zM404 540h.5V577.5h-.5zM404.5 518.5h.5V561h-.5zM405 499h.5V541h-.5zM405.5 489h.5V519.5h-.5zM406 471.5h.5V475h-.5zM406.5 460.5h.5V485h-.5zM407 450h.5V472.5h-.5zM407.5 442h.5V461.5h-.5zM408 440h.5V451h-.5zM408.5 440h.5V445.5h-.5zM409 440h.5V454.5h-.5zM409.5 444.5h.5V465.5h-.5zM410 453.5h.5V477h-.5zM410.5 464.5h.5V483h-.5zM411 499h.5V506.5h-.5zM411.5 489h.5V527h-.5zM412 505.5h.5V548.5h-.5zM412.5 526h.5V567.5h-.5zM413 547.5h.5V575h-.5zM413.5 589h.5V594.5h-.5zM414 581h.5V605.5h-.5zM414.5 593.5h.5V616h-.5zM415 604.5h.5V623.5h-.5zM415.5 615h.5V625h-.5zM416 619h.5V625h-.5zM416.5 609.5h.5V625h-.5zM417 598.5h.5V620h-.5zM417.5 587h.5V610.5h-.5zM418 583h.5V599.5h-.5zM418.5 557h.5V567h-.5zM419 536.5h.5V575h-.5zM419.5 515h.5V558h-.5zM420 496.5h.5V537.5h-.5zM420.5 491.5h.5V516h-.5zM421 470h.5V477h-.5zM421.5 458.5h.5V482.5h-.5zM422 448.5h.5V471h-.5zM422.5 441.5h.5V459.5h-.5zM423 440h.5V449.5h-.5zM423.5 440h.5V446.5h-.5zM424 440h.5V456h-.5zM424.5 445.5h.5V467h-.5zM425 455h.5V478.5h-.5zM425.5 466h.5V481h-.5zM426 496.5h.5V509.5h-.5zM426.5 491h.5V530.5h-.5zM427 508.5h.5V551.5h-.5zM427.5 529.5h.5V570h-.5zM428 550.5h.5V572.5h-.5zM428.5 587h.5V596h-.5zM429 583.5h.5V607h-.5zM429.5 595h.5V617.5h-.5zM430 606h.5V624h-.5zM430.5 616.5h.5V625h-.5zM431 617.5h.5V625h-.5zM431.5 608h.5V624.5h-.5zM432 597h.5V618.5h-.5zM432.5 585.5h.5V609h-.5zM433 585h.5V598h-.5zM433.5 554h.5V570h-.5zM434 533h.5V572.5h-.5zM434.5 512h.5V555h-.5zM435 493.5h.5V534h-.5zM435.5 494h.5V513h-.5zM436 468h.5V479h-.5zM436.5 457h.5V480.5h-.5zM437 447h.5V469h-.5zM437.5 440.5h.5V458h-.5zM438 440h.5V448h-.5zM438.5 440h.5V448h-.5zM439 440.5h.5V458h-.5zM439.5 447h.5V469h-.5zM440 457h.5V480.5h-.5zM440.5 468h.5V479h-.5zM441 494h.5V513h-.5zM441.5 493.5h.5V534h-.5zM442 512h.5V555h-.5zM442.5 533h.5V572.5h-.5zM443 554h.5V570h-.5zM443.5 585h.5V598h-.5zM444 585.5h.5V609h-.5zM444.5 597h.5V618.5h-.5zM445 608h.5V624.5h-.5zM445.5 617.5h.5V625h-.5zM446 616.5h.5V625h-.5zM446.5 606h.5V624h-.5zM447 595h.5V617.5h-.5zM447.5 583.5h.5V607h-.5zM448 587h.5V596h-.5zM448.5 550.5h.5V572.5h-.5zM449 529.5h.5V570h-.5zM449.5 508.5h.5V551.5h-.5zM450 491h.5V530.5h-.5zM450.5 496.5h.5V509.5h-.5zM451 466h.5V481h-.5zM451.5 455h.5V478.5h-.5zM452 445.5h.5V467h-.5zM452.5 440h.5V456h-.5zM453 440h.5V446.5h-.5zM453.5 440h.5V449.5h-.5zM454 441.5h.5V459.5h-.5zM454.5 448.5h.5V471h-.5zM455 458.5h.5V482.5h-.5zM455.5 470h.5V477h-.5zM456 491.5h.5V516h-.5zM456.5 496.5h.5V537.5h-.5zM457 515h.5V558h-.5zM457.5 536.5h.5V575h-.5zM458 557h.5V567h-.5zM458.5 583h.5V599.5h-.5zM459 587h.5V610.5h-.5zM459.5 598.5h.5V620h-.5zM460 609.5h.5V625h-.5zM460.5 619h.5V625h-.5zM461 615h.5V625h-.5zM461.5 604.5h.5V623.5h-.5zM462 593.5h.5V616h-.5zM462.5 581h.5V605.5h-.5zM463 589h.5V594.5h-.5zM463.5 547.5h.5V575h-.5zM464 526h.5V567.5h-.5zM464.5 505.5h.5V548.5h-.5zM465 489h.5V527h-.5zM465.5 499h.5V506.5h-.5zM466 464.5h.5V483h-.5zM466.5 453.5h.5V477h-.5zM467 444.5h.5V465.5h-.5zM467.5 440h.5V454.5h-.5zM468 440h.5V445.5h-.5zM468.5 440h.5V451h-.5zM469 442h.5V461.5h-.5zM469.5 450h.5V472.5h-.5zM470 460.5h.5V485h-.5zM470.5 471.5h.5V475h-.5zM471 489h.5V519.5h-.5zM471.5 499h.5V541h-.5zM472 518.5h.5V561h-.5zM472.5 540h.5V577.5h-.5zM473 560h.5V564.5h-.5zM473.5 581h.5V601.5h-.5zM474 589h.5V612.5h-.5zM474.5 600.5h.5V621h-.5zM475 611.5h.5V625h-.5zM475.5 620h.5V625h-.5zM476 613.5h.5V625h-.5zM476.5 602.5h.5V622.5h-.5zM477 591.5h.5V614.5h-.5zM477.5 579h.5V603.5h-.5zM478 591h.5V592.5h-.5zM478.5 544h.5V577h-.5zM479 523.5h.5V564.5h-.5zM479.5 505.5h.5V545h-.5zM480 491h.5V524.5h-.5zM480.5 505h.5V506.5h-.5zM481 469.5h.5V490h-.5zM481.5 460h.5V481h-.5zM482 452h.5V470.5h-.5zM482.5 449h.5V461h-.5zM483 449h.5V453h-.5zM483.5 449h.5V460.5h-.5zM484 452h.5V470h-.5zM484.5 459.5h.5V480.5h-.5zM485 469h.5V490.5h-.5zM485.5 505.5h.5V506h-.5zM486 491.5h.5V523.5h-.5zM486.5 505h.5V543h-.5zM487 522.5h.5V560.5h-.5zM487.5 542h.5V573h-.5zM488 585.5h.5V586h-.5zM488.5 574h.5V596h-.5zM489 585h.5V606h-.5zM489.5 595h.5V613.5h-.5zM490 605h.5V616h-.5zM490.5 611.5h.5V616h-.5zM491 603.5h.5V616h-.5zM491.5 594h.5V612.5h-.5zM492 584h.5V604.5h-.5zM492.5 575.5h.5V595h-.5zM493 558h.5V560.5h-.5zM493.5 540h.5V573.5h-.5zM494 520.5h.5V559h-.5zM494.5 503h.5V541h-.5zM495 493h.5V521.5h-.5zM495.5 478h.5V480.5h-.5zM496 468h.5V490h-.5zM496.5 458.5h.5V479h-.5zM497 451.5h.5V469h-.5zM497.5 449h.5V459.5h-.5zM498 449h.5V454h-.5zM498.5 449h.5V462h-.5zM499 453h.5V472h-.5zM499.5 461h.5V482h-.5zM500 471h.5V488.5h-.5zM500.5 503h.5V508.5h-.5zM501 492.5h.5V527h-.5zM501.5 507.5h.5V546h-.5zM502 526h.5V563.5h-.5zM502.5 545h.5V571h-.5zM503 583.5h.5V587.5h-.5zM503.5 576h.5V597.5h-.5zM504 586.5h.5V607h-.5zM504.5 596.5h.5V614h-.5zM505 606h.5V616h-.5zM505.5 610.5h.5V616h-.5zM506 602h.5V616h-.5zM506.5 592.5h.5V611.5h-.5zM507 582h.5V603h-.5zM507.5 577.5h.5V593.5h-.5zM508 555h.5V563h-.5zM508.5 536.5h.5V571.5h-.5zM509 517.5h.5V556h-.5zM509.5 500.5h.5V537.5h-.5zM510 495h.5V518.5h-.5zM510.5 476.5h.5V482h-.5zM511 466.5h.5V488h-.5zM511.5 457h.5V477.5h-.5zM512 450.5h.5V467.5h-.5zM512.5 449h.5V458h-.5zM513 449h.5V455h-.5zM513.5 449.5h.5V463.5h-.5zM514 454h.5V473.5h-.5zM514.5 462.5h.5V483.5h-.5zM515 472.5h.5V486.5h-.5zM515.5 500.5h.5V511.5h-.5zM516 495h.5V530h-.5zM516.5 510.5h.5V549h-.5zM517 529h.5V565.5h-.5zM517.5 548h.5V569h-.5zM518 582h.5V589.5h-.5zM518.5 577.5h.5V599.5h-.5zM519 588.5h.5V608.5h-.5zM519.5 598.5h.5V614.5h-.5zM520 607.5h.5V616h-.5zM520.5 609.5h.5V616h-.5zM521 600.5h.5V615.5h-.5zM521.5 591h.5V610.5h-.5zM522 580.5h.5V601.5h-.5zM522.5 579.5h.5V592h-.5zM523 552.5h.5V565.5h-.5zM523.5 533.5h.5V569h-.5zM524 514.5h.5V553.5h-.5zM524.5 498h.5V534.5h-.5zM525 497.5h.5V515.5h-.5zM525.5 475h.5V484h-.5zM526 465h.5V486.5h-.5zM526.5 456h.5V476h-.5zM527 450h.5V466h-.5zM527.5 449h.5V457h-.5zM528 449h.5V456h-.5zM528.5 449.5h.5V465h-.5zM529 455h.5V475h-.5zM529.5 464h.5V485.5h-.5zM530 474h.5V485h-.5zM530.5 498.5h.5V514h-.5zM531 497h.5V533h-.5zM531.5 513h.5V552h-.5zM532 532h.5V568h-.5zM532.5 551h.5V566.5h-.5zM533 580h.5V591h-.5zM533.5 579.5h.5V601h-.5zM534 590h.5V610h-.5zM534.5 600h.5V615.5h-.5zM535 609h.5V616h-.5zM535.5 608h.5V616h-.5zM536 599h.5V615h-.5zM536.5 589h.5V609h-.5zM537 578.5h.5V600h-.5zM537.5 581h.5V590h-.5zM538 549.5h.5V567.5h-.5zM538.5 530.5h.5V567h-.5zM539 511.5h.5V550.5h-.5zM539.5 496h.5V531.5h-.5zM540 499.5h.5V512.5h-.5zM540.5 473h.5V485.5h-.5zM541 463.5h.5V484.5h-.5zM541.5 454.5h.5V474h-.5zM542 449.5h.5V464.5h-.5zM542.5 449h.5V455.5h-.5zM543 449h.5V457.5h-.5zM543.5 450.5h.5V466.5h-.5zM544 456.5h.5V476.5h-.5zM544.5 465.5h.5V487.5h-.5zM545 475.5h.5V483h-.5zM545.5 496h.5V517h-.5zM546 499.5h.5V536h-.5zM546.5 516h.5V554.5h-.5zM547 535h.5V570h-.5zM547.5 553.5h.5V564.5h-.5zM548 578.5h.5V592.5h-.5zM548.5 581.5h.5V602.5h-.5zM549 591.5h.5V611h-.5zM549.5 601.5h.5V615.5h-.5zM550 610h.5V616h-.5zM550.5 607h.5V616h-.5zM551 597.5h.5V614.5h-.5zM551.5 587.5h.5V608h-.5zM552 577h.5V598.5h-.5zM552.5 583h.5V588.5h-.5zM553 546.5h.5V570h-.5zM553.5 527.5h.5V564.5h-.5zM554 508.5h.5V547.5h-.5zM554.5 493h.5V528.5h-.5zM555 501.5h.5V509.5h-.5zM555.5 471h.5V487h-.5zM556 461h.5V482h-.5zM556.5 452.5h.5V472h-.5zM557 448h.5V462h-.5zM557.5 448h.5V453.5h-.5zM558 448h.5V458h-.5zM558.5 450h.5V467.5h-.5zM559 457h.5V477.5h-.5zM559.5 466.5h.5V488.5h-.5zM560 476.5h.5V480.5h-.5zM560.5 493.5h.5V520h-.5zM561 501.5h.5V539.5h-.5zM561.5 519h.5V558h-.5zM562 538.5h.5V573h-.5zM562.5 557h.5V562h-.5zM563 577h.5V595h-.5zM563.5 583.5h.5V605h-.5zM564 594h.5V613h-.5zM564.5 604h.5V617h-.5zM565 612h.5V617h-.5zM565.5 606.5h.5V617h-.5zM566 597h.5V614.5h-.5zM566.5 586.5h.5V607.5h-.5zM567 575.5h.5V598h-.5zM567.5 585h.5V587.5h-.5zM568 543.5h.5V572.5h-.5zM568.5 524h.5V562.5h-.5zM569 506h.5V544.5h-.5zM569.5 491h.5V525h-.5zM570 504h.5V507h-.5zM570.5 469h.5V489h-.5zM571 459.5h.5V480.5h-.5zM571.5 451.5h.5V470h-.5zM572 448h.5V460.5h-.5zM572.5 448h.5V452.5h-.5zM573 448h.5V459.5h-.5zM573.5 450.5h.5V469h-.5zM574 458.5h.5V479h-.5zM574.5 468h.5V490.5h-.5zM575 478h.5V479h-.5zM575.5 491.5h.5V523h-.5zM576 504h.5V542.5h-.5zM576.5 522h.5V560.5h-.5zM577 541.5h.5V574h-.5zM578 575h.5V596.5h-.5zM578.5 585.5h.5V606.5h-.5zM579 595.5h.5V614h-.5zM579.5 605.5h.5V617h-.5zM580 613h.5V617h-.5zM580.5 605h.5V617h-.5zM581 595h.5V614h-.5zM581.5 585h.5V606h-.5zM582 575.5h.5V596h-.5zM582.5 559h.5V560.5h-.5zM583 540.5h.5V574.5h-.5zM583.5 521h.5V560h-.5zM584 503h.5V541.5h-.5zM584.5 492h.5V522h-.5zM585 478h.5V479.5h-.5zM585.5 467.5h.5V490h-.5zM586 458h.5V479h-.5zM586.5 450.5h.5V468.5h-.5zM587 448h.5V459h-.5zM587.5 448h.5V452.5h-.5zM588 448h.5V460.5h-.5zM588.5 451.5h.5V470.5h-.5zM589 459.5h.5V481h-.5zM589.5 469.5h.5V488.5h-.5zM590 503.5h.5V507.5h-.5zM590.5 491.5h.5V526h-.5zM591 506.5h.5V545.5h-.5zM591.5 525h.5V563h-.5zM592 544.5h.5V572h-.5zM592.5 585h.5V588h-.5zM593 576h.5V598h-.5zM593.5 587h.5V608h-.5zM594 597h.5V615h-.5zM594.5 607h.5V617h-.5zM595 612h.5V617h-.5zM595.5 603.5h.5V617h-.5zM596 593.5h.5V613h-.5zM596.5 583h.5V604.5h-.5zM597 577.5h.5V594.5h-.5zM597.5 556h.5V563h-.5zM598 537.5h.5V572.5h-.5zM598.5 518h.5V557h-.5zM599 500.5h.5V538.5h-.5zM599.5 494h.5V519h-.5zM600 476h.5V481h-.5zM600.5 466h.5V488h-.5zM601 456.5h.5V477h-.5zM601.5 449.5h.5V467h-.5zM602 448h.5V457.5h-.5zM602.5 448h.5V453.5h-.5zM603 448h.5V462.5h-.5zM603.5 452.5h.5V472.5h-.5zM604 461.5h.5V482.5h-.5zM604.5 471.5h.5V486.5h-.5zM605 501h.5V510.5h-.5zM605.5 494h.5V529h-.5zM606 509.5h.5V548.5h-.5zM606.5 528h.5V565.5h-.5zM607 547.5h.5V570h-.5zM607.5 583h.5V589.5h-.5zM608 578h.5V600h-.5zM608.5 588.5h.5V609h-.5zM609 599h.5V615.5h-.5zM609.5 608h.5V617h-.5zM610 610.5h.5V617h-.5zM610.5 602h.5V616.5h-.5zM611 592h.5V611.5h-.5zM611.5 581.5h.5V603h-.5zM612 579.5h.5V593h-.5zM612.5 553.5h.5V565.5h-.5zM613 534.5h.5V570h-.5zM613.5 515h.5V554.5h-.5zM614 498.5h.5V535.5h-.5zM614.5 496h.5V516h-.5zM615 474.5h.5V483h-.5zM615.5 464.5h.5V486h-.5zM616 455h.5V475.5h-.5zM616.5 449h.5V465.5h-.5zM617 448h.5V456h-.5zM617.5 448h.5V455h-.5zM618 448.5h.5V464h-.5zM618.5 454h.5V474h-.5zM619 463h.5V484.5h-.5zM619.5 473h.5V484.5h-.5zM620 498.5h.5V513h-.5zM620.5 496h.5V532h-.5zM621 512h.5V551.5h-.5zM621.5 531h.5V568h-.5zM622 550.5h.5V567.5h-.5zM622.5 581.5h.5V591.5h-.5zM623 579.5h.5V601.5h-.5zM623.5 590.5h.5V610.5h-.5zM624 600.5h.5V616h-.5zM624.5 609.5h.5V617h-.5zM625 609.5h.5V617h-.5zM625.5 600.5h.5V616h-.5zM626 590.5h.5V610.5h-.5zM626.5 579.5h.5V601.5h-.5zM627 581.5h.5V591.5h-.5zM627.5 550.5h.5V567.5h-.5zM628 531.5h.5V568h-.5zM628.5 513h.5V551.5h-.5zM629 498h.5V532.5h-.5zM629.5 500.5h.5V514h-.5zM630 476h.5V487.5h-.5zM630.5 466.5h.5V487h-.5zM631 458h.5V477h-.5zM631.5 453h.5V467.5h-.5zM632 452.5h.5V459h-.5zM632.5 452.5h.5V460.5h-.5zM633 453.5h.5V469h-.5zM633.5 459.5h.5V478.5h-.5zM634 468h.5V489h-.5zM634.5 477.5h.5V485.5h-.5zM635 498.5h.5V517h-.5zM635.5 500h.5V535h-.5zM636 516h.5V553h-.5zM636.5 534h.5V568h-.5zM637 552h.5V563.5h-.5zM637.5 577h.5V589.5h-.5zM638 578.5h.5V599h-.5zM638.5 588.5h.5V607.5h-.5zM639 598h.5V612h-.5zM639.5 606.5h.5V612.5h-.5zM640 604h.5V612.5h-.5zM640.5 595h.5V611h-.5zM641 585.5h.5V605h-.5zM641.5 575.5h.5V596h-.5zM642 580.5h.5V586.5h-.5zM642.5 546.5h.5V568h-.5zM643 528.5h.5V563.5h-.5zM643.5 510.5h.5V547.5h-.5zM644 496h.5V529.5h-.5zM644.5 502.5h.5V511.5h-.5zM645 474.5h.5V489h-.5zM645.5 465h.5V485.5h-.5zM646 457h.5V475.5h-.5zM646.5 453h.5V466h-.5zM647 452.5h.5V458h-.5zM647.5 452.5h.5V461.5h-.5zM648 454h.5V470.5h-.5zM648.5 460.5h.5V480h-.5zM649 469.5h.5V490.5h-.5zM649.5 479h.5V484h-.5zM650 496h.5V520h-.5zM650.5 502.5h.5V538h-.5zM651 519h.5V556h-.5zM651.5 537h.5V570h-.5zM652 555h.5V561h-.5zM652.5 575h.5V591h-.5zM653 580.5h.5V600.5h-.5zM653.5 590h.5V608.5h-.5zM654 599.5h.5V612.5h-.5zM654.5 607.5h.5V612.5h-.5zM655 602.5h.5V612.5h-.5zM655.5 593.5h.5V610.5h-.5zM656 584h.5V603.5h-.5zM656.5 573.5h.5V594.5h-.5zM657 582h.5V585h-.5zM657.5 544h.5V570h-.5zM658 525.5h.5V561.5h-.5zM658.5 508h.5V545h-.5zM659 494h.5V526.5h-.5zM659.5 505h.5V509h-.5zM660 473h.5V491h-.5zM660.5 463.5h.5V484h-.5zM661 456h.5V474h-.5zM661.5 452.5h.5V464.5h-.5zM662 452.5h.5V457h-.5zM662.5 452.5h.5V463h-.5zM663 455h.5V472h-.5zM663.5 462h.5V482h-.5zM664 471h.5V492.5h-.5zM664.5 481h.5V482.5h-.5zM665 494h.5V522.5h-.5zM665.5 505h.5V541h-.5zM666 521.5h.5V558.5h-.5zM666.5 540h.5V572h-.5zM667 557.5h.5V559h-.5zM667.5 573h.5V592.5h-.5zM668 582h.5V602h-.5zM668.5 591.5h.5V609.5h-.5zM669 601h.5V612.5h-.5zM669.5 608.5h.5V612.5h-.5zM670 601.5h.5V612.5h-.5zM670.5 592h.5V609.5h-.5zM671 582.5h.5V602.5h-.5zM671.5 573h.5V593h-.5zM672.5 541h.5V572h-.5zM673 522.5h.5V559h-.5zM673.5 505.5h.5V542h-.5zM674 493.5h.5V523.5h-.5zM674.5 481h.5V482h-.5zM675 471.5h.5V492.5h-.5zM675.5 462.5h.5V482h-.5zM676 455h.5V472.5h-.5zM676.5 452.5h.5V463.5h-.5zM677 452.5h.5V457h-.5zM677.5 452.5h.5V464.5h-.5zM678 456h.5V473.5h-.5zM678.5 463.5h.5V483.5h-.5zM679 472.5h.5V491.5h-.5zM679.5 505.5h.5V508.5h-.5zM680 493.5h.5V525.5h-.5zM680.5 507.5h.5V544h-.5zM681 524.5h.5V561h-.5zM681.5 543h.5V570.5h-.5zM682 582.5h.5V584.5h-.5zM682.5 573h.5V594h-.5zM683 583.5h.5V603.5h-.5zM683.5 593h.5V610h-.5zM684 602.5h.5V612.5h-.5zM684.5 607.5h.5V612.5h-.5zM685 600h.5V612.5h-.5zM685.5 590.5h.5V608.5h-.5zM686 581h.5V601h-.5zM686.5 574.5h.5V591.5h-.5zM687 555.5h.5V560.5h-.5zM687.5 538h.5V570.5h-.5zM688 519.5h.5V556.5h-.5zM688.5 503h.5V539h-.5zM689 495.5h.5V520.5h-.5zM689.5 479.5h.5V483.5h-.5zM690 470h.5V491h-.5zM690.5 461h.5V480.5h-.5zM691 454.5h.5V471h-.5zM691.5 452.5h.5V462h-.5zM692 452.5h.5V458h-.5zM692.5 453h.5V466h-.5zM693 457h.5V475h-.5zM693.5 465h.5V485h-.5zM694 474h.5V489.5h-.5zM694.5 503.5h.5V511h-.5zM695 495.5h.5V528.5h-.5zM695.5 510h.5V547h-.5zM696 527.5h.5V563h-.5zM696.5 546h.5V568.5h-.5zM697 580.5h.5V586h-.5zM697.5 575h.5V595.5h-.5zM698 585h.5V604.5h-.5zM698.5 594.5h.5V611h-.5zM699 603.5h.5V612.5h-.5zM699.5 606.5h.5V612.5h-.5zM700 598.5h.5V612h-.5zM700.5 589h.5V607.5h-.5zM701 579h.5V599.5h-.5zM701.5 576.5h.5V590h-.5zM702 553h.5V563h-.5zM702.5 535h.5V568.5h-.5zM703 516.5h.5V554h-.5zM703.5 500.5h.5V536h-.5zM704 497.5h.5V517.5h-.5zM704.5 478h.5V485h-.5zM705 468.5h.5V489.5h-.5zM705.5 459.5h.5V479h-.5zM706 454h.5V469.5h-.5zM706.5 452.5h.5V460.5h-.5zM707 452.5h.5V459h-.5zM707.5 453h.5V467.5h-.5zM708 458h.5V477h-.5zM708.5 466.5h.5V486.5h-.5zM709 476h.5V487.5h-.5zM709.5 501h.5V513.5h-.5zM710 497.5h.5V531.5h-.5zM710.5 512.5h.5V549.5h-.5zM711 530.5h.5V565.5h-.5zM711.5 548.5h.5V566h-.5zM712 579h.5V587.5h-.5zM712.5 576.5h.5V597h-.5zM713 586.5h.5V606h-.5zM713.5 596h.5V611.5h-.5zM714 605h.5V612.5h-.5zM714.5 605.5h.5V612.5h-.5zM715 597h.5V611.5h-.5zM715.5 587.5h.5V606.5h-.5zM716 577.5h.5V598h-.5zM716.5 578h.5V588.5h-.5zM717 550h.5V565h-.5zM717.5 532h.5V566.5h-.5zM718 514h.5V551h-.5zM718.5 498.5h.5V533h-.5zM719 500h.5V515h-.5zM719.5 476.5h.5V487h-.5zM720 467h.5V487.5h-.5zM720.5 458.5h.5V477.5h-.5zM721 453.5h.5V468h-.5zM721.5 452.5h.5V459.5h-.5zM722 452.5h.5V460h-.5zM722.5 453.5h.5V469h-.5zM723 459h.5V478.5h-.5zM723.5 468h.5V488.5h-.5zM724 477.5h.5V486h-.5zM724.5 499h.5V516.5h-.5zM725 499.5h.5V534.5h-.5zM725.5 515.5h.5V552.5h-.5zM726 533.5h.5V567.5h-.5zM726.5 551.5h.5V564h-.5zM727 577.5h.5V589h-.5zM727.5 578.5h.5V598.5h-.5zM728 588h.5V607h-.5zM728.5 597.5h.5V612h-.5zM729 606h.5V612.5h-.5zM729.5 604.5h.5V612.5h-.5zM730 595.5h.5V611h-.5zM730.5 586h.5V605.5h-.5zM731 575.5h.5V596.5h-.5zM731.5 580h.5V587h-.5zM732 547.5h.5V567.5h-.5zM732.5 529h.5V564.5h-.5zM733 511h.5V548.5h-.5zM733.5 496.5h.5V530h-.5zM734 502h.5V512h-.5zM734.5 475h.5V488.5h-.5zM735 465.5h.5V486h-.5zM735.5 457.5h.5V476h-.5zM736 453h.5V466.5h-.5zM736.5 452.5h.5V458.5h-.5zM737 452.5h.5V461.5h-.5zM737.5 454h.5V470.5h-.5zM738 460.5h.5V480h-.5zM738.5 469.5h.5V490h-.5zM739 479h.5V484.5h-.5zM739.5 496.5h.5V519h-.5zM740 502h.5V537.5h-.5zM740.5 518h.5V555h-.5zM741 536.5h.5V569.5h-.5zM741.5 554h.5V561.5h-.5zM742 575.5h.5V591h-.5zM742.5 580h.5V600h-.5zM743 590h.5V608h-.5zM743.5 599h.5V612h-.5zM744 607h.5V612.5h-.5zM744.5 603h.5V612.5h-.5zM745 594h.5V610.5h-.5zM745.5 584.5h.5V604h-.5zM746 574h.5V595h-.5zM746.5 581.5h.5V585.5h-.5zM747 544.5h.5V569.5h-.5zM747.5 526h.5V562h-.5zM748 508.5h.5V545.5h-.5zM748.5 494.5h.5V527h-.5zM749 504.5h.5V509.5h-.5zM749.5 473.5h.5V490.5h-.5zM750 464h.5V484h-.5zM750.5 456.5h.5V474.5h-.5zM751 452.5h.5V465h-.5zM751.5 452.5h.5V457.5h-.5zM752 452.5h.5V462.5h-.5zM752.5 455h.5V472h-.5zM753 461.5h.5V481.5h-.5zM753.5 471h.5V492h-.5zM754 480.5h.5V482.5h-.5zM754.5 494.5h.5V522h-.5zM755 504h.5V540.5h-.5zM755.5 521h.5V557.5h-.5zM756 539.5h.5V571.5h-.5zM756.5 556.5h.5V559.5h-.5zM757 573.5h.5V592.5h-.5zM757.5 581.5h.5V601.5h-.5zM758 591.5h.5V609h-.5zM758.5 600.5h.5V612.5h-.5zM759 608h.5V612.5h-.5zM759.5 601.5h.5V612.5h-.5zM760 592.5h.5V610h-.5zM760.5 583h.5V602.5h-.5zM761 572.5h.5V593.5h-.5zM761.5 583h.5V584h-.5zM762 541.5h.5V571.5h-.5zM762.5 523h.5V559.5h-.5zM763 506h.5V542.5h-.5zM763.5 493h.5V524h-.5zM764.5 472h.5V492h-.5zM765 462.5h.5V482.5h-.5zM765.5 455.5h.5V473h-.5zM766 452.5h.5V463.5h-.5zM766.5 452.5h.5V456.5h-.5zM767 452.5h.5V464h-.5zM767.5 455.5h.5V473.5h-.5zM768 463h.5V483h-.5zM768.5 472.5h.5V492h-.5zM769 506h.5V507.5h-.5zM769.5 493h.5V525h-.5zM770 506.5h.5V543.5h-.5zM770.5 524h.5V560h-.5zM771 542.5h.5V571h-.5zM771.5 582.5h.5V584h-.5zM772 572.5h.5V594h-.5zM772.5 583h.5V603h-.5zM773 593h.5V610h-.5zM773.5 602h.5V612.5h-.5zM774 608h.5V612.5h-.5zM774.5 600.5h.5V612.5h-.5zM775 591h.5V609h-.5zM775.5 581h.5V601.5h-.5zM776 574h.5V592h-.5zM776.5 556h.5V560h-.5zM777 538.5h.5V571h-.5zM777.5 532.5h.5V557h-.5z"/>
<path fill="#D95319" d="M32.5 510h.5V532h-.5zM33 410h.5V533h-.5zM33.5 410h.5V511h-.5zM34 410h.5V532.5h-.5zM34.5 410h.5V532h-.5zM35 517.5h.5V532h-.5zM35.5 515.5h.5V528h-.5zM36 512h.5V518.5h-.5zM36.5 505.5h.5V516.5h-.5zM37 496h.5V513h-.5zM37.5 485h.5V506.5h-.5zM38 472.5h.5V497h-.5zM38.5 460.5h.5V486h-.5zM39 449h.5V473.5h-.5zM39.5 440h.5V461.5h-.5zM40 433h.5V450h-.5zM40.5 430h.5V441h-.5zM41 429.5h.5V434h-.5zM41.5 429.5h.5V436h-.5zM42 430h.5V446h-.5zM42.5 435h.5V459.5h-.5zM43 445h.5V476.5h-.5zM43.5 458.5h.5V471h-.5zM44 487h.5V516h-.5zM44.5 494.5h.5V536.5h-.5zM45 515h.5V556h-.5zM45.5 535.5h.5V573.5h-.5zM46 555h.5V588h-.5zM46.5 572.5h.5V598.5h-.5zM47 587h.5V604h-.5zM47.5 597.5h.5V605.5h-.5zM48 602h.5V605.5h-.5zM48.5 596.5h.5V605.5h-.5zM49 588h.5V603h-.5zM49.5 577h.5V597.5h-.5zM50 572h.5V589h-.5zM50.5 549.5h.5V556.5h-.5zM51 534.5h.5V565h-.5zM51.5 519h.5V550.5h-.5zM52 504.5h.5V535.5h-.5zM52.5 491h.5V520h-.5zM53 479h.5V505.5h-.5zM53.5 469.5h.5V492h-.5zM54 463h.5V480h-.5zM54.5 459.5h.5V470.5h-.5zM55 458.5h.5V464h-.5zM55.5 458.5h.5V464.5h-.5zM56 459h.5V472h-.5zM56.5 463.5h.5V481h-.5zM57 471h.5V490h-.5zM57.5 480h.5V491h-.5zM58 503h.5V515h-.5zM58.5 500h.5V532h-.5zM59 514h.5V549h-.5zM59.5 531h.5V563.5h-.5zM60 548h.5V574.5h-.5zM60.5 562.5h.5V584h-.5zM61 573.5h.5V593h-.5zM61.5 583h.5V601h-.5zM62 592h.5V606h-.5zM62.5 600h.5V607h-.5zM63 600.5h.5V607h-.5zM63.5 592.5h.5V606h-.5zM64 583.5h.5V601.5h-.5zM64.5 574h.5V593.5h-.5zM65 575h.5V584.5h-.5zM65.5 548.5h.5V563h-.5zM66 532h.5V564h-.5zM66.5 515h.5V549.5h-.5zM67 500.5h.5V533h-.5zM67.5 489.5h.5V516h-.5zM68 480h.5V501.5h-.5zM68.5 471h.5V490.5h-.5zM69 463h.5V481h-.5zM69.5 458.5h.5V472h-.5zM70 458h.5V464h-.5zM70.5 458h.5V465h-.5zM71 458.5h.5V473h-.5zM71.5 464h.5V482h-.5zM72 472h.5V491.5h-.5zM72.5 481h.5V489h-.5zM73 501h.5V517.5h-.5zM73.5 502h.5V534.5h-.5zM74 516.5h.5V551.5h-.5zM74.5 533.5h.5V565.5h-.5zM75 550.5h.5V576.5h-.5zM75.5 564.5h.5V586h-.5zM76 575.5h.5V595h-.5zM76.5 585h.5V602.5h-.5zM77 594h.5V607h-.5zM77.5 601.5h.5V607.5h-.5zM78 600h.5V607.5h-.5zM78.5 591.5h.5V606.5h-.5zM79 582.5h.5V601h-.5zM79.5 573h.5V592.5h-.5zM80 577h.5V583.5h-.5zM80.5 546h.5V565.5h-.5zM81 529h.5V562h-.5zM81.5 512h.5V547h-.5zM82 498.5h.5V530h-.5zM82.5 487.5h.5V513h-.5zM83 478h.5V499.5h-.5zM83.5 469h.5V488.5h-.5zM84 461.5h.5V479h-.5zM84.5 457.5h.5V470h-.5zM85 457h.5V462.5h-.5zM85.5 457h.5V465.5h-.5zM86 458.5h.5V474h-.5zM86.5 464.5h.5V483h-.5zM87 473h.5V492.5h-.5zM87.5 482h.5V487h-.5zM88 498.5h.5V520h-.5zM88.5 503.5h.5V537.5h-.5zM89 519h.5V554h-.5zM89.5 536.5h.5V568h-.5zM90 553h.5V578.5h-.5zM90.5 567h.5V588h-.5zM91 577.5h.5V596.5h-.5zM91.5 587h.5V604.5h-.5zM92 595.5h.5V608h-.5zM92.5 603.5h.5V608h-.5zM93 599h.5V608h-.5zM93.5 590.5h.5V606.5h-.5zM94 581.5h.5V600h-.5zM94.5 571.5h.5V591.5h-.5zM95 579h.5V582.5h-.5zM95.5 543.5h.5V567.5h-.5zM96 526h.5V560.5h-.5zM96.5 509.5h.5V544.5h-.5zM97 496h.5V527h-.5zM97.5 485.5h.5V510.5h-.5zM98 476h.5V497h-.5zM98.5 467.5h.5V486.5h-.5zM99 460h.5V477h-.5zM99.5 456.5h.5V468.5h-.5zM100 456.5h.5V461h-.5zM100.5 456.5h.5V466h-.5zM101 458.5h.5V475h-.5zM101.5 465h.5V484h-.5zM102 474h.5V494h-.5zM102.5 483h.5V485h-.5zM103 496.5h.5V522.5h-.5zM103.5 505.5h.5V540.5h-.5zM104 521.5h.5V557h-.5zM104.5 539.5h.5V570h-.5zM105 556h.5V580.5h-.5zM105.5 569h.5V590h-.5zM106 579.5h.5V595h-.5zM106.5 589h.5V601.5h-.5zM107 594h.5V604.5h-.5zM107.5 600.5h.5V604.5h-.5zM108 594.5h.5V604.5h-.5zM108.5 586.5h.5V602h-.5zM109 577.5h.5V595.5h-.5zM109.5 568.5h.5V587.5h-.5zM110.5 540.5h.5V567.5h-.5zM111 524h.5V556.5h-.5zM111.5 508.5h.5V541.5h-.5zM112 496h.5V525h-.5zM112.5 486.5h.5V509.5h-.5zM113 478h.5V497h-.5zM113.5 469.5h.5V487.5h-.5zM114 463h.5V479h-.5zM114.5 460.5h.5V470.5h-.5zM115 460.5h.5V464.5h-.5zM115.5 460.5h.5V471h-.5zM116 463.5h.5V479.5h-.5zM116.5 470h.5V488h-.5zM117 478.5h.5V495.5h-.5zM117.5 508.5h.5V510.5h-.5zM118 497h.5V526h-.5zM118.5 509.5h.5V542.5h-.5zM119 525h.5V557.5h-.5zM119.5 541.5h.5V569.5h-.5zM120 556.5h.5V579h-.5zM120.5 568.5h.5V588h-.5zM121 578h.5V596h-.5zM121.5 587h.5V602.5h-.5zM122 595h.5V604.5h-.5zM122.5 600.5h.5V604.5h-.5zM123 593.5h.5V604.5h-.5zM123.5 585h.5V601.5h-.5zM124 576h.5V594.5h-.5zM124.5 570h.5V586h-.5zM125 553.5h.5V557.5h-.5zM125.5 538h.5V567h-.5zM126 521h.5V554.5h-.5zM126.5 506.5h.5V539h-.5zM127 494.5h.5V522h-.5zM127.5 485h.5V507.5h-.5zM128 476.5h.5V495.5h-.5zM128.5 468.5h.5V486h-.5zM129 462h.5V477.5h-.5zM129.5 460.5h.5V469.5h-.5zM130 460.5h.5V465h-.5zM130.5 460.5h.5V472.5h-.5zM131 464h.5V481h-.5zM131.5 471.5h.5V489.5h-.5zM132 480h.5V494h-.5zM132.5 506.5h.5V512.5h-.5zM133 498.5h.5V528.5h-.5zM133.5 511.5h.5V545h-.5zM134 527.5h.5V560h-.5zM134.5 544h.5V571.5h-.5zM135 559h.5V580.5h-.5zM135.5 570.5h.5V589h-.5zM136 579.5h.5V597.5h-.5zM136.5 588h.5V603h-.5zM137 596.5h.5V604.5h-.5zM137.5 599.5h.5V604.5h-.5zM138 592h.5V604.5h-.5zM138.5 583.5h.5V600.5h-.5zM139 574.5h.5V593h-.5zM139.5 572h.5V584.5h-.5zM140 551h.5V559.5h-.5zM140.5 535h.5V565.5h-.5zM141 518.5h.5V552h-.5zM141.5 504h.5V536h-.5zM142 493h.5V519.5h-.5zM142.5 483.5h.5V505h-.5zM143 475h.5V494h-.5zM143.5 467h.5V484.5h-.5zM144 461.5h.5V476h-.5zM144.5 460.5h.5V468h-.5zM145 460.5h.5V466h-.5zM145.5 461h.5V473.5h-.5zM146 465h.5V482h-.5zM146.5 472.5h.5V491h-.5zM147 481h.5V492.5h-.5zM147.5 504.5h.5V515h-.5zM148 500.5h.5V531h-.5zM148.5 514h.5V547.5h-.5zM149 530h.5V562h-.5zM149.5 546.5h.5V573h-.5zM150 561h.5V582h-.5zM150.5 572h.5V590.5h-.5zM151 581h.5V598.5h-.5zM151.5 589.5h.5V603.5h-.5zM152 597.5h.5V604.5h-.5zM152.5 598.5h.5V604.5h-.5zM153 590.5h.5V604h-.5zM153.5 582h.5V599.5h-.5zM154 573h.5V591.5h-.5zM154.5 573.5h.5V583h-.5zM155 548.5h.5V561.5h-.5zM155.5 532.5h.5V563.5h-.5zM156 516h.5V549.5h-.5zM156.5 502h.5V533.5h-.5zM157 491.5h.5V517h-.5zM157.5 482.5h.5V503h-.5zM158 473.5h.5V492.5h-.5zM158.5 466h.5V483.5h-.5zM159 461h.5V474.5h-.5zM159.5 460.5h.5V467h-.5zM160 460.5h.5V467h-.5zM160.5 461h.5V475h-.5zM161 466h.5V483.5h-.5zM161.5 474h.5V492.5h-.5zM162 482.5h.5V491h-.5zM162.5 502.5h.5V517.5h-.5zM163 502.5h.5V534h-.5zM163.5 516.5h.5V550h-.5zM164 533h.5V564h-.5zM164.5 549h.5V574.5h-.5zM165 563h.5V583.5h-.5zM165.5 573.5h.5V592h-.5zM166 582.5h.5V599.5h-.5zM166.5 591h.5V604h-.5zM167 598.5h.5V604.5h-.5zM167.5 597.5h.5V604.5h-.5zM168 589.5h.5V603.5h-.5zM168.5 581h.5V598.5h-.5zM169 571.5h.5V590.5h-.5zM169.5 575h.5V582h-.5zM170 546h.5V563.5h-.5zM170.5 530h.5V561.5h-.5zM171 513.5h.5V547h-.5zM171.5 500h.5V531h-.5zM172 490h.5V514.5h-.5zM172.5 481h.5V501h-.5zM173 472.5h.5V491h-.5zM173.5 465h.5V482h-.5zM174 461h.5V473.5h-.5zM174.5 460.5h.5V466h-.5zM175 460.5h.5V468.5h-.5zM175.5 461.5h.5V476.5h-.5zM176 467.5h.5V485h-.5zM176.5 475.5h.5V494h-.5zM177 484h.5V489.5h-.5zM177.5 500.5h.5V520h-.5zM178 504.5h.5V536.5h-.5zM178.5 519h.5V552.5h-.5zM179 535.5h.5V565.5h-.5zM179.5 551.5h.5V576h-.5zM180 564.5h.5V585h-.5zM180.5 575h.5V606.5h-.5zM181 584h.5V615.5h-.5zM181.5 605.5h.5V620h-.5zM182 614.5h.5V620.5h-.5zM182.5 610.5h.5V620.5h-.5zM183 600.5h.5V618.5h-.5zM183.5 590h.5V611.5h-.5zM184 578.5h.5V601.5h-.5zM184.5 586h.5V591h-.5zM185 546.5h.5V572.5h-.5zM185.5 526h.5V565.5h-.5zM186 506.5h.5V547.5h-.5zM186.5 491h.5V527h-.5zM187 478.5h.5V507.5h-.5zM187.5 468h.5V492h-.5zM188 457.5h.5V479.5h-.5zM188.5 449h.5V469h-.5zM189 445h.5V458.5h-.5zM189.5 444.5h.5V450h-.5zM190 444.5h.5V455.5h-.5zM190.5 447h.5V465.5h-.5zM191 454.5h.5V476h-.5zM191.5 464.5h.5V487.5h-.5zM192 475h.5V478h-.5zM192.5 491h.5V520.5h-.5zM193 501h.5V540.5h-.5zM193.5 519.5h.5V559.5h-.5zM194 539.5h.5V575h-.5zM194.5 558.5h.5V587h-.5zM195 574h.5V598h-.5zM195.5 586h.5V608h-.5zM196 597h.5V616.5h-.5zM196.5 607h.5V620.5h-.5zM197 615.5h.5V620.5h-.5zM197.5 609h.5V620.5h-.5zM198 599h.5V617.5h-.5zM198.5 588h.5V610h-.5zM199 576.5h.5V600h-.5zM199.5 588h.5V589h-.5zM200 543h.5V575h-.5zM200.5 523h.5V562.5h-.5zM201 504h.5V544h-.5zM201.5 489h.5V524h-.5zM202 477h.5V505h-.5zM202.5 466h.5V490h-.5zM203 456h.5V478h-.5zM203.5 448h.5V467h-.5zM204 444.5h.5V457h-.5zM204.5 444.5h.5V449h-.5zM205 444.5h.5V457h-.5zM205.5 448h.5V467h-.5zM206 456h.5V477.5h-.5zM206.5 466h.5V488h-.5zM207 504h.5V504.5h-.5zM207.5 489h.5V523.5h-.5zM208 503.5h.5V544h-.5zM208.5 522.5h.5V562.5h-.5zM209 543h.5V577h-.5zM209.5 561.5h.5V589h-.5zM210 576h.5V599.5h-.5zM210.5 588h.5V609.5h-.5zM211 598.5h.5V617.5h-.5zM211.5 608.5h.5V620.5h-.5zM212 615.5h.5V620.5h-.5zM212.5 607.5h.5V620.5h-.5zM213 597h.5V616.5h-.5zM213.5 586.5h.5V608.5h-.5zM214 578h.5V598h-.5zM214.5 559h.5V562.5h-.5zM215 540h.5V575.5h-.5zM215.5 519.5h.5V560h-.5zM216 501h.5V541h-.5zM216.5 486.5h.5V520.5h-.5zM217 475h.5V502h-.5zM217.5 464.5h.5V487.5h-.5zM218 454.5h.5V476h-.5zM218.5 447h.5V465.5h-.5zM219 444.5h.5V455.5h-.5zM219.5 444.5h.5V450h-.5zM220 445h.5V458.5h-.5zM220.5 449h.5V469h-.5zM221 457.5h.5V479.5h-.5zM221.5 468h.5V486h-.5zM222 501.5h.5V507.5h-.5zM222.5 491h.5V526.5h-.5zM223 506.5h.5V547h-.5zM223.5 525.5h.5V565h-.5zM224 546h.5V579.5h-.5zM224.5 564h.5V590.5h-.5zM225 578.5h.5V601.5h-.5zM225.5 589.5h.5V611h-.5zM226 600.5h.5V618.5h-.5zM226.5 610h.5V620.5h-.5zM227 614.5h.5V620.5h-.5zM227.5 606h.5V620h-.5zM228 595.5h.5V615.5h-.5zM228.5 584.5h.5V607h-.5zM229 580h.5V596.5h-.5zM229.5 556h.5V565h-.5zM230 536.5h.5V573h-.5zM230.5 516.5h.5V557h-.5zM231 498.5h.5V537.5h-.5zM231.5 484.5h.5V517.5h-.5zM232 473.5h.5V499.5h-.5zM232.5 463h.5V485.5h-.5zM233 453h.5V474.5h-.5zM233.5 446h.5V464h-.5zM234 444.5h.5V454h-.5zM234.5 444.5h.5V451h-.5zM235 445h.5V460h-.5zM235.5 450h.5V470.5h-.5zM236 459h.5V481.5h-.5zM236.5 469.5h.5V484h-.5zM237 499h.5V510.5h-.5zM237.5 493h.5V530h-.5zM238 509.5h.5V550h-.5zM238.5 529h.5V567.5h-.5zM239 549h.5V581.5h-.5zM239.5 566.5h.5V592.5h-.5zM240 580.5h.5V603h-.5zM240.5 591.5h.5V612.5h-.5zM241 602h.5V619h-.5zM241.5 611.5h.5V620.5h-.5zM242 613.5h.5V620.5h-.5zM242.5 604h.5V620h-.5zM243 593.5h.5V614.5h-.5zM243.5 583h.5V605h-.5zM244 582h.5V594.5h-.5zM244.5 553h.5V567.5h-.5zM245 533.5h.5V571h-.5zM245.5 513.5h.5V554h-.5zM246 496h.5V534.5h-.5zM246.5 483h.5V514.5h-.5zM247 471.5h.5V497h-.5zM247.5 461h.5V484h-.5zM248 451.5h.5V472.5h-.5zM248.5 445.5h.5V462h-.5zM249 444.5h.5V452.5h-.5zM249.5 444.5h.5V452.5h-.5zM250 445.5h.5V461.5h-.5zM250.5 451.5h.5V472h-.5zM251 460.5h.5V483h-.5zM251.5 471h.5V482h-.5zM252 496.5h.5V513.5h-.5zM252.5 495.5h.5V533.5h-.5zM253 512.5h.5V553h-.5zM253.5 532.5h.5V570h-.5zM254 552h.5V583h-.5zM254.5 569h.5V594h-.5zM255 582h.5V604.5h-.5zM255.5 593h.5V614h-.5zM256 603.5h.5V619.5h-.5zM256.5 613h.5V620.5h-.5zM257 612h.5V620.5h-.5zM257.5 602.5h.5V619.5h-.5zM258 592h.5V613h-.5zM258.5 581h.5V603.5h-.5zM259 584h.5V593h-.5zM259.5 550h.5V570h-.5zM260 530h.5V568.5h-.5zM260.5 510.5h.5V551h-.5zM261 494h.5V531h-.5zM261.5 481h.5V511.5h-.5zM262 470h.5V495h-.5zM262.5 459.5h.5V482h-.5zM263 450.5h.5V471h-.5zM263.5 445h.5V460.5h-.5zM264 444.5h.5V451.5h-.5zM264.5 444.5h.5V453.5h-.5zM265 446h.5V463.5h-.5zM265.5 452.5h.5V474h-.5zM266 462.5h.5V485h-.5zM266.5 473h.5V480.5h-.5zM267 494h.5V516.5h-.5zM267.5 498h.5V536.5h-.5zM268 515.5h.5V556h-.5zM268.5 535.5h.5V572.5h-.5zM269 555h.5V585h-.5zM269.5 571.5h.5V596h-.5zM270 584h.5V606h-.5zM270.5 595h.5V615h-.5zM271 605h.5V620h-.5zM271.5 614h.5V620.5h-.5zM272 610.5h.5V620.5h-.5zM272.5 601h.5V618.5h-.5zM273 590.5h.5V611.5h-.5zM273.5 579h.5V602h-.5zM274 585.5h.5V591.5h-.5zM274.5 547h.5V572h-.5zM275 527h.5V566h-.5zM275.5 507.5h.5V548h-.5zM276 491.5h.5V528h-.5zM276.5 479h.5V508.5h-.5zM277 468.5h.5V492.5h-.5zM277.5 458h.5V480h-.5zM278 449h.5V469.5h-.5zM278.5 445h.5V459h-.5zM279 444.5h.5V450h-.5zM279.5 444.5h.5V455h-.5zM280 446.5h.5V465h-.5zM280.5 454h.5V475.5h-.5zM281 464h.5V487h-.5zM281.5 474.5h.5V478.5h-.5zM282 492h.5V519.5h-.5zM282.5 500.5h.5V540h-.5zM283 518.5h.5V559h-.5zM283.5 539h.5V574.5h-.5zM284 558h.5V587h-.5zM284.5 573.5h.5V597.5h-.5zM285 586h.5V608h-.5zM285.5 596.5h.5V616.5h-.5zM286 607h.5V620h-.5zM286.5 615.5h.5V620.5h-.5zM287 609h.5V620.5h-.5zM287.5 599h.5V618h-.5zM288 588.5h.5V610h-.5zM288.5 577h.5V600h-.5zM289 587.5h.5V589.5h-.5zM289.5 544h.5V574.5h-.5zM290 523.5h.5V563.5h-.5zM290.5 504.5h.5V545h-.5zM291 489.5h.5V524.5h-.5zM291.5 477.5h.5V505.5h-.5zM292 466.5h.5V490.5h-.5zM292.5 456.5h.5V478.5h-.5zM293 448h.5V467.5h-.5zM293.5 444.5h.5V457.5h-.5zM294 444.5h.5V449h-.5zM294.5 444.5h.5V456.5h-.5zM295 447.5h.5V466.5h-.5zM295.5 455.5h.5V477.5h-.5zM296 465.5h.5V488.5h-.5zM297 489.5h.5V522.5h-.5zM297.5 503h.5V543h-.5zM298 521.5h.5V562h-.5zM298.5 542h.5V576.5h-.5zM299 561h.5V588.5h-.5zM299.5 575.5h.5V599h-.5zM300 587.5h.5V609.5h-.5zM300.5 598h.5V617.5h-.5zM301 608.5h.5V620.5h-.5zM301.5 616h.5V620.5h-.5zM302 607.5h.5V620.5h-.5zM302.5 597.5h.5V617h-.5zM303 587h.5V608.5h-.5zM303.5 577.5h.5V598.5h-.5zM304 559.5h.5V561.5h-.5zM304.5 540.5h.5V576h-.5zM305 520.5h.5V560.5h-.5zM305.5 502h.5V541.5h-.5zM306 487h.5V521.5h-.5zM306.5 475.5h.5V503h-.5zM307 465h.5V488h-.5zM307.5 455h.5V476.5h-.5zM308 447h.5V466h-.5zM308.5 444.5h.5V456h-.5zM309 444.5h.5V449.5h-.5zM309.5 445h.5V458h-.5zM310 448.5h.5V468.5h-.5zM310.5 457h.5V479h-.5zM311 467.5h.5V486.5h-.5zM311.5 502h.5V507h-.5zM312 490h.5V526h-.5zM312.5 506h.5V546h-.5zM313 525h.5V564.5h-.5zM313.5 545h.5V579h-.5zM314 563.5h.5V590.5h-.5zM314.5 578h.5V601h-.5zM315 589.5h.5V611h-.5zM315.5 600h.5V618h-.5zM316 610h.5V620.5h-.5zM316.5 615h.5V620.5h-.5zM317 606h.5V620h-.5zM317.5 596h.5V616h-.5zM318 585h.5V607h-.5zM318.5 579.5h.5V597h-.5zM319 557h.5V564.5h-.5zM319.5 537.5h.5V573.5h-.5zM320 517h.5V558h-.5zM320.5 499.5h.5V538.5h-.5zM321 485h.5V518h-.5zM321.5 474h.5V500.5h-.5zM322 463.5h.5V486h-.5zM322.5 453.5h.5V475h-.5zM323 446.5h.5V464.5h-.5zM323.5 444.5h.5V454.5h-.5zM324 444.5h.5V450.5h-.5zM324.5 445h.5V459.5h-.5zM325 449.5h.5V470h-.5zM325.5 458.5h.5V481h-.5zM326 469h.5V484.5h-.5zM326.5 499.5h.5V509.5h-.5zM327 492.5h.5V529h-.5zM327.5 508.5h.5V549.5h-.5zM328 528h.5V567h-.5zM328.5 548.5h.5V581h-.5zM329 566h.5V592h-.5zM329.5 580h.5V602.5h-.5zM330 591h.5V616.5h-.5zM330.5 601.5h.5V624h-.5zM331 615.5h.5V625h-.5zM331.5 618.5h.5V625h-.5zM332 608.5h.5V625h-.5zM332.5 597.5h.5V619.5h-.5zM333 586h.5V609.5h-.5zM333.5 584h.5V598.5h-.5zM334 555h.5V569h-.5zM334.5 534.5h.5V573.5h-.5zM335 513h.5V556h-.5zM335.5 495h.5V535.5h-.5zM336 480.5h.5V514h-.5zM336.5 469h.5V496h-.5zM337 457.5h.5V481.5h-.5zM337.5 447.5h.5V470h-.5zM338 441h.5V458.5h-.5zM338.5 440h.5V448.5h-.5zM339 440h.5V447.5h-.5zM339.5 440.5h.5V457h-.5zM340 446.5h.5V468.5h-.5zM340.5 456h.5V480h-.5zM341 467.5h.5V480h-.5zM341.5 495h.5V511.5h-.5zM342 492.5h.5V532.5h-.5zM342.5 510.5h.5V553.5h-.5zM343 531.5h.5V571.5h-.5zM343.5 552.5h.5V585.5h-.5zM344 570.5h.5V597h-.5zM344.5 584.5h.5V608h-.5zM345 596h.5V618h-.5zM345.5 607h.5V624.5h-.5zM346 617h.5V625h-.5zM346.5 617h.5V625h-.5zM347 607h.5V624.5h-.5zM347.5 596h.5V618h-.5zM348 584h.5V608h-.5zM348.5 586h.5V597h-.5zM349 552h.5V571.5h-.5zM349.5 531h.5V571h-.5zM350 510h.5V553h-.5zM350.5 492.5h.5V532h-.5zM351 478.5h.5V511h-.5zM351.5 467h.5V493.5h-.5zM352 456h.5V479.5h-.5zM352.5 446h.5V468h-.5zM353 440.5h.5V457h-.5zM353.5 440h.5V447h-.5zM354 440h.5V449h-.5zM354.5 441h.5V459h-.5zM355 448h.5V470h-.5zM355.5 458h.5V482h-.5zM356 469h.5V478h-.5zM356.5 492.5h.5V514.5h-.5zM357 495h.5V536h-.5zM357.5 513.5h.5V556.5h-.5zM358 535h.5V574h-.5zM358.5 555.5h.5V587.5h-.5zM359 573h.5V599h-.5zM359.5 586.5h.5V610h-.5zM360 598h.5V619.5h-.5zM360.5 609h.5V625h-.5zM361 618.5h.5V625h-.5zM361.5 615.5h.5V625h-.5zM362 605h.5V623.5h-.5zM362.5 594h.5V616.5h-.5zM363 582h.5V606h-.5zM363.5 588h.5V595h-.5zM364 548.5h.5V574h-.5zM364.5 527.5h.5V568.5h-.5zM365 507h.5V549.5h-.5zM365.5 490h.5V528.5h-.5zM366 476.5h.5V508h-.5zM366.5 465h.5V491h-.5zM367 454h.5V477.5h-.5zM367.5 445h.5V466h-.5zM368 440h.5V455h-.5zM368.5 440h.5V446h-.5zM369 440h.5V450.5h-.5zM369.5 441.5h.5V460.5h-.5zM370 449.5h.5V472h-.5zM370.5 459.5h.5V484h-.5zM371 471h.5V476h-.5zM371.5 490h.5V518h-.5zM372 498h.5V539.5h-.5zM372.5 517h.5V559.5h-.5zM373 538.5h.5V576.5h-.5zM373.5 558.5h.5V589.5h-.5zM374 575.5h.5V600.5h-.5zM374.5 588.5h.5V611.5h-.5zM375 599.5h.5V620.5h-.5zM375.5 610.5h.5V625h-.5zM376 619.5h.5V625h-.5zM376.5 614h.5V625h-.5zM377 603.5h.5V623h-.5zM377.5 592h.5V615h-.5zM378 580h.5V604.5h-.5zM378.5 590h.5V593h-.5zM379 545.5h.5V576h-.5zM379.5 524h.5V565.5h-.5zM380 504h.5V546.5h-.5zM380.5 487.5h.5V525h-.5zM381 474.5h.5V505h-.5zM381.5 463.5h.5V488.5h-.5zM382 452.5h.5V475.5h-.5zM382.5 443.5h.5V464.5h-.5zM383 440h.5V453.5h-.5zM383.5 440h.5V444.5h-.5zM384 440h.5V452h-.5zM384.5 442.5h.5V462.5h-.5zM385 451h.5V473.5h-.5zM385.5 461.5h.5V486h-.5zM386 472.5h.5V474h-.5zM386.5 487.5h.5V521.5h-.5zM387 500.5h.5V543h-.5zM387.5 520.5h.5V562.5h-.5zM388 542h.5V578.5h-.5zM388.5 561.5h.5V591h-.5zM389 577.5h.5V602.5h-.5zM389.5 590h.5V613h-.5zM390 601.5h.5V622h-.5zM390.5 612h.5V625h-.5zM391 621h.5V625h-.5zM391.5 612.5h.5V625h-.5zM392 601.5h.5V622h-.5zM392.5 590.5h.5V613.5h-.5zM393 579.5h.5V602.5h-.5zM393.5 562h.5V562.5h-.5zM394 542h.5V578.5h-.5zM394.5 520.5h.5V563h-.5zM395 501h.5V543h-.5zM395.5 485.5h.5V521.5h-.5zM396 473h.5V502h-.5zM396.5 461.5h.5V486.5h-.5zM397 451h.5V474h-.5zM397.5 442.5h.5V462.5h-.5zM398 440h.5V452h-.5zM398.5 440h.5V444.5h-.5zM399 440h.5V453.5h-.5zM399.5 443.5h.5V464.5h-.5zM400 452.5h.5V475.5h-.5zM400.5 463.5h.5V484.5h-.5zM401 501h.5V504.5h-.5zM401.5 487.5h.5V524.5h-.5zM402 503.5h.5V546h-.5zM402.5 523.5h.5V565.5h-.5zM403 545h.5V581h-.5zM403.5 564.5h.5V593h-.5zM404 580h.5V604h-.5zM404.5 592h.5V615h-.5zM405 603h.5V623h-.5zM405.5 614h.5V625h-.5zM406 620h.5V625h-.5zM406.5 610.5h.5V625h-.5zM407 600h.5V621h-.5zM407.5 588.5h.5V611.5h-.5zM408 581.5h.5V601h-.5zM408.5 559h.5V565.5h-.5zM409 538.5h.5V576.5h-.5zM409.5 517h.5V560h-.5zM410 498h.5V539.5h-.5zM410.5 483h.5V518h-.5zM411 471h.5V499h-.5zM411.5 460h.5V484h-.5zM412 449.5h.5V472h-.5zM412.5 442h.5V461h-.5zM413 440h.5V450.5h-.5zM413.5 440h.5V446h-.5zM414 440h.5V455h-.5zM414.5 445h.5V466h-.5zM415 454h.5V477.5h-.5zM415.5 465h.5V482.5h-.5zM416 498h.5V507.5h-.5zM416.5 489.5h.5V528h-.5zM417 506.5h.5V549.5h-.5zM417.5 527h.5V568h-.5zM418 548.5h.5V583h-.5zM418.5 567h.5V595h-.5zM419 582h.5V606h-.5zM419.5 594h.5V616.5h-.5zM420 605h.5V623.5h-.5zM420.5 615.5h.5V625h-.5zM421 618.5h.5V625h-.5zM421.5 609h.5V625h-.5zM422 598h.5V619.5h-.5zM422.5 586.5h.5V610h-.5zM423 583.5h.5V599h-.5zM423.5 556h.5V568h-.5zM424 535h.5V574h-.5zM424.5 514h.5V557h-.5zM425 495.5h.5V536h-.5zM425.5 481h.5V515h-.5zM426 469h.5V496.5h-.5zM426.5 458h.5V482h-.5zM427 448h.5V470h-.5zM427.5 441h.5V459h-.5zM428 440h.5V449h-.5zM428.5 440h.5V447h-.5zM429 440.5h.5V457h-.5zM429.5 446h.5V468h-.5zM430 456h.5V479.5h-.5zM430.5 467h.5V480.5h-.5zM431 495.5h.5V510.5h-.5zM431.5 492h.5V531.5h-.5zM432 509.5h.5V552.5h-.5zM432.5 530.5h.5V571h-.5zM433 551.5h.5V585h-.5zM433.5 570h.5V596.5h-.5zM434 584h.5V608h-.5zM434.5 595.5h.5V618h-.5zM435 607h.5V624h-.5zM435.5 617h.5V625h-.5zM436 617.5h.5V625h-.5zM436.5 607.5h.5V624.5h-.5zM437 596.5h.5V618.5h-.5zM437.5 584.5h.5V608.5h-.5zM438 585.5h.5V597.5h-.5zM438.5 553h.5V570.5h-.5zM439 531.5h.5V571.5h-.5zM439.5 510.5h.5V554h-.5zM440 493h.5V532.5h-.5zM440.5 479h.5V511.5h-.5zM441 467.5h.5V494h-.5zM441.5 456.5h.5V480h-.5zM442 446.5h.5V468.5h-.5zM442.5 440.5h.5V457.5h-.5zM443 440h.5V447.5h-.5zM443.5 440h.5V448.5h-.5zM444 441h.5V458.5h-.5zM444.5 447.5h.5V469.5h-.5zM445 457.5h.5V481.5h-.5zM445.5 468.5h.5V478.5h-.5zM446 493h.5V514h-.5zM446.5 494.5h.5V535h-.5zM447 513h.5V556h-.5zM447.5 534h.5V573.5h-.5zM448 555h.5V587h-.5zM448.5 572.5h.5V598.5h-.5zM449 586h.5V609.5h-.5zM449.5 597.5h.5V619h-.5zM450 608.5h.5V624.5h-.5zM450.5 618h.5V625h-.5zM451 616h.5V625h-.5zM451.5 605.5h.5V624h-.5zM452 594.5h.5V617h-.5zM452.5 582.5h.5V606.5h-.5zM453 587.5h.5V595.5h-.5zM453.5 549.5h.5V573h-.5zM454 528h.5V569h-.5zM454.5 507.5h.5V550.5h-.5zM455 490.5h.5V529h-.5zM455.5 477h.5V508.5h-.5zM456 465.5h.5V491.5h-.5zM456.5 454.5h.5V478h-.5zM457 445h.5V466.5h-.5zM457.5 440h.5V455.5h-.5zM458 440h.5V446h-.5zM458.5 440h.5V450h-.5zM459 441.5h.5V460.5h-.5zM459.5 449h.5V471.5h-.5zM460 459.5h.5V483.5h-.5zM460.5 470.5h.5V476.5h-.5zM461 490.5h.5V517h-.5zM461.5 497h.5V538.5h-.5zM462 516h.5V559h-.5zM462.5 537.5h.5V576h-.5zM463 558h.5V589h-.5zM463.5 575h.5V600.5h-.5zM464 588h.5V611h-.5zM464.5 599.5h.5V620.5h-.5zM465 610h.5V625h-.5zM465.5 619.5h.5V625h-.5zM466 614.5h.5V625h-.5zM466.5 604h.5V623h-.5zM467 592.5h.5V615.5h-.5zM467.5 580.5h.5V605h-.5zM468 589.5h.5V593.5h-.5zM468.5 546.5h.5V575.5h-.5zM469 525h.5V566.5h-.5zM469.5 504.5h.5V547.5h-.5zM470 488h.5V526h-.5zM470.5 475h.5V505.5h-.5zM471 464h.5V489h-.5zM471.5 453h.5V476h-.5zM472 444h.5V465h-.5zM472.5 440h.5V454h-.5zM473 440h.5V445h-.5zM473.5 440h.5V451.5h-.5zM474 442.5h.5V462h-.5zM474.5 450.5h.5V473h-.5zM475 461h.5V485.5h-.5zM475.5 472h.5V474.5h-.5zM476 488.5h.5V520.5h-.5zM476.5 500h.5V542h-.5zM477 519.5h.5V562h-.5zM477.5 541h.5V578h-.5zM478 561h.5V591h-.5zM478.5 577h.5V602h-.5zM479 590h.5V607h-.5zM479.5 600.5h.5V612.5h-.5zM480 604h.5V616h-.5zM480.5 611.5h.5V616h-.5zM481 604.5h.5V616h-.5zM481.5 595h.5V613h-.5zM482 585h.5V605.5h-.5zM482.5 574h.5V596h-.5zM483 585.5h.5V586h-.5zM483.5 542h.5V573h-.5zM484 522.5h.5V560.5h-.5zM484.5 504.5h.5V543h-.5zM485 490.5h.5V523.5h-.5zM485.5 479h.5V505.5h-.5zM486 469h.5V491.5h-.5zM486.5 459.5h.5V480h-.5zM487 452h.5V470h-.5zM487.5 449h.5V460.5h-.5zM488 449h.5V453.5h-.5zM488.5 449h.5V461h-.5zM489 452.5h.5V471h-.5zM489.5 460h.5V481h-.5zM490 470h.5V490h-.5zM490.5 505h.5V507h-.5zM491 491.5h.5V524.5h-.5zM491.5 506h.5V544h-.5zM492 523.5h.5V561.5h-.5zM492.5 543h.5V575.5h-.5zM493 560.5h.5V586.5h-.5zM493.5 574.5h.5V596.5h-.5zM494 585.5h.5V606.5h-.5zM494.5 595.5h.5V613.5h-.5zM495 605.5h.5V616h-.5zM495.5 611h.5V616h-.5zM496 603h.5V616h-.5zM496.5 593.5h.5V612h-.5zM497 583h.5V604h-.5zM497.5 576h.5V594.5h-.5zM498 557h.5V561.5h-.5zM498.5 538.5h.5V572.5h-.5zM499 519.5h.5V558h-.5zM499.5 502h.5V539.5h-.5zM500 488.5h.5V520.5h-.5zM500.5 477.5h.5V503h-.5zM501 467.5h.5V489.5h-.5zM501.5 458h.5V478.5h-.5zM502 451h.5V468.5h-.5zM502.5 449h.5V459h-.5zM503 449h.5V454.5h-.5zM503.5 449h.5V462.5h-.5zM504 453.5h.5V472.5h-.5zM504.5 461.5h.5V482.5h-.5zM505 471.5h.5V488h-.5zM505.5 502.5h.5V509.5h-.5zM506 493.5h.5V528h-.5zM506.5 508.5h.5V547h-.5zM507 527h.5V564h-.5zM507.5 546h.5V577.5h-.5zM508 563h.5V588h-.5zM508.5 576.5h.5V598.5h-.5zM509 587h.5V607.5h-.5zM509.5 597.5h.5V614.5h-.5zM510 606.5h.5V616h-.5zM510.5 610h.5V616h-.5zM511 601.5h.5V615.5h-.5zM511.5 592h.5V611h-.5zM512 581.5h.5V602.5h-.5zM512.5 578h.5V593h-.5zM513 554h.5V564h-.5zM513.5 535.5h.5V570.5h-.5zM514 516.5h.5V555h-.5zM514.5 499.5h.5V536.5h-.5zM515 486.5h.5V517.5h-.5zM515.5 476h.5V500.5h-.5zM516 466h.5V487.5h-.5zM516.5 456.5h.5V477h-.5zM517 450.5h.5V467h-.5zM517.5 449h.5V457.5h-.5zM518 449h.5V455.5h-.5zM518.5 449.5h.5V464h-.5zM519 454.5h.5V474h-.5zM519.5 463h.5V484.5h-.5zM520 473h.5V486h-.5zM520.5 500h.5V512h-.5zM521 495.5h.5V531h-.5zM521.5 511h.5V550h-.5zM522 530h.5V566.5h-.5zM522.5 549h.5V579.5h-.5zM523 565.5h.5V590h-.5zM523.5 578.5h.5V600h-.5zM524 589h.5V609h-.5zM524.5 599h.5V615h-.5zM525 608h.5V616h-.5zM525.5 609h.5V616h-.5zM526 600h.5V615.5h-.5zM526.5 590h.5V610h-.5zM527 580h.5V601h-.5zM527.5 580h.5V591h-.5zM528 551.5h.5V566h-.5zM528.5 532.5h.5V568.5h-.5zM529 513.5h.5V552.5h-.5zM529.5 497.5h.5V533.5h-.5zM530 485h.5V514.5h-.5zM530.5 474.5h.5V498.5h-.5zM531 464.5h.5V486h-.5zM531.5 455.5h.5V475.5h-.5zM532 450h.5V465.5h-.5zM532.5 449h.5V456.5h-.5zM533 449h.5V456.5h-.5zM533.5 450h.5V465.5h-.5zM534 455.5h.5V475.5h-.5zM534.5 464.5h.5V486h-.5zM535 474.5h.5V484h-.5zM535.5 497.5h.5V515h-.5zM536 498h.5V534h-.5zM536.5 514h.5V553h-.5zM537 533h.5V568.5h-.5zM537.5 552h.5V581h-.5zM538 567.5h.5V591.5h-.5zM538.5 580h.5V601.5h-.5zM539 590.5h.5V610h-.5zM539.5 600.5h.5V615.5h-.5zM540 609h.5V616h-.5zM540.5 608h.5V616h-.5zM541 598.5h.5V615h-.5zM541.5 588.5h.5V609h-.5zM542 578h.5V599.5h-.5zM542.5 581.5h.5V589.5h-.5zM543 548.5h.5V568.5h-.5zM543.5 529.5h.5V566h-.5zM544 510.5h.5V549.5h-.5zM544.5 495h.5V530.5h-.5zM545 483h.5V511.5h-.5zM545.5 472.5h.5V496h-.5zM546 463h.5V484h-.5zM546.5 454h.5V473.5h-.5zM547 449.5h.5V464h-.5zM547.5 449h.5V455h-.5zM548 449h.5V458h-.5zM548.5 450.5h.5V467h-.5zM549 457h.5V477h-.5zM549.5 466h.5V488h-.5zM550 476h.5V482.5h-.5zM550.5 495.5h.5V518h-.5zM551 500h.5V537h-.5zM551.5 517h.5V555.5h-.5zM552 536h.5V571h-.5zM552.5 554.5h.5V583h-.5zM553 570h.5V593h-.5zM553.5 582h.5V604h-.5zM554 592h.5V612.5h-.5zM554.5 603h.5V617h-.5zM555 611.5h.5V617h-.5zM555.5 607.5h.5V617h-.5zM556 598h.5V615.5h-.5zM556.5 587.5h.5V608.5h-.5zM557 576.5h.5V599h-.5zM557.5 584h.5V588.5h-.5zM558 545.5h.5V571h-.5zM558.5 526h.5V564h-.5zM559 507.5h.5V546.5h-.5zM559.5 492.5h.5V527h-.5zM560 480.5h.5V508.5h-.5zM560.5 470.5h.5V493.5h-.5zM561 460.5h.5V481.5h-.5zM561.5 452h.5V471.5h-.5zM562 448h.5V461.5h-.5zM562.5 448h.5V453h-.5zM563 448h.5V458.5h-.5zM563.5 450h.5V468h-.5zM564 457.5h.5V478h-.5zM564.5 467h.5V489.5h-.5zM565 477h.5V480h-.5zM565.5 493h.5V521h-.5zM566 502h.5V540.5h-.5zM566.5 520h.5V558.5h-.5zM567 539.5h.5V573.5h-.5zM567.5 557.5h.5V585h-.5zM568 572.5h.5V595.5h-.5zM568.5 584h.5V605.5h-.5zM569 594.5h.5V613.5h-.5zM569.5 604.5h.5V617h-.5zM570 612.5h.5V617h-.5zM570.5 606h.5V617h-.5zM571 596h.5V614.5h-.5zM571.5 586h.5V607h-.5zM572 575h.5V597h-.5zM572.5 586h.5V587h-.5zM573 542.5h.5V573h-.5zM573.5 523h.5V561.5h-.5zM574 505h.5V543.5h-.5zM574.5 490.5h.5V524h-.5zM575 479h.5V506h-.5zM575.5 468.5h.5V491.5h-.5zM576 459h.5V480h-.5zM576.5 451h.5V469.5h-.5zM577 448h.5V460h-.5zM577.5 448h.5V452h-.5zM578 448h.5V460h-.5zM578.5 451h.5V469.5h-.5zM579 459h.5V480h-.5zM579.5 468.5h.5V489.5h-.5zM580 505h.5V506h-.5zM580.5 490.5h.5V524h-.5zM581 505h.5V543.5h-.5zM581.5 523h.5V561.5h-.5zM582 542.5h.5V575.5h-.5zM582.5 560.5h.5V587h-.5zM583 574.5h.5V597h-.5zM583.5 586h.5V607h-.5zM584 596h.5V614.5h-.5zM584.5 606h.5V617h-.5zM585 612.5h.5V617h-.5zM585.5 604.5h.5V617h-.5zM586 594.5h.5V613.5h-.5zM586.5 584.5h.5V605.5h-.5zM587 576.5h.5V595.5h-.5zM587.5 558h.5V561h-.5zM588 539.5h.5V573.5h-.5zM588.5 520h.5V559h-.5zM589 502.5h.5V540.5h-.5zM589.5 488.5h.5V521h-.5zM590 477.5h.5V503.5h-.5zM590.5 467h.5V489.5h-.5zM591 457.5h.5V478.5h-.5zM591.5 450h.5V468h-.5zM592 448h.5V458.5h-.5zM592.5 448h.5V453h-.5zM593 448h.5V461.5h-.5zM593.5 452h.5V471h-.5zM594 460.5h.5V481.5h-.5zM594.5 470h.5V488h-.5zM595 502.5h.5V508.5h-.5zM595.5 492.5h.5V527h-.5zM596 507.5h.5V546.5h-.5zM596.5 526h.5V564h-.5zM597 545.5h.5V577.5h-.5zM597.5 563h.5V588.5h-.5zM598 576.5h.5V598.5h-.5zM598.5 587.5h.5V608.5h-.5zM599 597.5h.5V615h-.5zM599.5 607.5h.5V617h-.5zM600 611.5h.5V617h-.5zM600.5 603h.5V617h-.5zM601 593h.5V612.5h-.5zM601.5 582.5h.5V604h-.5zM602 578h.5V594h-.5zM602.5 555h.5V563.5h-.5zM603 536.5h.5V571.5h-.5zM603.5 517h.5V556h-.5zM604 500h.5V537.5h-.5zM604.5 486.5h.5V518h-.5zM605 475.5h.5V501h-.5zM605.5 465.5h.5V487.5h-.5zM606 456h.5V476.5h-.5zM606.5 449.5h.5V466.5h-.5zM607 448h.5V457h-.5zM607.5 448h.5V454h-.5zM608 448.5h.5V463h-.5zM608.5 453h.5V473h-.5zM609 462h.5V483h-.5zM609.5 472h.5V486h-.5zM610 500h.5V511h-.5zM610.5 494.5h.5V530h-.5zM611 510h.5V549.5h-.5zM611.5 529h.5V566.5h-.5zM612 548.5h.5V579.5h-.5zM612.5 565.5h.5V590h-.5zM613 578.5h.5V600.5h-.5zM613.5 589h.5V609.5h-.5zM614 599.5h.5V616h-.5zM614.5 608.5h.5V617h-.5zM615 610.5h.5V617h-.5zM615.5 601.5h.5V616.5h-.5zM616 591.5h.5V611.5h-.5zM616.5 581h.5V602.5h-.5zM617 580h.5V592.5h-.5zM617.5 552.5h.5V566h-.5zM618 533.5h.5V569.5h-.5zM618.5 514h.5V553.5h-.5zM619 497.5h.5V534.5h-.5zM619.5 484.5h.5V515h-.5zM620 474h.5V498.5h-.5zM620.5 464h.5V485.5h-.5zM621 454.5h.5V475h-.5zM621.5 449h.5V465h-.5zM622 448h.5V455.5h-.5zM622.5 448h.5V455.5h-.5zM623 448.5h.5V464.5h-.5zM623.5 454.5h.5V474.5h-.5zM624 463.5h.5V485h-.5zM624.5 473.5h.5V484h-.5zM625 497.5h.5V514h-.5zM625.5 496.5h.5V533.5h-.5zM626 513h.5V552.5h-.5zM626.5 532.5h.5V568.5h-.5zM627 551.5h.5V581.5h-.5zM627.5 567.5h.5V592h-.5zM628 580.5h.5V600.5h-.5zM628.5 591h.5V606.5h-.5zM629 597h.5V612h-.5zM629.5 605.5h.5V612.5h-.5zM630 605h.5V612.5h-.5zM630.5 596h.5V611.5h-.5zM631 586.5h.5V606h-.5zM631.5 576.5h.5V597h-.5zM632 579h.5V587.5h-.5zM632.5 548.5h.5V566.5h-.5zM633 530.5h.5V565h-.5zM633.5 512.5h.5V549.5h-.5zM634 497.5h.5V531.5h-.5zM634.5 485.5h.5V513.5h-.5zM635 475.5h.5V498.5h-.5zM635.5 466h.5V486.5h-.5zM636 458h.5V476.5h-.5zM636.5 453h.5V467h-.5zM637 452.5h.5V459h-.5zM637.5 452.5h.5V461h-.5zM638 454h.5V469.5h-.5zM638.5 460h.5V479h-.5zM639 468.5h.5V489.5h-.5zM639.5 478h.5V485h-.5zM640 497.5h.5V518h-.5zM640.5 501h.5V536h-.5zM641 517h.5V554h-.5zM641.5 535h.5V569h-.5zM642 553h.5V580.5h-.5zM642.5 568h.5V590h-.5zM643 579.5h.5V599.5h-.5zM643.5 589h.5V607.5h-.5zM644 598.5h.5V612h-.5zM644.5 606.5h.5V612.5h-.5zM645 603.5h.5V612.5h-.5zM645.5 594.5h.5V611h-.5zM646 585h.5V604.5h-.5zM646.5 574.5h.5V595.5h-.5zM647 581h.5V586h-.5zM647.5 545.5h.5V568.5h-.5zM648 527.5h.5V563h-.5zM648.5 509.5h.5V546.5h-.5zM649 495h.5V528.5h-.5zM649.5 484h.5V510.5h-.5zM650 474h.5V496h-.5zM650.5 464.5h.5V485h-.5zM651 456.5h.5V475h-.5zM651.5 453h.5V465.5h-.5zM652 452.5h.5V457.5h-.5zM652.5 452.5h.5V462h-.5zM653 454.5h.5V471h-.5zM653.5 461h.5V481h-.5zM654 470h.5V491h-.5zM654.5 480h.5V483.5h-.5zM655 495.5h.5V520.5h-.5zM655.5 503h.5V539h-.5zM656 519.5h.5V556.5h-.5zM656.5 538h.5V571h-.5zM657 555.5h.5V582h-.5zM657.5 570h.5V591.5h-.5zM658 581h.5V601h-.5zM658.5 590.5h.5V609h-.5zM659 600h.5V612.5h-.5zM659.5 608h.5V612.5h-.5zM660 602h.5V612.5h-.5zM660.5 593h.5V610h-.5zM661 583.5h.5V603h-.5zM661.5 573h.5V594h-.5zM662 582.5h.5V584.5h-.5zM662.5 543h.5V570.5h-.5zM663 524.5h.5V560.5h-.5zM663.5 507h.5V544h-.5zM664 493h.5V525.5h-.5zM664.5 482.5h.5V508h-.5zM665 472.5h.5V494h-.5zM665.5 463.5h.5V483.5h-.5zM666 456h.5V473.5h-.5zM666.5 452.5h.5V464.5h-.5zM667 452.5h.5V457h-.5zM667.5 452.5h.5V463.5h-.5zM668 455h.5V472.5h-.5zM668.5 462.5h.5V482.5h-.5zM669 471.5h.5V492.5h-.5zM670 493.5h.5V523.5h-.5zM670.5 505.5h.5V542h-.5zM671 522.5h.5V559h-.5zM671.5 541h.5V573h-.5zM672 558h.5V583.5h-.5zM672.5 572h.5V593h-.5zM673 582.5h.5V602.5h-.5zM673.5 592h.5V609.5h-.5zM674 601.5h.5V612.5h-.5zM674.5 608.5h.5V612.5h-.5zM675 601h.5V612.5h-.5zM675.5 591.5h.5V609.5h-.5zM676 582h.5V602h-.5zM676.5 573.5h.5V592.5h-.5zM677 557h.5V559h-.5zM677.5 540h.5V572h-.5zM678 521.5h.5V558h-.5zM678.5 504.5h.5V541h-.5zM679 491.5h.5V522.5h-.5zM679.5 480.5h.5V505.5h-.5zM680 471h.5V492.5h-.5zM680.5 462h.5V481.5h-.5zM681 455h.5V472h-.5zM681.5 452.5h.5V463h-.5zM682 452.5h.5V457h-.5zM682.5 452.5h.5V465h-.5zM683 456h.5V474h-.5zM683.5 464h.5V484h-.5zM684 473h.5V490.5h-.5zM684.5 505h.5V509h-.5zM685 494h.5V526.5h-.5zM685.5 508h.5V545h-.5zM686 525.5h.5V561.5h-.5zM686.5 544h.5V574.5h-.5zM687 560.5h.5V585h-.5zM687.5 573.5h.5V594.5h-.5zM688 584h.5V604h-.5zM688.5 593.5h.5V610.5h-.5zM689 603h.5V612.5h-.5zM689.5 607.5h.5V612.5h-.5zM690 599.5h.5V612.5h-.5zM690.5 590h.5V608.5h-.5zM691 580h.5V600.5h-.5zM691.5 575h.5V591h-.5zM692 554.5h.5V561.5h-.5zM692.5 537h.5V570h-.5zM693 518.5h.5V555.5h-.5zM693.5 502.5h.5V538h-.5zM694 489.5h.5V519.5h-.5zM694.5 479h.5V503.5h-.5zM695 469.5h.5V490.5h-.5zM695.5 460.5h.5V480h-.5zM696 454h.5V470.5h-.5zM696.5 452.5h.5V461.5h-.5zM697 452.5h.5V458h-.5zM697.5 453h.5V466.5h-.5zM698 457h.5V475.5h-.5zM698.5 465.5h.5V485.5h-.5zM699 474.5h.5V489h-.5zM699.5 502.5h.5V512h-.5zM700 496h.5V529.5h-.5zM700.5 511h.5V548h-.5zM701 528.5h.5V564h-.5zM701.5 547h.5V576.5h-.5zM702 563h.5V586.5h-.5zM702.5 575.5h.5V596h-.5zM703 585.5h.5V605h-.5zM703.5 595h.5V611h-.5zM704 604h.5V612.5h-.5zM704.5 606.5h.5V612.5h-.5zM705 598h.5V612h-.5zM705.5 588.5h.5V607.5h-.5zM706 578.5h.5V599h-.5zM706.5 577h.5V589.5h-.5zM707 552h.5V563.5h-.5zM707.5 534h.5V568h-.5zM708 515.5h.5V553h-.5zM708.5 500h.5V535h-.5zM709 487.5h.5V516.5h-.5zM709.5 477.5h.5V501h-.5zM710 468h.5V488.5h-.5zM710.5 459.5h.5V478.5h-.5zM711 453.5h.5V469h-.5zM711.5 452.5h.5V460.5h-.5zM712 452.5h.5V459.5h-.5zM712.5 453h.5V468h-.5zM713 458.5h.5V477.5h-.5zM713.5 467h.5V487.5h-.5zM714 476.5h.5V487h-.5zM714.5 500h.5V514.5h-.5zM715 498h.5V532.5h-.5zM715.5 513.5h.5V550.5h-.5zM716 531.5h.5V566h-.5zM716.5 549.5h.5V578h-.5zM717 565h.5V588h-.5zM717.5 577h.5V597.5h-.5zM718 587h.5V606.5h-.5zM718.5 596.5h.5V611.5h-.5zM719 605.5h.5V612.5h-.5zM719.5 605h.5V612.5h-.5zM720 596.5h.5V611.5h-.5zM720.5 587h.5V606h-.5zM721 577h.5V597.5h-.5zM721.5 578.5h.5V588h-.5zM722 549h.5V566h-.5zM722.5 531h.5V566h-.5zM723 513h.5V550h-.5zM723.5 498h.5V532h-.5zM724 486h.5V514h-.5zM724.5 476h.5V499h-.5zM725 466.5h.5V487h-.5zM725.5 458h.5V477h-.5zM726 453h.5V467.5h-.5zM726.5 452.5h.5V459h-.5zM727 452.5h.5V460.5h-.5zM727.5 453.5h.5V469.5h-.5zM728 459.5h.5V479h-.5zM728.5 468.5h.5V489h-.5zM729 478h.5V485.5h-.5zM729.5 498h.5V517h-.5zM730 500.5h.5V535.5h-.5zM730.5 516h.5V553.5h-.5zM731 534.5h.5V568.5h-.5zM731.5 552.5h.5V580h-.5zM732 567.5h.5V590h-.5zM732.5 579h.5V599h-.5zM733 589h.5V607.5h-.5zM733.5 598h.5V612h-.5zM734 606.5h.5V612.5h-.5zM734.5 604h.5V612.5h-.5zM735 595h.5V611h-.5zM735.5 585.5h.5V605h-.5zM736 575h.5V596h-.5zM736.5 580.5h.5V586.5h-.5zM737 546.5h.5V568h-.5zM737.5 528h.5V563.5h-.5zM738 510.5h.5V547.5h-.5zM738.5 495.5h.5V529h-.5zM739 484.5h.5V511.5h-.5zM739.5 474.5h.5V496.5h-.5zM740 465h.5V485.5h-.5zM740.5 457h.5V475.5h-.5zM741 453h.5V466h-.5zM741.5 452.5h.5V458h-.5zM742 452.5h.5V462h-.5zM742.5 454.5h.5V471h-.5zM743 461h.5V480.5h-.5zM743.5 470h.5V491h-.5zM744 479.5h.5V484h-.5zM744.5 496h.5V520h-.5zM745 502.5h.5V538.5h-.5zM745.5 519h.5V556h-.5zM746 537.5h.5V570.5h-.5zM746.5 555h.5V581.5h-.5zM747 569.5h.5V591.5h-.5zM747.5 580.5h.5V600.5h-.5zM748 590.5h.5V608.5h-.5zM748.5 599.5h.5V612.5h-.5zM749 607.5h.5V612.5h-.5zM749.5 602.5h.5V612.5h-.5zM750 593.5h.5V610.5h-.5zM750.5 584h.5V603.5h-.5zM751 573.5h.5V594.5h-.5zM751.5 582h.5V585h-.5zM752 543.5h.5V570h-.5zM752.5 525h.5V561h-.5zM753 507.5h.5V544.5h-.5zM753.5 493.5h.5V526h-.5zM754 482.5h.5V508.5h-.5zM754.5 473h.5V494.5h-.5zM755 463.5h.5V483.5h-.5zM755.5 456h.5V474h-.5zM756 452.5h.5V464.5h-.5zM756.5 452.5h.5V457h-.5zM757 452.5h.5V463h-.5zM757.5 455h.5V472.5h-.5zM758 462h.5V482h-.5zM758.5 471.5h.5V492.5h-.5zM759 481h.5V482h-.5zM759.5 494h.5V523h-.5zM760 505h.5V541.5h-.5zM760.5 522h.5V558.5h-.5zM761 540.5h.5V572.5h-.5zM761.5 557.5h.5V583h-.5zM762 571.5h.5V593h-.5zM762.5 582h.5V602h-.5zM763 592h.5V609.5h-.5zM763.5 601h.5V612.5h-.5zM764 608.5h.5V612.5h-.5zM764.5 601h.5V612.5h-.5zM765 592h.5V609.5h-.5zM765.5 582.5h.5V602h-.5zM766 573h.5V593h-.5zM766.5 557.5h.5V558.5h-.5zM767 540.5h.5V572h-.5zM767.5 522h.5V558.5h-.5zM768 505h.5V541.5h-.5zM768.5 492h.5V523h-.5zM769 481h.5V506h-.5zM769.5 471.5h.5V493h-.5zM770 462h.5V482h-.5zM770.5 455h.5V472.5h-.5zM771 452.5h.5V463h-.5zM771.5 452.5h.5V457h-.5zM772 452.5h.5V464.5h-.5zM772.5 456h.5V474h-.5zM773 463.5h.5V483.5h-.5zM773.5 473h.5V491h-.5zM774 505.5h.5V508.5h-.5zM774.5 493.5h.5V526h-.5zM775 507.5h.5V544.5h-.5zM775.5 525h.5V561h-.5zM776 543.5h.5V574h-.5zM776.5 560h.5V584.5h-.5zM777 573h.5V594.5h-.5zM777.5 583.5h.5V597.5h-.5z"/>
<path fill="#EDB120" d="M31.5 532h.5V533h-.5zM32 532h.5V647h-.5zM32.5 532h.5V671h-.5zM33 646h.5V671h-.5zM34 576h.5V671h-.5zM34.5 532h.5V671h-.5zM35 532h.5V577h-.5zM35.5 534.5h.5V571h-.5zM36 555.5h.5V575h-.5zM36.5 570h.5V586h-.5zM37 574h.5V600.5h-.5zM37.5 585h.5V615h-.5zM38 599.5h.5V625h-.5zM38.5 614h.5V628h-.5zM39 623.5h.5V628h-.5zM39.5 615h.5V628h-.5zM40 602.5h.5V624.5h-.5zM40.5 586h.5V616h-.5zM41 566.5h.5V603.5h-.5zM41.5 546h.5V587h-.5zM42 525h.5V567.5h-.5zM42.5 504.5h.5V547h-.5zM43 486h.5V526h-.5zM43.5 471h.5V505.5h-.5zM44 459.5h.5V487h-.5zM44.5 453h.5V472h-.5zM45 451.5h.5V460.5h-.5zM45.5 451.5h.5V454.5h-.5zM46 451.5h.5V460.5h-.5zM46.5 453.5h.5V469h-.5zM47 459.5h.5V480.5h-.5zM47.5 468h.5V494.5h-.5zM48 479.5h.5V509.5h-.5zM48.5 493.5h.5V525.5h-.5zM49 508.5h.5V542h-.5zM49.5 524.5h.5V557.5h-.5zM50 541h.5V572h-.5zM50.5 556.5h.5V584.5h-.5zM51 571h.5V594.5h-.5zM51.5 583.5h.5V601.5h-.5zM52 593.5h.5V605.5h-.5zM52.5 600.5h.5V606.5h-.5zM53 600.5h.5V606.5h-.5zM53.5 593h.5V606h-.5zM54 584h.5V601.5h-.5zM54.5 575h.5V594h-.5zM55 564h.5V585h-.5zM55.5 550h.5V576h-.5zM56 533.5h.5V565h-.5zM56.5 516.5h.5V551h-.5zM57 502h.5V534.5h-.5zM57.5 491h.5V517.5h-.5zM58 481.5h.5V503h-.5zM58.5 472.5h.5V492h-.5zM59 464.5h.5V482.5h-.5zM59.5 459h.5V473.5h-.5zM60 458.5h.5V465.5h-.5zM60.5 458.5h.5V464.5h-.5zM61 459h.5V472.5h-.5zM61.5 463.5h.5V481.5h-.5zM62 471.5h.5V490.5h-.5zM62.5 480.5h.5V501.5h-.5zM63 489.5h.5V516h-.5zM63.5 500.5h.5V533h-.5zM64 515h.5V549.5h-.5zM64.5 532h.5V564h-.5zM65 548.5h.5V575h-.5zM65.5 563h.5V584.5h-.5zM66 574h.5V593.5h-.5zM66.5 583.5h.5V601.5h-.5zM67 592.5h.5V606.5h-.5zM67.5 600.5h.5V607h-.5zM68 600h.5V607h-.5zM68.5 592h.5V606.5h-.5zM69 583h.5V601h-.5zM69.5 574h.5V593h-.5zM70 562.5h.5V584h-.5zM70.5 548h.5V575h-.5zM71 531h.5V563.5h-.5zM71.5 514h.5V549h-.5zM72 500h.5V532h-.5zM72.5 489h.5V515h-.5zM73 479.5h.5V501h-.5zM73.5 470.5h.5V490h-.5zM74 462.5h.5V480.5h-.5zM74.5 458h.5V471.5h-.5zM75 457.5h.5V463.5h-.5zM75.5 457.5h.5V465h-.5zM76 458.5h.5V473.5h-.5zM76.5 464h.5V482.5h-.5zM77 472.5h.5V492h-.5zM77.5 481.5h.5V503.5h-.5zM78 491h.5V518.5h-.5zM78.5 502.5h.5V535.5h-.5zM79 517.5h.5V552.5h-.5zM79.5 534.5h.5V566.5h-.5zM80 551.5h.5V577h-.5zM80.5 565.5h.5V586.5h-.5zM81 576h.5V595.5h-.5zM81.5 585.5h.5V603h-.5zM82 594.5h.5V607.5h-.5zM82.5 602h.5V607.5h-.5zM83 599.5h.5V607.5h-.5zM83.5 591h.5V606.5h-.5zM84 582h.5V600.5h-.5zM84.5 572.5h.5V592h-.5zM85 560.5h.5V583h-.5zM85.5 545.5h.5V573.5h-.5zM86 528h.5V561.5h-.5zM86.5 511.5h.5V546.5h-.5zM87 497.5h.5V529h-.5zM87.5 487h.5V512.5h-.5zM88 477.5h.5V498.5h-.5zM88.5 468.5h.5V488h-.5zM89 461h.5V478.5h-.5zM89.5 457h.5V469.5h-.5zM90 457h.5V462h-.5zM90.5 457h.5V465.5h-.5zM91 458.5h.5V474h-.5zM91.5 464.5h.5V483.5h-.5zM92 473h.5V493h-.5zM92.5 482.5h.5V505.5h-.5zM93 492h.5V521h-.5zM93.5 504.5h.5V538.5h-.5zM94 520h.5V555h-.5zM94.5 537.5h.5V568.5h-.5zM95 554h.5V579h-.5zM95.5 567.5h.5V588.5h-.5zM96 578h.5V597.5h-.5zM96.5 587.5h.5V605h-.5zM97 596.5h.5V608.5h-.5zM97.5 604h.5V608.5h-.5zM98 599h.5V608.5h-.5zM98.5 590.5h.5V606.5h-.5zM99 581h.5V600h-.5zM99.5 571h.5V591.5h-.5zM100 558.5h.5V582h-.5zM100.5 543h.5V572h-.5zM101 525h.5V559.5h-.5zM101.5 508.5h.5V544h-.5zM102 495.5h.5V526h-.5zM102.5 485h.5V509.5h-.5zM103 475.5h.5V496.5h-.5zM103.5 466.5h.5V486h-.5zM104 459.5h.5V476.5h-.5zM104.5 456h.5V467.5h-.5zM105 456h.5V460.5h-.5zM105.5 456h.5V466.5h-.5zM106 458.5h.5V478.5h-.5zM106.5 465.5h.5V487h-.5zM107 477.5h.5V497h-.5zM107.5 486h.5V509h-.5zM108 496h.5V524h-.5zM108.5 508h.5V541h-.5zM109 523h.5V556h-.5zM109.5 540h.5V568.5h-.5zM110 555h.5V578.5h-.5zM110.5 567.5h.5V587h-.5zM111 577.5h.5V595.5h-.5zM111.5 586h.5V602h-.5zM112 594.5h.5V604.5h-.5zM112.5 601h.5V604.5h-.5zM113 594h.5V604.5h-.5zM113.5 586h.5V602h-.5zM114 577h.5V595h-.5zM114.5 567.5h.5V587h-.5zM115 555h.5V578h-.5zM115.5 539.5h.5V568.5h-.5zM116 523h.5V556h-.5zM116.5 507.5h.5V540.5h-.5zM117 495.5h.5V524h-.5zM117.5 486h.5V508.5h-.5zM118 477.5h.5V496.5h-.5zM118.5 469h.5V487h-.5zM119 462.5h.5V478.5h-.5zM119.5 460.5h.5V470h-.5zM120 460.5h.5V464.5h-.5zM120.5 460.5h.5V471.5h-.5zM121 463.5h.5V480h-.5zM121.5 470.5h.5V488.5h-.5zM122 479h.5V498.5h-.5zM122.5 487.5h.5V511h-.5zM123 497.5h.5V527h-.5zM123.5 510h.5V543.5h-.5zM124 526h.5V558.5h-.5zM124.5 542.5h.5V570h-.5zM125 557.5h.5V579.5h-.5zM125.5 569h.5V588.5h-.5zM126 578.5h.5V596.5h-.5zM126.5 587.5h.5V602.5h-.5zM127 595.5h.5V604.5h-.5zM127.5 600h.5V604.5h-.5zM128 593h.5V604.5h-.5zM128.5 584.5h.5V601h-.5zM129 575.5h.5V594h-.5zM129.5 565.5h.5V585.5h-.5zM130 552.5h.5V576.5h-.5zM130.5 537h.5V566.5h-.5zM131 520.5h.5V553.5h-.5zM131.5 505.5h.5V538h-.5zM132 494h.5V521.5h-.5zM132.5 484.5h.5V506.5h-.5zM133 476h.5V495h-.5zM133.5 468h.5V485.5h-.5zM134 462h.5V477h-.5zM134.5 460.5h.5V469h-.5zM135 460.5h.5V465.5h-.5zM135.5 460.5h.5V472.5h-.5zM136 464.5h.5V481h-.5zM136.5 471.5h.5V490h-.5zM137 480h.5V500.5h-.5zM137.5 489h.5V513.5h-.5zM138 499.5h.5V529.5h-.5zM138.5 512.5h.5V546h-.5zM139 528.5h.5V560.5h-.5zM139.5 545h.5V572h-.5zM140 559.5h.5V581h-.5zM140.5 571h.5V589.5h-.5zM141 580h.5V597.5h-.5zM141.5 588.5h.5V603.5h-.5zM142 596.5h.5V604.5h-.5zM142.5 599h.5V604.5h-.5zM143 591.5h.5V604h-.5zM143.5 583h.5V600h-.5zM144 574h.5V592.5h-.5zM144.5 564h.5V584h-.5zM145 550.5h.5V575h-.5zM145.5 534h.5V565h-.5zM146 518h.5V551.5h-.5zM146.5 503.5h.5V535h-.5zM147 492.5h.5V519h-.5zM147.5 483h.5V504.5h-.5zM148 474.5h.5V493.5h-.5zM148.5 466.5h.5V484h-.5zM149 461.5h.5V475.5h-.5zM149.5 460.5h.5V467.5h-.5zM150 460.5h.5V466.5h-.5zM150.5 461h.5V474h-.5zM151 465.5h.5V482.5h-.5zM151.5 473h.5V491.5h-.5zM152 481.5h.5V502h-.5zM152.5 490.5h.5V516h-.5zM153 501h.5V532h-.5zM153.5 515h.5V548.5h-.5zM154 531h.5V562.5h-.5zM154.5 547.5h.5V573.5h-.5zM155 561.5h.5V582.5h-.5zM155.5 572.5h.5V591h-.5zM156 581.5h.5V599h-.5zM156.5 590h.5V604h-.5zM157 598h.5V604.5h-.5zM157.5 598h.5V604.5h-.5zM158 590.5h.5V604h-.5zM158.5 581.5h.5V599h-.5zM159 572.5h.5V591.5h-.5zM159.5 562h.5V582.5h-.5zM160 548h.5V573.5h-.5zM160.5 531.5h.5V563h-.5zM161 515.5h.5V549h-.5zM161.5 501.5h.5V532.5h-.5zM162 491h.5V516.5h-.5zM162.5 482h.5V502.5h-.5zM163 473.5h.5V492h-.5zM163.5 465.5h.5V483h-.5zM164 461h.5V474.5h-.5zM164.5 460.5h.5V466.5h-.5zM165 460.5h.5V467.5h-.5zM165.5 461.5h.5V475.5h-.5zM166 466.5h.5V484h-.5zM166.5 474.5h.5V493h-.5zM167 483h.5V504h-.5zM167.5 492h.5V518.5h-.5zM168 503h.5V535h-.5zM168.5 517.5h.5V551h-.5zM169 534h.5V564.5h-.5zM169.5 550h.5V575h-.5zM170 563.5h.5V584h-.5zM170.5 574h.5V592.5h-.5zM171 583h.5V600h-.5zM171.5 591.5h.5V604h-.5zM172 599h.5V604.5h-.5zM172.5 597h.5V604.5h-.5zM173 589h.5V603.5h-.5zM173.5 580.5h.5V598h-.5zM174 571h.5V590h-.5zM174.5 560h.5V581.5h-.5zM175 545.5h.5V572h-.5zM175.5 529h.5V561h-.5zM176 513h.5V546.5h-.5zM176.5 499.5h.5V530h-.5zM177 489.5h.5V514h-.5zM177.5 480.5h.5V500.5h-.5zM178 472h.5V490.5h-.5zM178.5 464.5h.5V481.5h-.5zM179 460.5h.5V473h-.5zM179.5 460.5h.5V465.5h-.5zM180 460.5h.5V468.5h-.5zM180.5 462h.5V474.5h-.5zM181 461h.5V475h-.5zM181.5 463.5h.5V486h-.5zM182 474h.5V500.5h-.5zM182.5 485h.5V518h-.5zM183 499.5h.5V538.5h-.5zM183.5 517h.5V558h-.5zM184 537.5h.5V573.5h-.5zM184.5 557h.5V586h-.5zM185 572.5h.5V597h-.5zM185.5 585h.5V607h-.5zM186 596h.5V616h-.5zM186.5 606h.5V620h-.5zM187 615h.5V620.5h-.5zM187.5 610h.5V620.5h-.5zM188 600h.5V618h-.5zM188.5 589.5h.5V611h-.5zM189 578h.5V601h-.5zM189.5 563.5h.5V590.5h-.5zM190 545h.5V579h-.5zM190.5 525h.5V564.5h-.5zM191 506h.5V546h-.5zM191.5 490h.5V526h-.5zM192 478h.5V507h-.5zM192.5 467.5h.5V491h-.5zM193 457h.5V479h-.5zM193.5 448.5h.5V468.5h-.5zM194 445h.5V458h-.5zM194.5 444.5h.5V449.5h-.5zM195 444.5h.5V456h-.5zM195.5 447h.5V466h-.5zM196 455h.5V476.5h-.5zM196.5 465h.5V488h-.5zM197 475.5h.5V503h-.5zM197.5 487h.5V521.5h-.5zM198 502h.5V541.5h-.5zM198.5 520.5h.5V560.5h-.5zM199 540.5h.5V576h-.5zM199.5 559.5h.5V588h-.5zM200 575h.5V598.5h-.5zM200.5 587h.5V608.5h-.5zM201 597.5h.5V617h-.5zM201.5 607.5h.5V620.5h-.5zM202 616h.5V620.5h-.5zM202.5 608.5h.5V620.5h-.5zM203 598h.5V617.5h-.5zM203.5 587.5h.5V609.5h-.5zM204 575.5h.5V599h-.5zM204.5 561h.5V588.5h-.5zM205 542h.5V576.5h-.5zM205.5 521.5h.5V562h-.5zM206 503h.5V543h-.5zM206.5 488h.5V522.5h-.5zM207 476.5h.5V504h-.5zM207.5 465.5h.5V489h-.5zM208 455.5h.5V477.5h-.5zM208.5 447.5h.5V466.5h-.5zM209 444.5h.5V456.5h-.5zM209.5 444.5h.5V449h-.5zM210 444.5h.5V457.5h-.5zM210.5 448h.5V467.5h-.5zM211 456.5h.5V478.5h-.5zM211.5 466.5h.5V490.5h-.5zM212 477.5h.5V505.5h-.5zM212.5 489.5h.5V524.5h-.5zM213 504.5h.5V545h-.5zM213.5 523.5h.5V563.5h-.5zM214 544h.5V578h-.5zM214.5 562.5h.5V589.5h-.5zM215 577h.5V600h-.5zM215.5 588.5h.5V610h-.5zM216 599h.5V618h-.5zM216.5 609h.5V620.5h-.5zM217 615.5h.5V620.5h-.5zM217.5 607h.5V620h-.5zM218 596.5h.5V616.5h-.5zM218.5 586h.5V608h-.5zM219 573.5h.5V597.5h-.5zM219.5 558h.5V587h-.5zM220 539h.5V574.5h-.5zM220.5 518.5h.5V559h-.5zM221 500.5h.5V540h-.5zM221.5 486h.5V519.5h-.5zM222 474.5h.5V501.5h-.5zM222.5 464h.5V487h-.5zM223 454h.5V475.5h-.5zM223.5 446.5h.5V465h-.5zM224 444.5h.5V455h-.5zM224.5 444.5h.5V450h-.5zM225 445h.5V459h-.5zM225.5 449h.5V469.5h-.5zM226 458h.5V480h-.5zM226.5 468.5h.5V492.5h-.5zM227 479h.5V508.5h-.5zM227.5 491.5h.5V528h-.5zM228 507.5h.5V548h-.5zM228.5 527h.5V566h-.5zM229 547h.5V580h-.5zM229.5 565h.5V591.5h-.5zM230 579h.5V602h-.5zM230.5 590.5h.5V611.5h-.5zM231 601h.5V618.5h-.5zM231.5 610.5h.5V620.5h-.5zM232 614h.5V620.5h-.5zM232.5 605h.5V620h-.5zM233 595h.5V615h-.5zM233.5 584h.5V606h-.5zM234 571.5h.5V596h-.5zM234.5 555h.5V585h-.5zM235 535.5h.5V572.5h-.5zM235.5 515.5h.5V556h-.5zM236 498h.5V536.5h-.5zM236.5 484h.5V516.5h-.5zM237 473h.5V499h-.5zM237.5 462.5h.5V485h-.5zM238 452.5h.5V474h-.5zM238.5 446h.5V463.5h-.5zM239 444.5h.5V453.5h-.5zM239.5 444.5h.5V451.5h-.5zM240 445h.5V460.5h-.5zM240.5 450.5h.5V471h-.5zM241 459.5h.5V482h-.5zM241.5 470h.5V495h-.5zM242 481h.5V511.5h-.5zM242.5 494h.5V531h-.5zM243 510.5h.5V551h-.5zM243.5 530h.5V568.5h-.5zM244 550h.5V582h-.5zM244.5 567.5h.5V593h-.5zM245 581h.5V603.5h-.5zM245.5 592h.5V613h-.5zM246 602.5h.5V619.5h-.5zM246.5 612h.5V620.5h-.5zM247 613h.5V620.5h-.5zM247.5 603.5h.5V619.5h-.5zM248 593h.5V614h-.5zM248.5 582h.5V604.5h-.5zM249 569h.5V594h-.5zM249.5 552h.5V583h-.5zM250 532.5h.5V570h-.5zM250.5 512.5h.5V553h-.5zM251 495.5h.5V533.5h-.5zM251.5 482h.5V513.5h-.5zM252 471h.5V496.5h-.5zM252.5 460.5h.5V483h-.5zM253 451.5h.5V472h-.5zM253.5 445.5h.5V461.5h-.5zM254 444.5h.5V452.5h-.5zM254.5 444.5h.5V452.5h-.5zM255 445.5h.5V462h-.5zM255.5 451.5h.5V472.5h-.5zM256 461h.5V484h-.5zM256.5 471.5h.5V497h-.5zM257 483h.5V514.5h-.5zM257.5 496h.5V534.5h-.5zM258 513.5h.5V554h-.5zM258.5 533.5h.5V571h-.5zM259 553h.5V584h-.5zM259.5 570h.5V594.5h-.5zM260 583h.5V605h-.5zM260.5 593.5h.5V614.5h-.5zM261 604h.5V620h-.5zM261.5 613.5h.5V620.5h-.5zM262 611.5h.5V620.5h-.5zM262.5 602h.5V619h-.5zM263 591.5h.5V612.5h-.5zM263.5 580.5h.5V603h-.5zM264 566.5h.5V592.5h-.5zM264.5 549h.5V581.5h-.5zM265 529h.5V567.5h-.5zM265.5 509.5h.5V550h-.5zM266 493h.5V530h-.5zM266.5 480.5h.5V510.5h-.5zM267 469.5h.5V494h-.5zM267.5 459h.5V481.5h-.5zM268 450h.5V470.5h-.5zM268.5 445h.5V460h-.5zM269 444.5h.5V451h-.5zM269.5 444.5h.5V454h-.5zM270 446h.5V464h-.5zM270.5 453h.5V474.5h-.5zM271 463h.5V485.5h-.5zM271.5 473.5h.5V499.5h-.5zM272 484.5h.5V517.5h-.5zM272.5 498.5h.5V537.5h-.5zM273 516.5h.5V557h-.5zM273.5 536.5h.5V573h-.5zM274 556h.5V585.5h-.5zM274.5 572h.5V596.5h-.5zM275 584.5h.5V607h-.5zM275.5 595.5h.5V615.5h-.5zM276 606h.5V620h-.5zM276.5 614.5h.5V620.5h-.5zM277 610h.5V620.5h-.5zM277.5 600.5h.5V618.5h-.5zM278 589.5h.5V611h-.5zM278.5 578.5h.5V601.5h-.5zM279 564h.5V590.5h-.5zM279.5 546h.5V579.5h-.5zM280 525.5h.5V565h-.5zM280.5 506.5h.5V547h-.5zM281 491h.5V526.5h-.5zM281.5 478.5h.5V507.5h-.5zM282 468h.5V492h-.5zM282.5 457.5h.5V479.5h-.5zM283 449h.5V469h-.5zM283.5 445h.5V458.5h-.5zM284 444.5h.5V450h-.5zM284.5 444.5h.5V455.5h-.5zM285 447h.5V465.5h-.5zM285.5 454.5h.5V476h-.5zM286 464.5h.5V487.5h-.5zM286.5 475h.5V502h-.5zM287 486.5h.5V520.5h-.5zM287.5 501h.5V541h-.5zM288 519.5h.5V560h-.5zM288.5 540h.5V575.5h-.5zM289 559h.5V587.5h-.5zM289.5 574.5h.5V598h-.5zM290 586.5h.5V608.5h-.5zM290.5 597h.5V616.5h-.5zM291 607.5h.5V620.5h-.5zM291.5 615.5h.5V620.5h-.5zM292 608.5h.5V620.5h-.5zM292.5 598.5h.5V617.5h-.5zM293 588h.5V609.5h-.5zM293.5 576h.5V599.5h-.5zM294 561.5h.5V589h-.5zM294.5 543h.5V577h-.5zM295 522.5h.5V562.5h-.5zM295.5 503.5h.5V544h-.5zM296 488.5h.5V523.5h-.5zM296.5 476.5h.5V504.5h-.5zM297 466h.5V489.5h-.5zM297.5 456h.5V477.5h-.5zM298 448h.5V467h-.5zM298.5 444.5h.5V457h-.5zM299 444.5h.5V449h-.5zM299.5 444.5h.5V457h-.5zM300 448h.5V467h-.5zM300.5 456h.5V478h-.5zM301 466h.5V490h-.5zM301.5 477h.5V505h-.5zM302 489h.5V524h-.5zM302.5 504h.5V544h-.5zM303 523h.5V562.5h-.5zM303.5 543h.5V577.5h-.5zM304 561.5h.5V589h-.5zM304.5 576.5h.5V600h-.5zM305 588h.5V610h-.5zM305.5 599h.5V617.5h-.5zM306 609h.5V620.5h-.5zM306.5 615.5h.5V620.5h-.5zM307 607h.5V620.5h-.5zM307.5 597h.5V616.5h-.5zM308 586h.5V608h-.5zM308.5 574h.5V598h-.5zM309 558.5h.5V587h-.5zM309.5 539.5h.5V575h-.5zM310 519.5h.5V559.5h-.5zM310.5 501h.5V540.5h-.5zM311 486.5h.5V520.5h-.5zM311.5 475h.5V502h-.5zM312 464.5h.5V487.5h-.5zM312.5 454.5h.5V476h-.5zM313 447h.5V465.5h-.5zM313.5 444.5h.5V455.5h-.5zM314 444.5h.5V450h-.5zM314.5 445h.5V458.5h-.5zM315 449h.5V469h-.5zM315.5 457.5h.5V479.5h-.5zM316 468h.5V492h-.5zM316.5 478.5h.5V507.5h-.5zM317 491h.5V527h-.5zM317.5 506.5h.5V547.5h-.5zM318 526h.5V565.5h-.5zM318.5 546.5h.5V579.5h-.5zM319 564.5h.5V591h-.5zM319.5 578.5h.5V601.5h-.5zM320 590h.5V611.5h-.5zM320.5 600.5h.5V618.5h-.5zM321 610.5h.5V620.5h-.5zM321.5 614.5h.5V620.5h-.5zM322 605.5h.5V620h-.5zM322.5 595.5h.5V615.5h-.5zM323 584.5h.5V606.5h-.5zM323.5 572h.5V596.5h-.5zM324 556h.5V585.5h-.5zM324.5 536.5h.5V573h-.5zM325 516h.5V557h-.5zM325.5 498.5h.5V537.5h-.5zM326 484.5h.5V517h-.5zM326.5 473.5h.5V499.5h-.5zM327 462.5h.5V485.5h-.5zM327.5 453h.5V474.5h-.5zM328 446h.5V463.5h-.5zM328.5 444.5h.5V454h-.5zM329 444.5h.5V451h-.5zM329.5 445h.5V460h-.5zM330 450h.5V467h-.5zM330.5 458h.5V478.5h-.5zM331 466h.5V492h-.5zM331.5 477.5h.5V509.5h-.5zM332 491h.5V530h-.5zM332.5 508.5h.5V551.5h-.5zM333 529h.5V570h-.5zM333.5 550.5h.5V584h-.5zM334 569h.5V596h-.5zM334.5 583h.5V607h-.5zM335 595h.5V617h-.5zM335.5 606h.5V624h-.5zM336 616h.5V625h-.5zM336.5 618h.5V625h-.5zM337 608h.5V624.5h-.5zM337.5 597h.5V619h-.5zM338 585.5h.5V609h-.5zM338.5 571.5h.5V598h-.5zM339 554h.5V586.5h-.5zM339.5 533h.5V572.5h-.5zM340 512h.5V555h-.5zM340.5 494h.5V534h-.5zM341 480h.5V513h-.5zM341.5 468h.5V495h-.5zM342 457h.5V481h-.5zM342.5 447h.5V469h-.5zM343 440.5h.5V458h-.5zM343.5 440h.5V448h-.5zM344 440h.5V448h-.5zM344.5 440.5h.5V458h-.5zM345 447h.5V469h-.5zM345.5 457h.5V480.5h-.5zM346 468h.5V494.5h-.5zM346.5 479.5h.5V512.5h-.5zM347 493.5h.5V533.5h-.5zM347.5 511.5h.5V554.5h-.5zM348 532.5h.5V572.5h-.5zM348.5 553.5h.5V586h-.5zM349 571.5h.5V597.5h-.5zM349.5 585h.5V609h-.5zM350 596.5h.5V618.5h-.5zM350.5 608h.5V624.5h-.5zM351 617.5h.5V625h-.5zM351.5 616.5h.5V625h-.5zM352 606.5h.5V624h-.5zM352.5 595h.5V617.5h-.5zM353 583.5h.5V607.5h-.5zM353.5 569h.5V596h-.5zM354 551h.5V584.5h-.5zM354.5 529.5h.5V570h-.5zM355 509h.5V552h-.5zM355.5 491.5h.5V530.5h-.5zM356 478h.5V510h-.5zM356.5 466.5h.5V492.5h-.5zM357 455.5h.5V479h-.5zM357.5 445.5h.5V467.5h-.5zM358 440h.5V456.5h-.5zM358.5 440h.5V446.5h-.5zM359 440h.5V449.5h-.5zM359.5 441h.5V459.5h-.5zM360 448.5h.5V470.5h-.5zM360.5 458.5h.5V482.5h-.5zM361 469.5h.5V497h-.5zM361.5 481.5h.5V515.5h-.5zM362 496h.5V537h-.5zM362.5 514.5h.5V557.5h-.5zM363 536h.5V575h-.5zM363.5 556.5h.5V588h-.5zM364 574h.5V599.5h-.5zM364.5 587h.5V610.5h-.5zM365 598.5h.5V620h-.5zM365.5 609.5h.5V625h-.5zM366 619h.5V625h-.5zM366.5 615h.5V625h-.5zM367 604.5h.5V623.5h-.5zM367.5 593.5h.5V616h-.5zM368 581.5h.5V605.5h-.5zM368.5 566.5h.5V594.5h-.5zM369 547.5h.5V582.5h-.5zM369.5 526h.5V567.5h-.5zM370 506h.5V548.5h-.5zM370.5 489h.5V527h-.5zM371 476h.5V507h-.5zM371.5 464.5h.5V490h-.5zM372 453.5h.5V477h-.5zM372.5 444.5h.5V465.5h-.5zM373 440h.5V454.5h-.5zM373.5 440h.5V445.5h-.5zM374 440h.5V451h-.5zM374.5 442h.5V461.5h-.5zM375 450h.5V472.5h-.5zM375.5 460.5h.5V484.5h-.5zM376 471.5h.5V500h-.5zM376.5 483.5h.5V519h-.5zM377 499h.5V540.5h-.5zM377.5 518h.5V560.5h-.5zM378 539.5h.5V577h-.5zM378.5 559.5h.5V590h-.5zM379 576h.5V601.5h-.5zM379.5 589h.5V612h-.5zM380 600.5h.5V621h-.5zM380.5 611h.5V625h-.5zM381 620h.5V625h-.5zM381.5 613.5h.5V625h-.5zM382 603h.5V622.5h-.5zM382.5 591.5h.5V614.5h-.5zM383 579.5h.5V604h-.5zM383.5 564h.5V592.5h-.5zM384 544.5h.5V580.5h-.5zM384.5 523h.5V565h-.5zM385 503h.5V545.5h-.5zM385.5 486.5h.5V524h-.5zM386 474h.5V504h-.5zM386.5 463h.5V487.5h-.5zM387 452h.5V475h-.5zM387.5 443.5h.5V464h-.5zM388 440h.5V453h-.5zM388.5 440h.5V444.5h-.5zM389 440h.5V452.5h-.5zM389.5 443h.5V463h-.5zM390 451.5h.5V474.5h-.5zM390.5 462h.5V487h-.5zM391 473.5h.5V502.5h-.5zM391.5 486h.5V522.5h-.5zM392 501.5h.5V544h-.5zM392.5 521.5h.5V563.5h-.5zM393 543h.5V579.5h-.5zM393.5 562.5h.5V592h-.5zM394 578.5h.5V603h-.5zM394.5 591h.5V614h-.5zM395 602h.5V622h-.5zM395.5 613h.5V625h-.5zM396 620.5h.5V625h-.5zM396.5 612h.5V625h-.5zM397 601h.5V621.5h-.5zM397.5 590h.5V613h-.5zM398 577h.5V602h-.5zM398.5 561h.5V591h-.5zM399 541h.5V578h-.5zM399.5 519.5h.5V562h-.5zM400 500h.5V542h-.5zM400.5 484.5h.5V520.5h-.5zM401 472h.5V501h-.5zM401.5 461h.5V485.5h-.5zM402 450.5h.5V473h-.5zM402.5 442.5h.5V462h-.5zM403 440h.5V451.5h-.5zM403.5 440h.5V445h-.5zM404 440h.5V454h-.5zM404.5 444h.5V465h-.5zM405 453h.5V476h-.5zM405.5 464h.5V489h-.5zM406 475h.5V505.5h-.5zM406.5 488h.5V526h-.5zM407 504.5h.5V547.5h-.5zM407.5 525h.5V566.5h-.5zM408 546.5h.5V581.5h-.5zM408.5 565.5h.5V593.5h-.5zM409 580.5h.5V605h-.5zM409.5 592.5h.5V615.5h-.5zM410 604h.5V623h-.5zM410.5 614.5h.5V625h-.5zM411 619.5h.5V625h-.5zM411.5 610h.5V625h-.5zM412 599.5h.5V620.5h-.5zM412.5 588h.5V611h-.5zM413 575h.5V600.5h-.5zM413.5 558h.5V589h-.5zM414 537.5h.5V576h-.5zM414.5 516h.5V559h-.5zM415 497h.5V538.5h-.5zM415.5 482.5h.5V517h-.5zM416 470.5h.5V498h-.5zM416.5 459.5h.5V483.5h-.5zM417 449h.5V471.5h-.5zM417.5 441.5h.5V460.5h-.5zM418 440h.5V450h-.5zM418.5 440h.5V446h-.5zM419 440h.5V455.5h-.5zM419.5 445h.5V466.5h-.5zM420 454.5h.5V478h-.5zM420.5 465.5h.5V491.5h-.5zM421 477h.5V508.5h-.5zM421.5 490.5h.5V529h-.5zM422 507.5h.5V550.5h-.5zM422.5 528h.5V569h-.5zM423 549.5h.5V583.5h-.5zM423.5 568h.5V595.5h-.5zM424 582.5h.5V606.5h-.5zM424.5 594.5h.5V617h-.5zM425 605.5h.5V624h-.5zM425.5 616h.5V625h-.5zM426 618h.5V625h-.5zM426.5 608.5h.5V624.5h-.5zM427 597.5h.5V619h-.5zM427.5 586h.5V609.5h-.5zM428 572.5h.5V598.5h-.5zM428.5 555h.5V587h-.5zM429 534h.5V573.5h-.5zM429.5 513h.5V556h-.5zM430 494.5h.5V535h-.5zM430.5 480.5h.5V514h-.5zM431 468.5h.5V495.5h-.5zM431.5 457.5h.5V481.5h-.5zM432 447.5h.5V469.5h-.5zM432.5 441h.5V458.5h-.5zM433 440h.5V448.5h-.5zM433.5 440h.5V447.5h-.5zM434 440.5h.5V457.5h-.5zM434.5 446.5h.5V468.5h-.5zM435 456.5h.5V480h-.5zM435.5 467.5h.5V494h-.5zM436 479h.5V511.5h-.5zM436.5 493h.5V532.5h-.5zM437 510.5h.5V554h-.5zM437.5 531.5h.5V571.5h-.5zM438 553h.5V585.5h-.5zM438.5 570.5h.5V597.5h-.5zM439 584.5h.5V608.5h-.5zM439.5 596.5h.5V618.5h-.5zM440 607.5h.5V624.5h-.5zM440.5 617.5h.5V625h-.5zM441 617h.5V625h-.5zM441.5 607h.5V624h-.5zM442 595.5h.5V618h-.5zM442.5 584h.5V608h-.5zM443 570h.5V596.5h-.5zM443.5 551.5h.5V585h-.5zM444 530.5h.5V571h-.5zM444.5 509.5h.5V552.5h-.5zM445 492h.5V531.5h-.5zM445.5 478.5h.5V510.5h-.5zM446 467h.5V493h-.5zM446.5 456h.5V479.5h-.5zM447 446h.5V468h-.5zM447.5 440.5h.5V457h-.5zM448 440h.5V447h-.5zM448.5 440h.5V449h-.5zM449 441h.5V459h-.5zM449.5 448h.5V470h-.5zM450 458h.5V482h-.5zM450.5 469h.5V496.5h-.5zM451 481h.5V515h-.5zM451.5 495.5h.5V536h-.5zM452 514h.5V557h-.5zM452.5 535h.5V574h-.5zM453 556h.5V587.5h-.5zM453.5 573h.5V599h-.5zM454 586.5h.5V610h-.5zM454.5 598h.5V619.5h-.5zM455 609h.5V625h-.5zM455.5 618.5h.5V625h-.5zM456 615.5h.5V625h-.5zM456.5 605h.5V623.5h-.5zM457 594h.5V616.5h-.5zM457.5 582h.5V606h-.5zM458 567h.5V595h-.5zM458.5 548.5h.5V583h-.5zM459 527h.5V568h-.5zM459.5 506.5h.5V549.5h-.5zM460 489.5h.5V528h-.5zM460.5 476.5h.5V507.5h-.5zM461 465h.5V490.5h-.5zM461.5 454h.5V477.5h-.5zM462 445h.5V466h-.5zM462.5 440h.5V455h-.5zM463 440h.5V446h-.5zM463.5 440h.5V450.5h-.5zM464 442h.5V461h-.5zM464.5 449.5h.5V472h-.5zM465 460h.5V484h-.5zM465.5 471h.5V499h-.5zM466 483h.5V518h-.5zM466.5 498h.5V539.5h-.5zM467 517h.5V560h-.5zM467.5 538.5h.5V576.5h-.5zM468 559h.5V589.5h-.5zM468.5 575.5h.5V601h-.5zM469 588.5h.5V611.5h-.5zM469.5 600h.5V621h-.5zM470 610.5h.5V625h-.5zM470.5 620h.5V625h-.5zM471 614h.5V625h-.5zM471.5 603h.5V623h-.5zM472 592h.5V615h-.5zM472.5 580h.5V604h-.5zM473 564.5h.5V593h-.5zM473.5 545h.5V581h-.5zM474 523.5h.5V565.5h-.5zM474.5 503.5h.5V546h-.5zM475 487.5h.5V524.5h-.5zM475.5 474.5h.5V504.5h-.5zM476 463.5h.5V488.5h-.5zM476.5 452.5h.5V475.5h-.5zM477 443.5h.5V464.5h-.5zM477.5 440h.5V453.5h-.5zM478 440h.5V444.5h-.5zM478.5 440h.5V452h-.5zM479 442.5h.5V469.5h-.5zM479.5 451h.5V480h-.5zM480 468.5h.5V491h-.5zM480.5 479h.5V505h-.5zM481 490h.5V522.5h-.5zM481.5 504h.5V542h-.5zM482 521.5h.5V560h-.5zM482.5 541h.5V574h-.5zM483 559h.5V585.5h-.5zM483.5 573h.5V595.5h-.5zM484 584.5h.5V605.5h-.5zM484.5 594.5h.5V613h-.5zM485 604.5h.5V616h-.5zM485.5 612h.5V616h-.5zM486 604h.5V616h-.5zM486.5 594.5h.5V613h-.5zM487 584.5h.5V605h-.5zM487.5 573h.5V595.5h-.5zM488 558.5h.5V585.5h-.5zM488.5 541h.5V574h-.5zM489 521.5h.5V559.5h-.5zM489.5 504h.5V542h-.5zM490 490h.5V522.5h-.5zM490.5 478.5h.5V505h-.5zM491 468.5h.5V491h-.5zM491.5 459h.5V479.5h-.5zM492 451.5h.5V469.5h-.5zM492.5 449h.5V460h-.5zM493 449h.5V453.5h-.5zM493.5 449h.5V461.5h-.5zM494 452.5h.5V471.5h-.5zM494.5 460.5h.5V481.5h-.5zM495 470.5h.5V493h-.5zM495.5 480.5h.5V507.5h-.5zM496 492h.5V526h-.5zM496.5 506.5h.5V545h-.5zM497 525h.5V562.5h-.5zM497.5 544h.5V576h-.5zM498 561.5h.5V587h-.5zM498.5 575h.5V597h-.5zM499 586h.5V606.5h-.5zM499.5 596h.5V614h-.5zM500 605.5h.5V616h-.5zM500.5 611h.5V616h-.5zM501 602.5h.5V616h-.5zM501.5 593h.5V612h-.5zM502 582.5h.5V603.5h-.5zM502.5 571h.5V594h-.5zM503 556h.5V583.5h-.5zM503.5 537.5h.5V572h-.5zM504 518.5h.5V557h-.5zM504.5 501.5h.5V538.5h-.5zM505 488h.5V519.5h-.5zM505.5 477h.5V502.5h-.5zM506 467h.5V489h-.5zM506.5 457.5h.5V478h-.5zM507 451h.5V468h-.5zM507.5 449h.5V458.5h-.5zM508 449h.5V454.5h-.5zM508.5 449.5h.5V463h-.5zM509 453.5h.5V473h-.5zM509.5 462h.5V483h-.5zM510 472h.5V495h-.5zM510.5 482h.5V510.5h-.5zM511 494h.5V529h-.5zM511.5 509.5h.5V548h-.5zM512 528h.5V565h-.5zM512.5 547h.5V578h-.5zM513 564h.5V589h-.5zM513.5 577h.5V599h-.5zM514 588h.5V608h-.5zM514.5 598h.5V614.5h-.5zM515 607h.5V616h-.5zM515.5 610h.5V616h-.5zM516 601h.5V615.5h-.5zM516.5 591.5h.5V611h-.5zM517 581h.5V602h-.5zM517.5 569h.5V592.5h-.5zM518 553.5h.5V582h-.5zM518.5 534.5h.5V570h-.5zM519 515.5h.5V554.5h-.5zM519.5 499h.5V535.5h-.5zM520 486h.5V516.5h-.5zM520.5 475.5h.5V500h-.5zM521 465.5h.5V487h-.5zM521.5 456h.5V476.5h-.5zM522 450h.5V466.5h-.5zM522.5 449h.5V457h-.5zM523 449h.5V456h-.5zM523.5 449.5h.5V464.5h-.5zM524 455h.5V474.5h-.5zM524.5 463.5h.5V485h-.5zM525 473.5h.5V497.5h-.5zM525.5 484h.5V513h-.5zM526 496.5h.5V532h-.5zM526.5 512h.5V551h-.5zM527 531h.5V567h-.5zM527.5 550h.5V580h-.5zM528 566h.5V590.5h-.5zM528.5 579h.5V600.5h-.5zM529 589.5h.5V609.5h-.5zM529.5 599.5h.5V615h-.5zM530 608.5h.5V616h-.5zM530.5 608.5h.5V616h-.5zM531 599.5h.5V615h-.5zM531.5 589.5h.5V609.5h-.5zM532 579h.5V600.5h-.5zM532.5 566.5h.5V590.5h-.5zM533 550.5h.5V580h-.5zM533.5 531.5h.5V567.5h-.5zM534 512.5h.5V551.5h-.5zM534.5 496.5h.5V532.5h-.5zM535 484h.5V513.5h-.5zM535.5 474h.5V497.5h-.5zM536 464h.5V485h-.5zM536.5 455h.5V475h-.5zM537 449.5h.5V465h-.5zM537.5 449h.5V456h-.5zM538 449h.5V457h-.5zM538.5 450h.5V466h-.5zM539 456h.5V476h-.5zM539.5 465h.5V486.5h-.5zM540 475h.5V499.5h-.5zM540.5 485.5h.5V516h-.5zM541 498.5h.5V535h-.5zM541.5 515h.5V554h-.5zM542 534h.5V569.5h-.5zM542.5 553h.5V581.5h-.5zM543 568.5h.5V592h-.5zM543.5 580.5h.5V602h-.5zM544 591h.5V610.5h-.5zM544.5 601h.5V615.5h-.5zM545 609.5h.5V616h-.5zM545.5 607.5h.5V616h-.5zM546 598h.5V614.5h-.5zM546.5 588h.5V608.5h-.5zM547 577.5h.5V599h-.5zM547.5 564.5h.5V589h-.5zM548 547.5h.5V578.5h-.5zM548.5 528.5h.5V565.5h-.5zM549 510h.5V548.5h-.5zM549.5 494.5h.5V529.5h-.5zM550 482.5h.5V511h-.5zM550.5 472h.5V495.5h-.5zM551 462.5h.5V483.5h-.5zM551.5 454h.5V473h-.5zM552 449.5h.5V463.5h-.5zM552.5 449h.5V455h-.5zM553 449h.5V458.5h-.5zM553.5 450.5h.5V467h-.5zM554 457.5h.5V477h-.5zM554.5 466h.5V488h-.5zM555 476h.5V501.5h-.5zM555.5 487h.5V518.5h-.5zM556 500.5h.5V538.5h-.5zM556.5 517.5h.5V557h-.5zM557 537.5h.5V572h-.5zM557.5 556h.5V584h-.5zM558 571h.5V594.5h-.5zM558.5 583h.5V604.5h-.5zM559 593.5h.5V613h-.5zM559.5 603.5h.5V617h-.5zM560 612h.5V617h-.5zM560.5 607h.5V617h-.5zM561 597.5h.5V615h-.5zM561.5 587h.5V608h-.5zM562 576h.5V598.5h-.5zM562.5 562h.5V588h-.5zM563 544.5h.5V577h-.5zM563.5 525h.5V563h-.5zM564 507h.5V545.5h-.5zM564.5 492h.5V526h-.5zM565 480h.5V508h-.5zM565.5 470h.5V493h-.5zM566 460h.5V481h-.5zM566.5 451.5h.5V471h-.5zM567 448h.5V461h-.5zM567.5 448h.5V452.5h-.5zM568 448h.5V459h-.5zM568.5 450.5h.5V468.5h-.5zM569 458h.5V478.5h-.5zM569.5 467.5h.5V490h-.5zM570 477.5h.5V504h-.5zM570.5 489h.5V522h-.5zM571 503h.5V541.5h-.5zM571.5 521h.5V559.5h-.5zM572 540.5h.5V574h-.5zM572.5 558.5h.5V586h-.5zM573 573h.5V596h-.5zM573.5 585h.5V606h-.5zM574 595h.5V614h-.5zM574.5 605h.5V617h-.5zM575 613h.5V617h-.5zM575.5 605.5h.5V617h-.5zM576 595.5h.5V614h-.5zM576.5 585.5h.5V606.5h-.5zM577 574h.5V596.5h-.5zM577.5 559.5h.5V586.5h-.5zM578 541.5h.5V575h-.5zM578.5 522h.5V560.5h-.5zM579 504h.5V542.5h-.5zM579.5 489.5h.5V523h-.5zM580 478.5h.5V505h-.5zM580.5 468h.5V490.5h-.5zM581 458.5h.5V479.5h-.5zM581.5 451h.5V469h-.5zM582 448h.5V459.5h-.5zM582.5 448h.5V452.5h-.5zM583 448h.5V460h-.5zM583.5 451.5h.5V470h-.5zM584 459h.5V480.5h-.5zM584.5 469h.5V492h-.5zM585 479.5h.5V506.5h-.5zM585.5 491h.5V525h-.5zM586 505.5h.5V544.5h-.5zM586.5 524h.5V562h-.5zM587 543.5h.5V576.5h-.5zM587.5 561h.5V587.5h-.5zM588 575.5h.5V597.5h-.5zM588.5 586.5h.5V607.5h-.5zM589 596.5h.5V614.5h-.5zM589.5 606.5h.5V617h-.5zM590 612h.5V617h-.5zM590.5 604h.5V617h-.5zM591 594h.5V613h-.5zM591.5 584h.5V605h-.5zM592 572h.5V595h-.5zM592.5 557h.5V585h-.5zM593 538.5h.5V573h-.5zM593.5 519h.5V558h-.5zM594 501.5h.5V539.5h-.5zM594.5 488h.5V520h-.5zM595 476.5h.5V502.5h-.5zM595.5 466.5h.5V489h-.5zM596 457h.5V477.5h-.5zM596.5 450h.5V467.5h-.5zM597 448h.5V458h-.5zM597.5 448h.5V453.5h-.5zM598 448h.5V462h-.5zM598.5 452.5h.5V471.5h-.5zM599 461h.5V482h-.5zM599.5 470.5h.5V494h-.5zM600 481h.5V509.5h-.5zM600.5 493h.5V528h-.5zM601 508.5h.5V547.5h-.5zM601.5 527h.5V564.5h-.5zM602 546.5h.5V578h-.5zM602.5 563.5h.5V589h-.5zM603 577h.5V599.5h-.5zM603.5 588h.5V608.5h-.5zM604 598.5h.5V615.5h-.5zM604.5 607.5h.5V617h-.5zM605 611h.5V617h-.5zM605.5 602.5h.5V616.5h-.5zM606 592.5h.5V612h-.5zM606.5 582h.5V603.5h-.5zM607 570h.5V593.5h-.5zM607.5 554.5h.5V583h-.5zM608 535.5h.5V571h-.5zM608.5 516h.5V555.5h-.5zM609 499h.5V536.5h-.5zM609.5 486h.5V517h-.5zM610 475h.5V500h-.5zM610.5 465h.5V487h-.5zM611 455.5h.5V476h-.5zM611.5 449h.5V466h-.5zM612 448h.5V456.5h-.5zM612.5 448h.5V454.5h-.5zM613 448.5h.5V463.5h-.5zM613.5 453.5h.5V473.5h-.5zM614 462.5h.5V484h-.5zM614.5 472.5h.5V496h-.5zM615 483h.5V512h-.5zM615.5 495h.5V531h-.5zM616 511h.5V550.5h-.5zM616.5 530h.5V567h-.5zM617 549.5h.5V580h-.5zM617.5 566h.5V591h-.5zM618 579h.5V601h-.5zM618.5 590h.5V610h-.5zM619 600h.5V616h-.5zM619.5 609h.5V617h-.5zM620 610h.5V617h-.5zM620.5 601h.5V616.5h-.5zM621 591h.5V611h-.5zM621.5 580.5h.5V602h-.5zM622 567.5h.5V592h-.5zM622.5 551.5h.5V581.5h-.5zM623 532.5h.5V568.5h-.5zM623.5 513h.5V552.5h-.5zM624 496.5h.5V533.5h-.5zM624.5 484h.5V514h-.5zM625 473.5h.5V497.5h-.5zM625.5 463.5h.5V485h-.5zM626 454.5h.5V474.5h-.5zM626.5 448.5h.5V464.5h-.5zM627 448h.5V455.5h-.5zM627.5 448h.5V455.5h-.5zM628 449h.5V468.5h-.5zM628.5 454.5h.5V478h-.5zM629 467.5h.5V488.5h-.5zM629.5 477h.5V500.5h-.5zM630 487.5h.5V516h-.5zM630.5 499.5h.5V534h-.5zM631 515h.5V552h-.5zM631.5 533h.5V567.5h-.5zM632 551h.5V579h-.5zM632.5 566.5h.5V589h-.5zM633 578h.5V598.5h-.5zM633.5 588h.5V607h-.5zM634 597.5h.5V612h-.5zM634.5 606h.5V612.5h-.5zM635 604.5h.5V612.5h-.5zM635.5 595.5h.5V611.5h-.5zM636 586h.5V605.5h-.5zM636.5 576h.5V596.5h-.5zM637 563.5h.5V587h-.5zM637.5 547.5h.5V577h-.5zM638 529.5h.5V564.5h-.5zM638.5 511.5h.5V548.5h-.5zM639 496.5h.5V530.5h-.5zM639.5 485h.5V512.5h-.5zM640 475h.5V497.5h-.5zM640.5 465.5h.5V486h-.5zM641 457.5h.5V476h-.5zM641.5 453h.5V466.5h-.5zM642 452.5h.5V458.5h-.5zM642.5 452.5h.5V461h-.5zM643 454h.5V470h-.5zM643.5 460h.5V479.5h-.5zM644 469h.5V490h-.5zM644.5 478.5h.5V502.5h-.5zM645 489h.5V519h-.5zM645.5 501.5h.5V537h-.5zM646 518h.5V555h-.5zM646.5 536h.5V569.5h-.5zM647 554h.5V581h-.5zM647.5 568.5h.5V590.5h-.5zM648 580h.5V600h-.5zM648.5 589.5h.5V608h-.5zM649 599h.5V612h-.5zM649.5 607h.5V612.5h-.5zM650 603h.5V612.5h-.5zM650.5 594h.5V610.5h-.5zM651 584.5h.5V604h-.5zM651.5 574h.5V595h-.5zM652 561h.5V585.5h-.5zM652.5 545h.5V575h-.5zM653 526.5h.5V562h-.5zM653.5 509h.5V546h-.5zM654 494.5h.5V527.5h-.5zM654.5 483.5h.5V510h-.5zM655 473.5h.5V495.5h-.5zM655.5 464h.5V484.5h-.5zM656 456.5h.5V474.5h-.5zM656.5 452.5h.5V465h-.5zM657 452.5h.5V457.5h-.5zM657.5 452.5h.5V462.5h-.5zM658 454.5h.5V471.5h-.5zM658.5 461.5h.5V481.5h-.5zM659 470.5h.5V492h-.5zM659.5 480.5h.5V505h-.5zM660 491h.5V521.5h-.5zM660.5 504h.5V540h-.5zM661 520.5h.5V557.5h-.5zM661.5 539h.5V571.5h-.5zM662 556.5h.5V582.5h-.5zM662.5 570.5h.5V592h-.5zM663 581.5h.5V601.5h-.5zM663.5 591h.5V609h-.5zM664 600.5h.5V612.5h-.5zM664.5 608h.5V612.5h-.5zM665 602h.5V612.5h-.5zM665.5 592.5h.5V610h-.5zM666 583h.5V603h-.5zM666.5 572h.5V593.5h-.5zM667 559h.5V584h-.5zM667.5 542h.5V573h-.5zM668 523.5h.5V560h-.5zM668.5 506.5h.5V543h-.5zM669 492.5h.5V524.5h-.5zM669.5 481.5h.5V507.5h-.5zM670 472h.5V493.5h-.5zM670.5 463h.5V482.5h-.5zM671 455.5h.5V473h-.5zM671.5 452.5h.5V464h-.5zM672 452.5h.5V456.5h-.5zM672.5 452.5h.5V464h-.5zM673 455.5h.5V473h-.5zM673.5 463h.5V483h-.5zM674 472h.5V493.5h-.5zM674.5 482h.5V507.5h-.5zM675 492.5h.5V524.5h-.5zM675.5 506.5h.5V543h-.5zM676 523.5h.5V560h-.5zM676.5 542h.5V573.5h-.5zM677 559h.5V584h-.5zM677.5 572.5h.5V593.5h-.5zM678 583h.5V603h-.5zM678.5 592.5h.5V610h-.5zM679 602h.5V612.5h-.5zM679.5 608h.5V612.5h-.5zM680 600.5h.5V612.5h-.5zM680.5 591h.5V609h-.5zM681 581.5h.5V601.5h-.5zM681.5 570.5h.5V592h-.5zM682 556.5h.5V582.5h-.5zM682.5 539h.5V571.5h-.5zM683 520.5h.5V557.5h-.5zM683.5 504h.5V540h-.5zM684 490.5h.5V521.5h-.5zM684.5 480h.5V505h-.5zM685 470.5h.5V491.5h-.5zM685.5 461.5h.5V481h-.5zM686 454.5h.5V471.5h-.5zM686.5 452.5h.5V462.5h-.5zM687 452.5h.5V457.5h-.5zM687.5 452.5h.5V465.5h-.5zM688 456.5h.5V474.5h-.5zM688.5 464.5h.5V484.5h-.5zM689 473.5h.5V495.5h-.5zM689.5 483.5h.5V510h-.5zM690 494.5h.5V527.5h-.5zM690.5 509h.5V546h-.5zM691 526.5h.5V562.5h-.5zM691.5 545h.5V575h-.5zM692 561.5h.5V585.5h-.5zM692.5 574h.5V595h-.5zM693 584.5h.5V604h-.5zM693.5 594h.5V610.5h-.5zM694 603h.5V612.5h-.5zM694.5 607h.5V612.5h-.5zM695 599h.5V612h-.5zM695.5 589.5h.5V608h-.5zM696 579.5h.5V600h-.5zM696.5 568.5h.5V590.5h-.5zM697 553.5h.5V580.5h-.5zM697.5 536h.5V569.5h-.5zM698 517.5h.5V554.5h-.5zM698.5 501.5h.5V537h-.5zM699 489h.5V518.5h-.5zM699.5 478.5h.5V502.5h-.5zM700 469h.5V490h-.5zM700.5 460h.5V479.5h-.5zM701 454h.5V470h-.5zM701.5 452.5h.5V461h-.5zM702 452.5h.5V458.5h-.5zM702.5 453h.5V467h-.5zM703 457.5h.5V476h-.5zM703.5 466h.5V486h-.5zM704 475h.5V497.5h-.5zM704.5 485h.5V512.5h-.5zM705 496.5h.5V530.5h-.5zM705.5 511.5h.5V549h-.5zM706 529.5h.5V564.5h-.5zM706.5 548h.5V577h-.5zM707 563.5h.5V587h-.5zM707.5 576h.5V596.5h-.5zM708 586h.5V605.5h-.5zM708.5 595.5h.5V611.5h-.5zM709 604.5h.5V612.5h-.5zM709.5 606h.5V612.5h-.5zM710 597.5h.5V612h-.5zM710.5 588h.5V607h-.5zM711 578h.5V598.5h-.5zM711.5 566h.5V589h-.5zM712 551h.5V579h-.5zM712.5 533h.5V567h-.5zM713 515h.5V552h-.5zM713.5 499h.5V534h-.5zM714 487h.5V516h-.5zM714.5 477h.5V500h-.5zM715 467.5h.5V488h-.5zM715.5 459h.5V478h-.5zM716 453.5h.5V468.5h-.5zM716.5 452.5h.5V460h-.5zM717 452.5h.5V459.5h-.5zM717.5 453.5h.5V468.5h-.5zM718 458.5h.5V478h-.5zM718.5 467.5h.5V488h-.5zM719 477h.5V500h-.5zM719.5 487h.5V515.5h-.5zM720 499h.5V533.5h-.5zM720.5 514.5h.5V551.5h-.5zM721 532.5h.5V567h-.5zM721.5 550.5h.5V578.5h-.5zM722 566h.5V588.5h-.5zM722.5 577.5h.5V598h-.5zM723 587.5h.5V606.5h-.5zM723.5 597h.5V612h-.5zM724 605.5h.5V612.5h-.5zM724.5 604.5h.5V612.5h-.5zM725 596h.5V611.5h-.5zM725.5 586.5h.5V605.5h-.5zM726 576.5h.5V597h-.5zM726.5 564h.5V587.5h-.5zM727 548.5h.5V577.5h-.5zM727.5 530h.5V565h-.5zM728 512h.5V549.5h-.5zM728.5 497h.5V531h-.5zM729 485.5h.5V513h-.5zM729.5 475.5h.5V498h-.5zM730 466h.5V486.5h-.5zM730.5 457.5h.5V476.5h-.5zM731 453h.5V467h-.5zM731.5 452.5h.5V458.5h-.5zM732 452.5h.5V461h-.5zM732.5 454h.5V470h-.5zM733 460h.5V479.5h-.5zM733.5 469h.5V489.5h-.5zM734 478.5h.5V502h-.5zM734.5 488.5h.5V518h-.5zM735 501h.5V536.5h-.5zM735.5 517h.5V554h-.5zM736 535.5h.5V569h-.5zM736.5 553h.5V580.5h-.5zM737 568h.5V590.5h-.5zM737.5 579.5h.5V599.5h-.5zM738 589.5h.5V608h-.5zM738.5 598.5h.5V612h-.5zM739 607h.5V612.5h-.5zM739.5 603.5h.5V612.5h-.5zM740 594.5h.5V611h-.5zM740.5 585h.5V604.5h-.5zM741 574.5h.5V595.5h-.5zM741.5 561.5h.5V586h-.5zM742 545.5h.5V575.5h-.5zM742.5 527h.5V562.5h-.5zM743 509.5h.5V546.5h-.5zM743.5 495h.5V528h-.5zM744 484h.5V510.5h-.5zM744.5 474h.5V496h-.5zM745 464.5h.5V485h-.5zM745.5 456.5h.5V475h-.5zM746 452.5h.5V465.5h-.5zM746.5 452.5h.5V457.5h-.5zM747 452.5h.5V462h-.5zM747.5 454.5h.5V471.5h-.5zM748 461h.5V481h-.5zM748.5 470.5h.5V491.5h-.5zM749 480h.5V504.5h-.5zM749.5 490.5h.5V521h-.5zM750 503.5h.5V539.5h-.5zM750.5 520h.5V557h-.5zM751 538.5h.5V571h-.5zM751.5 556h.5V582h-.5zM752 570h.5V592h-.5zM752.5 581h.5V601h-.5zM753 591h.5V609h-.5zM753.5 600h.5V612.5h-.5zM754 608h.5V612.5h-.5zM754.5 602h.5V612.5h-.5zM755 593h.5V610h-.5zM755.5 583.5h.5V603h-.5zM756 572.5h.5V594h-.5zM756.5 559.5h.5V584.5h-.5zM757 542.5h.5V573.5h-.5zM757.5 524h.5V560.5h-.5zM758 507h.5V543.5h-.5zM758.5 493h.5V525h-.5zM759 482h.5V508h-.5zM759.5 472.5h.5V494h-.5zM760 463h.5V483h-.5zM760.5 455.5h.5V473.5h-.5zM761 452.5h.5V464h-.5zM761.5 452.5h.5V456.5h-.5zM762 452.5h.5V463.5h-.5zM762.5 455.5h.5V473h-.5zM763 462.5h.5V482.5h-.5zM763.5 472h.5V493h-.5zM764 481.5h.5V507h-.5zM764.5 492h.5V524h-.5zM765 506h.5V542.5h-.5zM765.5 523h.5V559.5h-.5zM766 541.5h.5V573h-.5zM766.5 558.5h.5V583.5h-.5zM767 572h.5V593.5h-.5zM767.5 582.5h.5V602.5h-.5zM768 592.5h.5V610h-.5zM768.5 601.5h.5V612.5h-.5zM769 608h.5V612.5h-.5zM769.5 600.5h.5V612.5h-.5zM770 591.5h.5V609h-.5zM770.5 581.5h.5V601.5h-.5zM771 571h.5V592.5h-.5zM771.5 557h.5V582.5h-.5zM772 539.5h.5V572h-.5zM772.5 521h.5V558h-.5zM773 504.5h.5V540.5h-.5zM773.5 491h.5V522h-.5zM774 480.5h.5V505.5h-.5zM774.5 471h.5V492h-.5zM775 462h.5V481.5h-.5zM775.5 455h.5V472h-.5zM776 452.5h.5V463h-.5zM776.5 452.5h.5V457h-.5zM777 452.5h.5V465h-.5zM777.5 456h.5V468h-.5z"/>
</g></g>
<g shape-rendering="crispEdges"><rect x="31" y="112" width="747" height="1" fill="#000"/>
<rect x="31" y="384" width="747" height="1" fill="#000"/>
<rect x="31" y="112" width="1" height="273" fill="#000"/>
<rect x="777" y="112" width="1" height="273" fill="#000"/>
<rect x="31" y="410" width="747" height="1" fill="#000"/>
<rect x="31" y="670" width="747" height="1" fill="#000"/>
<rect x="31" y="410" width="1" height="261" fill="#000"/>
<rect x="777" y="410" width="1" height="261" fill="#000"/></g>
<defs>
<linearGradient id="gPlay" x1="0" y1="0" x2="1" y2="1"><stop offset="0" stop-color="#f2fbe0"/><stop offset="0.45" stop-color="#b8e070"/><stop offset="1" stop-color="#6fae2c"/></linearGradient>
<linearGradient id="gGear" x1="0" y1="0" x2="1" y2="1"><stop offset="0" stop-color="#f4f4f4"/><stop offset="1" stop-color="#a8a8a8"/></linearGradient>
<linearGradient id="gBlue" x1="0" y1="0" x2="0" y2="1"><stop offset="0" stop-color="#d8ecfa"/><stop offset="1" stop-color="#7fb4de"/></linearGradient>
<linearGradient id="gBox" x1="0" y1="0" x2="1" y2="1"><stop offset="0" stop-color="#ffffff"/><stop offset="1" stop-color="#c8c8c8"/></linearGradient>
<linearGradient id="gOr" x1="0" y1="0" x2="0" y2="1"><stop offset="0" stop-color="#ffc080"/><stop offset="1" stop-color="#e07a28"/></linearGradient>
<linearGradient id="gMl" x1="0" y1="0" x2="1" y2="0"><stop offset="0" stop-color="#5a8fb8"/><stop offset="0.45" stop-color="#8a3a20"/><stop offset="0.7" stop-color="#e8743a"/><stop offset="1" stop-color="#b04a1a"/></linearGradient>
</defs>
<linearGradient id="gTb" x1="0" y1="0" x2="1" y2="0"><stop offset="0" stop-color="#3f566a"/><stop offset="1" stop-color="#5f7a90"/></linearGradient>
<rect x="10.5" y="9.5" width="19" height="18.6" fill="#f4f6f8" stroke="#a4a9ae" stroke-width="1"/>
<rect x="11" y="10" width="18" height="2.2" fill="url(#gTb)"/>
<path d="M13.2 21.6 L17.2 18.9 L19.2 20.4 L16.4 22.6 Z" fill="#5c95c2"/>
<path d="M17.2 18.9 L21.4 14 L22.6 15.6 L19.6 21.8 L18.2 24.8 L16.4 22.6 Z" fill="#9a3a1e"/>
<path d="M21.4 14 L23.2 16.8 L25.7 23.6 L23.3 22.4 L18.4 25.8 L19.6 21.2 Z" fill="#e2733a"/>
<rect x="641" y="18" width="12" height="1" fill="#111"/>
<rect x="699.5" y="13.5" width="11" height="11" fill="none" stroke="#111" stroke-width="1"/>
<path d="M758 13 L770 25 M770 13 L758 25" stroke="#111" stroke-width="1.1" fill="none"/>
<path d="M779.3 51.6 C781 49.6 782.6 49.4 784.2 51.2 L786 53 L786.2 50.5 L788.2 50.2 L788.2 55.7 L782.6 55.7 L782.9 53.8 L785 53.6 L783.4 52.2 C782.2 51.2 781.2 51.2 779.9 52.3 Z" fill="#000"/>
<rect x="46" y="71" width="1" height="27" fill="#9a9a9a"/>
<rect x="47" y="71" width="1" height="27" fill="#ffffff"/>
<rect x="166" y="71" width="1" height="27" fill="#9a9a9a"/>
<rect x="167" y="71" width="1" height="27" fill="#ffffff"/>
<rect x="216" y="71" width="1" height="27" fill="#9a9a9a"/>
<rect x="217" y="71" width="1" height="27" fill="#ffffff"/>
<rect x="266" y="71" width="1" height="27" fill="#9a9a9a"/>
<rect x="267" y="71" width="1" height="27" fill="#ffffff"/>
<rect x="316" y="71" width="1" height="27" fill="#9a9a9a"/>
<rect x="317" y="71" width="1" height="27" fill="#ffffff"/>
<path d="M34 82 h6 l-3 3 z" fill="#1a1a1a"/>
<path d="M204 82 h6 l-3 3 z" fill="#1a1a1a"/>
<path d="M254 82 h6 l-3 3 z" fill="#1a1a1a"/>
<path d="M304 82 h6 l-3 3 z" fill="#1a1a1a"/>
<path d="M382 82 h6 l-3 3 z" fill="#1a1a1a"/>
<path d="M24.20 83.80 L24.20 84.07 L24.18 84.35 L24.16 84.62 L24.01 84.88 L23.70 85.10 L23.35 85.30 L23.00 85.48 L22.67 85.64 L22.50 85.83 L22.43 86.05 L22.35 86.27 L22.27 86.48 L22.18 86.69 L22.08 86.90 L21.97 87.10 L21.96 87.36 L22.08 87.71 L22.20 88.08 L22.30 88.46 L22.37 88.84 L22.29 89.13 L22.12 89.34 L21.93 89.54 L21.74 89.74 L21.54 89.93 L21.34 90.12 L21.13 90.29 L20.84 90.37 L20.46 90.30 L20.08 90.20 L19.71 90.08 L19.36 89.96 L19.10 89.97 L18.90 90.08 L18.69 90.18 L18.48 90.27 L18.27 90.35 L18.05 90.43 L17.83 90.50 L17.64 90.67 L17.48 91.00 L17.30 91.35 L17.10 91.70 L16.88 92.01 L16.62 92.16 L16.35 92.18 L16.07 92.20 L15.80 92.20 L15.53 92.20 L15.25 92.18 L14.98 92.16 L14.72 92.01 L14.50 91.70 L14.30 91.35 L14.12 91.00 L13.96 90.67 L13.77 90.50 L13.55 90.43 L13.33 90.35 L13.12 90.27 L12.91 90.18 L12.70 90.08 L12.50 89.97 L12.24 89.96 L11.89 90.08 L11.52 90.20 L11.14 90.30 L10.76 90.37 L10.47 90.29 L10.26 90.12 L10.06 89.93 L9.86 89.74 L9.67 89.54 L9.48 89.34 L9.31 89.13 L9.23 88.84 L9.30 88.46 L9.40 88.08 L9.52 87.71 L9.64 87.36 L9.63 87.10 L9.52 86.90 L9.42 86.69 L9.33 86.48 L9.25 86.27 L9.17 86.05 L9.10 85.83 L8.93 85.64 L8.60 85.48 L8.25 85.30 L7.90 85.10 L7.59 84.88 L7.44 84.62 L7.42 84.35 L7.40 84.07 L7.40 83.80 L7.40 83.53 L7.42 83.25 L7.44 82.98 L7.59 82.72 L7.90 82.50 L8.25 82.30 L8.60 82.12 L8.93 81.96 L9.10 81.77 L9.17 81.55 L9.25 81.33 L9.33 81.12 L9.42 80.91 L9.52 80.70 L9.63 80.50 L9.64 80.24 L9.52 79.89 L9.40 79.52 L9.30 79.14 L9.23 78.76 L9.31 78.47 L9.48 78.26 L9.67 78.06 L9.86 77.86 L10.06 77.67 L10.26 77.48 L10.47 77.31 L10.76 77.23 L11.14 77.30 L11.52 77.40 L11.89 77.52 L12.24 77.64 L12.50 77.63 L12.70 77.52 L12.91 77.42 L13.12 77.33 L13.33 77.25 L13.55 77.17 L13.77 77.10 L13.96 76.93 L14.12 76.60 L14.30 76.25 L14.50 75.90 L14.72 75.59 L14.98 75.44 L15.25 75.42 L15.53 75.40 L15.80 75.40 L16.07 75.40 L16.35 75.42 L16.62 75.44 L16.88 75.59 L17.10 75.90 L17.30 76.25 L17.48 76.60 L17.64 76.93 L17.83 77.10 L18.05 77.17 L18.27 77.25 L18.48 77.33 L18.69 77.42 L18.90 77.52 L19.10 77.63 L19.36 77.64 L19.71 77.52 L20.08 77.40 L20.46 77.30 L20.84 77.23 L21.13 77.31 L21.34 77.48 L21.54 77.67 L21.74 77.86 L21.93 78.06 L22.12 78.26 L22.29 78.47 L22.37 78.76 L22.30 79.14 L22.20 79.52 L22.08 79.89 L21.96 80.24 L21.97 80.50 L22.08 80.70 L22.18 80.91 L22.27 81.12 L22.35 81.33 L22.43 81.55 L22.50 81.77 L22.67 81.96 L23.00 82.12 L23.35 82.30 L23.70 82.50 L24.01 82.72 L24.16 82.98 L24.18 83.25 L24.20 83.53 Z" fill="url(#gGear)" stroke="#505050" stroke-width="1.1" stroke-linejoin="round"/>
<circle cx="15.8" cy="83.8" r="3.5" fill="#d8d8d8" stroke="#383838" stroke-width="1.7"/>
<circle cx="15.8" cy="83.8" r="1.9" fill="#fdfdfd"/>
<path d="M56.5 81.3 L66 74.8 L66 87.8 Z" fill="url(#gBlue)" stroke="#5d87a8" stroke-width="1"/>
<rect x="66.5" y="74.5" width="2.4" height="7" fill="#b8d4ea" stroke="#5d87a8" stroke-width="0.9"/>
<rect x="70.5" y="74.5" width="2.4" height="7" fill="#b8d4ea" stroke="#5d87a8" stroke-width="0.9"/>
<path d="M74.50 85.10 L74.50 85.28 L74.49 85.47 L74.47 85.65 L74.37 85.82 L74.14 85.97 L73.90 86.09 L73.66 86.21 L73.42 86.31 L73.30 86.44 L73.26 86.58 L73.21 86.72 L73.15 86.86 L73.09 87.00 L73.03 87.13 L72.96 87.27 L72.96 87.44 L73.05 87.68 L73.14 87.93 L73.22 88.20 L73.28 88.46 L73.23 88.65 L73.11 88.79 L72.99 88.93 L72.86 89.06 L72.73 89.19 L72.59 89.31 L72.45 89.43 L72.26 89.48 L72.00 89.42 L71.73 89.34 L71.48 89.25 L71.24 89.16 L71.07 89.16 L70.93 89.23 L70.80 89.29 L70.66 89.35 L70.52 89.41 L70.38 89.46 L70.24 89.50 L70.11 89.62 L70.01 89.86 L69.89 90.10 L69.77 90.34 L69.62 90.57 L69.45 90.67 L69.27 90.69 L69.08 90.70 L68.90 90.70 L68.72 90.70 L68.53 90.69 L68.35 90.67 L68.18 90.57 L68.03 90.34 L67.91 90.10 L67.79 89.86 L67.69 89.62 L67.56 89.50 L67.42 89.46 L67.28 89.41 L67.14 89.35 L67.00 89.29 L66.87 89.23 L66.73 89.16 L66.56 89.16 L66.32 89.25 L66.07 89.34 L65.80 89.42 L65.54 89.48 L65.35 89.43 L65.21 89.31 L65.07 89.19 L64.94 89.06 L64.81 88.93 L64.69 88.79 L64.57 88.65 L64.52 88.46 L64.58 88.20 L64.66 87.93 L64.75 87.68 L64.84 87.44 L64.84 87.27 L64.77 87.13 L64.71 87.00 L64.65 86.86 L64.59 86.72 L64.54 86.58 L64.50 86.44 L64.38 86.31 L64.14 86.21 L63.90 86.09 L63.66 85.97 L63.43 85.82 L63.33 85.65 L63.31 85.47 L63.30 85.28 L63.30 85.10 L63.30 84.92 L63.31 84.73 L63.33 84.55 L63.43 84.38 L63.66 84.23 L63.90 84.11 L64.14 83.99 L64.38 83.89 L64.50 83.76 L64.54 83.62 L64.59 83.48 L64.65 83.34 L64.71 83.20 L64.77 83.07 L64.84 82.93 L64.84 82.76 L64.75 82.52 L64.66 82.27 L64.58 82.00 L64.52 81.74 L64.57 81.55 L64.69 81.41 L64.81 81.27 L64.94 81.14 L65.07 81.01 L65.21 80.89 L65.35 80.77 L65.54 80.72 L65.80 80.78 L66.07 80.86 L66.32 80.95 L66.56 81.04 L66.73 81.04 L66.87 80.97 L67.00 80.91 L67.14 80.85 L67.28 80.79 L67.42 80.74 L67.56 80.70 L67.69 80.58 L67.79 80.34 L67.91 80.10 L68.03 79.86 L68.18 79.63 L68.35 79.53 L68.53 79.51 L68.72 79.50 L68.90 79.50 L69.08 79.50 L69.27 79.51 L69.45 79.53 L69.62 79.63 L69.77 79.86 L69.89 80.10 L70.01 80.34 L70.11 80.58 L70.24 80.70 L70.38 80.74 L70.52 80.79 L70.66 80.85 L70.80 80.91 L70.93 80.97 L71.07 81.04 L71.24 81.04 L71.48 80.95 L71.73 80.86 L72.00 80.78 L72.26 80.72 L72.45 80.77 L72.59 80.89 L72.73 81.01 L72.86 81.14 L72.99 81.27 L73.11 81.41 L73.23 81.55 L73.28 81.74 L73.22 82.00 L73.14 82.27 L73.05 82.52 L72.96 82.76 L72.96 82.93 L73.03 83.07 L73.09 83.20 L73.15 83.34 L73.21 83.48 L73.26 83.62 L73.30 83.76 L73.42 83.89 L73.66 83.99 L73.90 84.11 L74.14 84.23 L74.37 84.38 L74.47 84.55 L74.49 84.73 L74.50 84.92 Z" fill="url(#gGear)" stroke="#505050" stroke-width="1" stroke-linejoin="round"/>
<circle cx="68.9" cy="85.1" r="2.4" fill="#d8d8d8" stroke="#383838" stroke-width="1.6"/>
<circle cx="68.9" cy="85.1" r="1" fill="#fdfdfd"/>
<circle cx="92.8" cy="82.8" r="9.3" fill="url(#gPlay)" stroke="#3f6a22" stroke-width="1.4"/>
<path d="M90.4 78.6 L96.7 82.8 L90.4 87 Z" fill="#2b332b"/>
<rect x="113.8" y="75.8" width="3" height="14.4" fill="#bcdcf2" stroke="#4f6f8c" stroke-width="1.1"/>
<path d="M118.8 75.8 L129 83 L118.8 90.2 Z" fill="url(#gBlue)" stroke="#4f6f8c" stroke-width="1.1" stroke-linejoin="round"/>
<circle cx="148.9" cy="82.8" r="9.6" fill="#a9a9a9"/>
<circle cx="148.9" cy="82.8" r="7.8" fill="#a0a0a0"/>
<rect x="145.2" y="79" width="7.5" height="7.6" fill="#8c8c8c"/>
<path d="M176 78.3 H178.5 M185.8 78.3 H190.2 V82 M176 89.5 H178.5 M185.8 89.5 H190.2 V86 M193 84.2 H196" stroke="#555" stroke-width="1.1" fill="none"/>
<path d="M185.8 78.3 H190.2 V82" stroke="#b06030" stroke-width="1.1" fill="none"/>
<rect x="178.5" y="75.6" width="7.3" height="5.6" rx="0.8" fill="url(#gOr)" stroke="#d98030" stroke-width="1"/>
<rect x="178.5" y="86.7" width="7.3" height="5.6" rx="0.8" fill="#f4f4f4" stroke="#707a7a" stroke-width="1.2"/>
<rect x="187.6" y="82" width="5.4" height="4.2" rx="2" fill="#fafafa" stroke="#7a7a7a" stroke-width="1"/>
<rect x="221.5" y="70.5" width="29" height="26" fill="#c4def5" stroke="#a8cbe8" stroke-width="1"/>
<rect x="233.3" y="74" width="6.6" height="1.3" fill="#1a1a1a"/>
<rect x="235" y="75.5" width="3.2" height="1.6" fill="#333"/>
<rect x="235" y="89.1" width="3.2" height="1.5" fill="#333"/>
<rect x="233.3" y="91.8" width="6.6" height="1.3" fill="#1a1a1a"/>
<path d="M239.5 86.3 L243.8 89.2" stroke="#444" stroke-width="1.8" stroke-linecap="round"/>
<circle cx="236.4" cy="83.1" r="3.9" fill="#ececec" stroke="#555" stroke-width="1.4"/>
<rect x="276.6" y="74.6" width="18.8" height="18.6" fill="url(#gBox)" stroke="#333" stroke-width="1.3"/>
<path d="M286.00 75.00 Q284.47 77.52 282.60 79.20 L286.00 78.20 L289.40 79.20 Q287.53 77.52 286.00 75.00 Z M286.00 92.80 Q287.53 90.28 289.40 88.60 L286.00 89.60 L282.60 88.60 Q284.47 90.28 286.00 92.80 Z M277.20 83.90 Q279.72 85.43 281.40 87.30 L280.40 83.90 L281.40 80.50 Q279.72 82.37 277.20 83.90 Z M294.80 83.90 Q292.28 82.37 290.60 80.50 L291.60 83.90 L290.60 87.30 Q292.28 85.43 294.80 83.90 Z" fill="#262626"/>
<path d="M286 79 V81.8 M286 89 V86.2 M281.2 84 H283.8 M290.8 84 H288.2" stroke="#7a7a7a" stroke-width="1.8"/>
<path d="M333.2 74.2 H341.6 V76.8 H335.8 V80 L339.8 84 H335.8 V90.6 H327 V88 H333.2 V84 H329.2 L333.2 80 Z" fill="#707070" stroke="#1a1a1a" stroke-width="1.8" stroke-linejoin="miter"/>
<rect x="354.6" y="74.6" width="19" height="19" fill="url(#gBox)" stroke="#4a4a4a" stroke-width="1.1"/>
<path d="M354.8 88.5 L368.5 75 L373.4 80 L359.9 93.4 Z" fill="#b5d8ea" stroke="#4d6675" stroke-width="0.9"/>
<path d="M362 84.5 l1.5 1.5 M364.5 82 l1.5 1.5 M367 79.5 l1.5 1.5 M360 86.7 l1 1 M365.3 81.3 l1 1" stroke="#4d6675" stroke-width="0.9"/>
<rect x="775.5" y="105.5" width="15" height="11" fill="#fff" stroke="#000" stroke-width="1.1"/>
<rect x="776" y="106.2" width="14" height="2.2" fill="#8a8a8a"/>
<rect x="782.4" y="110" width="1.6" height="6" fill="#777"/>
<path d="M779.6 113.2 L783.2 109.2 L786.8 113.2 L785.4 113.2 L783.2 111.4 L781 113.2 Z" fill="#000"/>
<rect x="638.5" y="699.5" width="93" height="24" fill="#f5f5f5" stroke="#fbfbfb" stroke-width="1"/>
<rect x="736.5" y="699.5" width="54" height="24" fill="#f5f5f5" stroke="#fbfbfb" stroke-width="1"/>
<rect x="636" y="710" width="1" height="13" fill="#9a9a9a"/>
<rect x="734" y="710" width="1" height="13" fill="#9a9a9a"/>
<rect x="666" y="710" width="2" height="9" fill="#222"/>
<rect x="669" y="710" width="5" height="1" fill="#888"/>
<rect x="684" y="714" width="8" height="3" fill="#555"/>
<rect x="683" y="710" width="4" height="1" fill="#999"/>
<rect x="780" y="709" width="4" height="7" rx="1" fill="#111"/>
<rect x="777" y="711" width="2" height="2" fill="#777"/>
</svg>
</body></html>
